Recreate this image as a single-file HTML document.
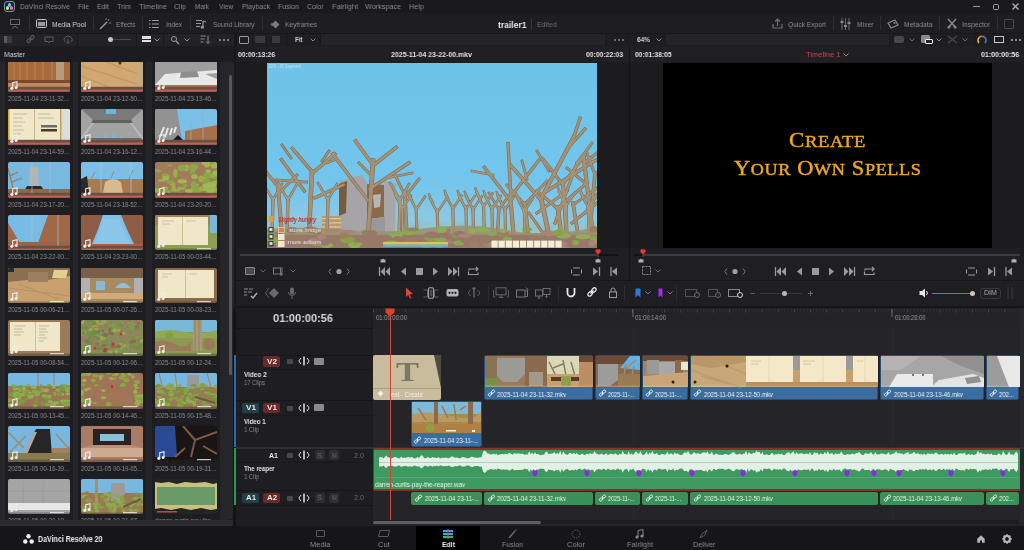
<!DOCTYPE html>
<html><head><meta charset="utf-8"><style>
html,body{margin:0;padding:0;}
body{width:1024px;height:550px;overflow:hidden;background:#1d1d21;position:relative;font-family:'Liberation Sans', sans-serif;}
div{position:absolute;box-sizing:border-box;}
.t{white-space:pre;will-change:transform;}
svg{position:absolute;overflow:visible;}
</style></head><body>
<div style="left:0px;top:0px;width:1024px;height:13px;background:#1a1a1d;"></div>
<div style="left:4px;top:1.2px;width:10.5px;height:10.5px;border-radius:3px;border:1.2px solid #8090a8;background:#1e2438"></div>
<div style="left:8px;top:3px;width:2.6px;height:3.6px;border-radius:50%;background:#5ad0f0"></div>
<div style="left:5.8px;top:6.2px;width:3px;height:3.6px;border-radius:50%;background:#c8f060"></div>
<div style="left:9.8px;top:6.2px;width:3px;height:3.6px;border-radius:50%;background:#f070a8"></div>
<div class="t" style="left:20px;top:2.50px;font-size:8px;line-height:8px;color:#8c8c90;font-weight:400;font-family:'Liberation Sans', sans-serif;transform:scaleX(0.8540);transform-origin:0 0;">DaVinci Resolve</div>
<div class="t" style="left:78px;top:2.50px;font-size:8px;line-height:8px;color:#8c8c90;font-weight:400;font-family:'Liberation Sans', sans-serif;transform:scaleX(0.8533);transform-origin:0 0;">File</div>
<div class="t" style="left:97px;top:2.50px;font-size:8px;line-height:8px;color:#8c8c90;font-weight:400;font-family:'Liberation Sans', sans-serif;transform:scaleX(0.8698);transform-origin:0 0;">Edit</div>
<div class="t" style="left:117px;top:2.50px;font-size:8px;line-height:8px;color:#8c8c90;font-weight:400;font-family:'Liberation Sans', sans-serif;transform:scaleX(0.8915);transform-origin:0 0;">Trim</div>
<div class="t" style="left:139px;top:2.50px;font-size:8px;line-height:8px;color:#8c8c90;font-weight:400;font-family:'Liberation Sans', sans-serif;transform:scaleX(0.9353);transform-origin:0 0;">Timeline</div>
<div class="t" style="left:174px;top:2.50px;font-size:8px;line-height:8px;color:#8c8c90;font-weight:400;font-family:'Liberation Sans', sans-serif;transform:scaleX(0.8707);transform-origin:0 0;">Clip</div>
<div class="t" style="left:195px;top:2.50px;font-size:8px;line-height:8px;color:#8c8c90;font-weight:400;font-family:'Liberation Sans', sans-serif;transform:scaleX(0.7873);transform-origin:0 0;">Mark</div>
<div class="t" style="left:219px;top:2.50px;font-size:8px;line-height:8px;color:#8c8c90;font-weight:400;font-family:'Liberation Sans', sans-serif;transform:scaleX(0.8138);transform-origin:0 0;">View</div>
<div class="t" style="left:242px;top:2.50px;font-size:8px;line-height:8px;color:#8c8c90;font-weight:400;font-family:'Liberation Sans', sans-serif;transform:scaleX(0.8624);transform-origin:0 0;">Playback</div>
<div class="t" style="left:278px;top:2.50px;font-size:8px;line-height:8px;color:#8c8c90;font-weight:400;font-family:'Liberation Sans', sans-serif;transform:scaleX(0.8744);transform-origin:0 0;">Fusion</div>
<div class="t" style="left:307px;top:2.50px;font-size:8px;line-height:8px;color:#8c8c90;font-weight:400;font-family:'Liberation Sans', sans-serif;transform:scaleX(0.8627);transform-origin:0 0;">Color</div>
<div class="t" style="left:332px;top:2.50px;font-size:8px;line-height:8px;color:#8c8c90;font-weight:400;font-family:'Liberation Sans', sans-serif;transform:scaleX(0.9138);transform-origin:0 0;">Fairlight</div>
<div class="t" style="left:365px;top:2.50px;font-size:8px;line-height:8px;color:#8c8c90;font-weight:400;font-family:'Liberation Sans', sans-serif;transform:scaleX(0.9028);transform-origin:0 0;">Workspace</div>
<div class="t" style="left:409px;top:2.50px;font-size:8px;line-height:8px;color:#8c8c90;font-weight:400;font-family:'Liberation Sans', sans-serif;transform:scaleX(0.9117);transform-origin:0 0;">Help</div>
<div style="left:973px;top:6px;width:7px;height:1px;background:#9a9a9e;"></div>
<div style="left:993px;top:3.5px;width:6px;height:6px;border:1.3px solid #a8a8ac;border-radius:1.5px"></div>
<svg style="left:1012px;top:3px" width="7" height="7"><path d="M0.5 0.5L6.5 6.5M6.5 0.5L0.5 6.5" stroke="#b0b0b4" stroke-width="1.3"/></svg>
<div style="left:0px;top:13px;width:1024px;height:20px;background:#1e1e21;"></div>
<div style="left:10px;top:19px;width:10px;height:6px;border:1px solid #6a6a6e"></div>
<svg style="left:11px;top:25px" width="8" height="4"><path d="M1 3.5L4 1L7 3.5" stroke="#6a6a6e" fill="none" stroke-width="1"/></svg>
<div style="left:29px;top:16px;width:1px;height:14px;background:#2e2e32;"></div>
<div style="left:92.5px;top:16px;width:1px;height:14px;background:#2e2e32;"></div>
<div style="left:142px;top:16px;width:1px;height:14px;background:#2e2e32;"></div>
<div style="left:190px;top:16px;width:1px;height:14px;background:#2e2e32;"></div>
<div style="left:261.5px;top:16px;width:1px;height:14px;background:#2e2e32;"></div>
<div style="left:833px;top:16px;width:1px;height:14px;background:#2e2e32;"></div>
<div style="left:880px;top:16px;width:1px;height:14px;background:#2e2e32;"></div>
<div style="left:939px;top:16px;width:1px;height:14px;background:#2e2e32;"></div>
<div style="left:997px;top:16px;width:1px;height:14px;background:#2e2e32;"></div>
<div style="left:36px;top:19px;width:11px;height:9px;border:1.3px solid #c0c0c4;border-radius:1.5px;background:#2a2a2e"></div>
<div style="left:38px;top:21.5px;width:7px;height:4px;background:#9a9aa0"></div>
<div class="t" style="left:52px;top:20.50px;font-size:8px;line-height:8px;color:#d4d4d8;font-weight:400;font-family:'Liberation Sans', sans-serif;transform:scaleX(0.8493);transform-origin:0 0;">Media Pool</div>
<svg style="left:99px;top:18px" width="12" height="12"><path d="M1 11L8 4" stroke="#9a9a9e" stroke-width="1.5"/><circle cx="9.5" cy="2" r="0.8" fill="#9a9a9e"/><circle cx="11" cy="5" r="0.8" fill="#9a9a9e"/><circle cx="7" cy="1" r="0.7" fill="#9a9a9e"/></svg>
<div class="t" style="left:115.5px;top:20.50px;font-size:8px;line-height:8px;color:#8c8c90;font-weight:400;font-family:'Liberation Sans', sans-serif;transform:scaleX(0.8021);transform-origin:0 0;">Effects</div>
<svg style="left:149px;top:19px" width="10" height="10"><path d="M0 1.5h1.5M3 1.5h7M0 5h1.5M3 5h7M0 8.5h1.5M3 8.5h7" stroke="#9a9a9e" stroke-width="1.2"/></svg>
<div class="t" style="left:166px;top:20.50px;font-size:8px;line-height:8px;color:#8c8c90;font-weight:400;font-family:'Liberation Sans', sans-serif;transform:scaleX(0.8172);transform-origin:0 0;">Index</div>
<svg style="left:196px;top:19px" width="10" height="10"><path d="M0 1.5h6M0 4.5h5M0 7.5h4" stroke="#9a9a9e" stroke-width="1.1"/><path d="M7 2v6" stroke="#9a9a9e" stroke-width="1.2"/><circle cx="6.3" cy="8.2" r="1.5" fill="#9a9a9e"/><path d="M7 2l3 1" stroke="#9a9a9e" stroke-width="1.2"/></svg>
<div class="t" style="left:212.5px;top:20.50px;font-size:8px;line-height:8px;color:#8c8c90;font-weight:400;font-family:'Liberation Sans', sans-serif;transform:scaleX(0.8331);transform-origin:0 0;">Sound Library</div>
<svg style="left:268px;top:20px" width="13" height="9"><path d="M2 4.5L4 2.5L6 4.5L4 6.5Z" fill="#5a5a5e"/><path d="M7.5 0.5L11.5 4.5L7.5 8.5L3.5 4.5Z" fill="#7a7a7e"/></svg>
<div class="t" style="left:285px;top:20.50px;font-size:8px;line-height:8px;color:#8c8c90;font-weight:400;font-family:'Liberation Sans', sans-serif;transform:scaleX(0.8369);transform-origin:0 0;">Keyframes</div>
<div class="t" style="left:497.5px;top:20.50px;font-size:9px;line-height:9px;color:#e8e8ec;font-weight:700;font-family:'Liberation Sans', sans-serif;transform:scaleX(0.9490);transform-origin:0 0;">trailer1</div>
<div style="left:531px;top:19px;width:1px;height:11px;background:#3a3a3e;"></div>
<div class="t" style="left:537px;top:21.00px;font-size:8px;line-height:8px;color:#6e6e72;font-weight:400;font-family:'Liberation Sans', sans-serif;transform:scaleX(0.8815);transform-origin:0 0;">Edited</div>
<svg style="left:772px;top:18px" width="11" height="11"><path d="M1 6v4h9V6" stroke="#6e6e72" fill="none" stroke-width="1.2"/><path d="M5.5 8V1M3 3.5L5.5 1L8 3.5" stroke="#6e6e72" fill="none" stroke-width="1.2"/></svg>
<div class="t" style="left:788px;top:20.50px;font-size:8px;line-height:8px;color:#8c8c90;font-weight:400;font-family:'Liberation Sans', sans-serif;transform:scaleX(0.8298);transform-origin:0 0;">Quick Export</div>
<svg style="left:840px;top:18px" width="11" height="12"><path d="M2 0v12M5.5 0v12M9 0v12" stroke="#76767a" stroke-width="0.9"/><rect x="0.5" y="3" width="3" height="2" fill="#8a8a8e"/><rect x="4" y="7" width="3" height="2" fill="#8a8a8e"/><rect x="7.5" y="4" width="3" height="2" fill="#8a8a8e"/></svg>
<div class="t" style="left:856.5px;top:20.50px;font-size:8px;line-height:8px;color:#8c8c90;font-weight:400;font-family:'Liberation Sans', sans-serif;transform:scaleX(0.8435);transform-origin:0 0;">Mixer</div>
<svg style="left:887px;top:19px" width="12" height="10"><path d="M1 4L8 1L11 6L4 9Z" stroke="#8a8a8e" fill="none" stroke-width="1.2"/><circle cx="7.5" cy="4" r="1" fill="#8a8a8e"/></svg>
<div class="t" style="left:903.5px;top:20.50px;font-size:8px;line-height:8px;color:#8c8c90;font-weight:400;font-family:'Liberation Sans', sans-serif;transform:scaleX(0.8543);transform-origin:0 0;">Metadata</div>
<svg style="left:947px;top:18px" width="10" height="11"><path d="M1 1L9 10M9 1L1 10" stroke="#8a8a8e" stroke-width="1.4"/><circle cx="2" cy="9" r="1.5" fill="#8a8a8e"/><circle cx="8" cy="9" r="1.5" fill="#8a8a8e"/></svg>
<div class="t" style="left:962px;top:20.50px;font-size:8px;line-height:8px;color:#8c8c90;font-weight:400;font-family:'Liberation Sans', sans-serif;transform:scaleX(0.8509);transform-origin:0 0;">Inspector</div>
<div style="left:1004px;top:19px;width:10px;height:10px;border:1px solid #4a4a4e;border-radius:1px"></div>
<div style="left:0px;top:33px;width:1024px;height:13px;background:#1e1e21;"></div>
<div style="left:0px;top:33px;width:234px;height:13px;background:#232327;"></div>
<div style="left:321px;top:34px;width:284px;height:11px;background:#252529;"></div>
<div style="left:666px;top:34px;width:223px;height:11px;background:#252529;"></div>
<div style="left:0px;top:33px;width:1024px;height:1px;background:#17171a;"></div>
<div style="left:0px;top:45.5px;width:1024px;height:1px;background:#19191c;"></div>
<div style="left:25px;top:33px;width:1px;height:13px;background:#1a1a1d;"></div>
<div style="left:51px;top:33px;width:1px;height:13px;background:#1a1a1d;"></div>
<div style="left:77px;top:33px;width:1px;height:13px;background:#1a1a1d;"></div>
<div style="left:136px;top:33px;width:1px;height:13px;background:#1a1a1d;"></div>
<div style="left:163px;top:33px;width:1px;height:13px;background:#1a1a1d;"></div>
<div style="left:234px;top:33px;width:1px;height:13px;background:#1a1a1d;"></div>
<div style="left:4px;top:36px;width:8px;height:7px;background:#3a3a3e;"></div>
<div style="left:4px;top:36px;width:3px;height:7px;background:#5a5a5e;"></div>
<svg style="left:26px;top:35px" width="9" height="9"><path d="M3.5 5.5L5.5 3.5" stroke="#5e5e62" stroke-width="1"/><rect x="0.8" y="4.3" width="4" height="3" rx="1.5" transform="rotate(-45 2.8 5.8)" stroke="#5e5e62" fill="none"/><rect x="4.2" y="1" width="4" height="3" rx="1.5" transform="rotate(-45 6.2 2.5)" stroke="#5e5e62" fill="none"/></svg>
<svg style="left:44px;top:35.5px" width="10" height="8"><path d="M1 1h8v4.5H6L5 7L4 5.5H1Z" stroke="#5e5e62" fill="none"/></svg>
<svg style="left:62.5px;top:35px" width="10" height="9"><path d="M2.5 6.5A2.2 2.2 0 0 1 2.8 2.3A3 3 0 0 1 8 3A1.8 1.8 0 0 1 8 6.5" stroke="#5e5e62" fill="none"/><path d="M5 4v4.5M3.5 7L5 8.5L6.5 7" stroke="#5e5e62" fill="none"/></svg>
<div style="left:112px;top:39px;width:19px;height:1.2px;background:#4a4a4e;"></div>
<div style="left:107.5px;top:36.5px;width:5.5px;height:5.5px;border-radius:50%;background:#c4c4c8"></div>
<div style="left:142.0px;top:36.3px;width:2.6px;height:2.6px;background:#e0e0e4;"></div>
<div style="left:142.0px;top:39.5px;width:2.6px;height:2.6px;background:#e0e0e4;"></div>
<div style="left:145.2px;top:36.3px;width:2.6px;height:2.6px;background:#e0e0e4;"></div>
<div style="left:145.2px;top:39.5px;width:2.6px;height:2.6px;background:#e0e0e4;"></div>
<div style="left:148.4px;top:36.3px;width:2.6px;height:2.6px;background:#e0e0e4;"></div>
<div style="left:148.4px;top:39.5px;width:2.6px;height:2.6px;background:#e0e0e4;"></div>
<svg style="left:154px;top:38px" width="6" height="4"><path d="M0.5 0.5L3 3L5.5 0.5" stroke="#8a8a8e" fill="none"/></svg>
<div style="left:171px;top:36px;width:6px;height:6px;border:1.2px solid #9a9a9e;border-radius:50%"></div>
<svg style="left:176px;top:41px" width="4" height="4"><path d="M0 0L3 3" stroke="#9a9a9e" stroke-width="1.3"/></svg>
<svg style="left:184px;top:38px" width="6" height="4"><path d="M0.5 0.5L3 3L5.5 0.5" stroke="#8a8a8e" fill="none"/></svg>
<svg style="left:200px;top:35px" width="10" height="9"><path d="M0.5 1h5M0.5 4h4M0.5 7h3M8 0.5v8M6 6.5L8 8.5L10 6.5" stroke="#8a8a8e" fill="none" stroke-width="1"/></svg>
<div style="left:219px;top:38.5px;width:2px;height:2px;border-radius:50%;background:#9a9a9e"></div>
<div style="left:223px;top:38.5px;width:2px;height:2px;border-radius:50%;background:#9a9a9e"></div>
<div style="left:227px;top:38.5px;width:2px;height:2px;border-radius:50%;background:#9a9a9e"></div>
<div style="left:234px;top:33px;width:3px;height:13px;background:#18181b;"></div>
<div style="left:239px;top:35.5px;width:10px;height:8px;border:1.2px solid #9a9a9e;border-radius:1px"></div>
<div style="left:255px;top:36px;width:10px;height:7px;background:#3a3a3e;"></div>
<div style="left:272px;top:36px;width:8px;height:7px;background:#3a3a3e;"></div>
<div style="left:287px;top:33px;width:1px;height:13px;background:#1a1a1d;"></div>
<div style="left:320px;top:33px;width:1px;height:13px;background:#1a1a1d;"></div>
<div style="left:605px;top:33px;width:1px;height:13px;background:#1a1a1d;"></div>
<div style="left:627px;top:33px;width:1px;height:13px;background:#1a1a1d;"></div>
<div style="left:665px;top:33px;width:1px;height:13px;background:#1a1a1d;"></div>
<div style="left:889px;top:33px;width:1px;height:13px;background:#1a1a1d;"></div>
<div style="left:975px;top:33px;width:1px;height:13px;background:#1a1a1d;"></div>
<div style="left:990px;top:33px;width:1px;height:13px;background:#1a1a1d;"></div>
<div style="left:1006px;top:33px;width:1px;height:13px;background:#1a1a1d;"></div>
<div class="t" style="left:295px;top:36.00px;font-size:7px;line-height:7px;color:#d0d0d4;font-weight:700;font-family:'Liberation Sans', sans-serif;transform:scaleX(0.8759);transform-origin:0 0;">Fit</div>
<svg style="left:310px;top:38px" width="6" height="4"><path d="M0.5 0.5L3 3L5.5 0.5" stroke="#8a8a8e" fill="none"/></svg>
<div style="left:614px;top:38.5px;width:2px;height:2px;border-radius:50%;background:#8a8a8e"></div>
<div style="left:618px;top:38.5px;width:2px;height:2px;border-radius:50%;background:#8a8a8e"></div>
<div style="left:622px;top:38.5px;width:2px;height:2px;border-radius:50%;background:#8a8a8e"></div>
<div class="t" style="left:637px;top:36.00px;font-size:7px;line-height:7px;color:#d0d0d4;font-weight:700;font-family:'Liberation Sans', sans-serif;transform:scaleX(0.9275);transform-origin:0 0;">64%</div>
<svg style="left:656px;top:38px" width="6" height="4"><path d="M0.5 0.5L3 3L5.5 0.5" stroke="#8a8a8e" fill="none"/></svg>
<div style="left:894px;top:36px;width:10px;height:7px;border-radius:2px;background:#48484c"></div>
<svg style="left:909px;top:38px" width="6" height="4"><path d="M0.5 0.5L3 3L5.5 0.5" stroke="#6a6a6e" fill="none"/></svg>
<div style="left:921px;top:35px;width:9px;height:8px;background:#8a8a8e;border-radius:1.5px"></div>
<div style="left:924.5px;top:39px;width:8px;height:5px;border:1.2px solid #f0f0f0;background:#232327;border-radius:1px"></div>
<svg style="left:936px;top:38px" width="6" height="4"><path d="M0.5 0.5L3 3L5.5 0.5" stroke="#8a8a8e" fill="none"/></svg>
<svg style="left:947px;top:35px" width="11" height="9"><path d="M1 1L10 8M10 1L1 8" stroke="#4a4a4e" stroke-width="1.5"/></svg>
<svg style="left:962px;top:38px" width="6" height="4"><path d="M0.5 0.5L3 3L5.5 0.5" stroke="#6a6a6e" fill="none"/></svg>
<svg style="left:977px;top:35px" width="10" height="10"><path d="M2 8A4 4 0 1 1 8 8" stroke="url(#rg)" fill="none" stroke-width="1.6"/><defs><linearGradient id="rg"><stop offset="0" stop-color="#e0d040"/><stop offset="0.5" stop-color="#e04080"/><stop offset="1" stop-color="#4080e0"/></linearGradient></defs></svg>
<div style="left:994px;top:36px;width:10px;height:7px;border:1.2px solid #c8c8cc"></div>
<div style="left:1011px;top:38.5px;width:2px;height:2px;border-radius:50%;background:#b0b0b4"></div>
<div style="left:1015px;top:38.5px;width:2px;height:2px;border-radius:50%;background:#b0b0b4"></div>
<div style="left:1019px;top:38.5px;width:2px;height:2px;border-radius:50%;background:#b0b0b4"></div>
<div style="left:0px;top:46px;width:234px;height:16px;background:#1c1c20;"></div>
<div class="t" style="left:4px;top:50.75px;font-size:7.5px;line-height:7.5px;color:#d8d8dc;font-weight:400;font-family:'Liberation Sans', sans-serif;transform:scaleX(0.9162);transform-origin:0 0;">Master</div>
<div style="left:0px;top:62px;width:228px;height:458px;background:#26262a;"></div>
<div style="left:5px;top:62px;width:67.5px;height:458px;background:#1e1e22;"></div>
<div style="left:78px;top:62px;width:67.5px;height:458px;background:#1e1e22;"></div>
<div style="left:152px;top:62px;width:67.5px;height:458px;background:#1e1e22;"></div>
<div style="left:225.5px;top:62px;width:8.3px;height:457px;background:#27272b;border-radius:3px"></div>
<div style="left:228.8px;top:75px;width:3.5px;height:300px;background:#555a62;border-radius:2px"></div>
<div style="left:233.8px;top:46px;width:2.2px;height:480px;background:#18181a;"></div>
<svg style="left:8px;top:56.4px;border-radius:2px;overflow:hidden" width="62" height="35.5" viewBox="0 0 62 35.5" preserveAspectRatio="none"><rect width="62" height="36" fill="#a86c3c"/><rect width="30" height="6" fill="#8a9ca4"/><rect x="30" width="32" height="4" fill="#b09070"/><path d="M6 4v24M12 6v22M19 3v25M27 5v23M35 4v24M44 6v22" stroke="#b47c4c" stroke-width="1.5"/><rect x="48" y="0" width="8" height="31" fill="#b89a7a"/><rect y="24" width="62" height="3" fill="#7a4a30"/><rect y="27" width="62" height="4" fill="#c08a5a"/><rect y="30.8" width="62" height="6" fill="#6a5040"/><rect x="0" y="33.6" width="62" height="2" fill="#c0605a"/></svg>
<svg style="left:10px;top:80.9px" width="8" height="9"><path d="M2.7 7.3V1.6L7 0.7V6.3" stroke="#ececec" fill="none" stroke-width="1.1"/><circle cx="1.8" cy="7.3" r="1.6" fill="#ececec"/><circle cx="6.1" cy="6.4" r="1.5" fill="#ececec"/></svg>
<div class="t" style="left:8px;top:94.90px;font-size:7px;line-height:7px;color:#8e8e92;font-weight:400;font-family:'Liberation Sans', sans-serif;transform:scaleX(0.8643);transform-origin:0 0;">2025-11-04 23-11-32...</div>
<svg style="left:81px;top:56.4px;border-radius:2px;overflow:hidden" width="62" height="35.5" viewBox="0 0 62 35.5" preserveAspectRatio="none"><rect width="62" height="36" fill="#d2a872"/><path d="M0 0h62v8L40 0Z" fill="#c49a68"/><path d="M0 10L62 30M0 20L40 36M10 0L62 20" stroke="#c49866" stroke-width="1.5"/><circle cx="39" cy="7" r="1.5" fill="#4a2a1a"/><rect x="56" y="0" width="6" height="31" fill="#c8aa80"/><rect y="30.8" width="62" height="6" fill="#6a5040"/><rect x="0" y="33.6" width="62" height="2" fill="#c0605a"/></svg>
<svg style="left:83px;top:80.9px" width="8" height="9"><path d="M2.7 7.3V1.6L7 0.7V6.3" stroke="#ececec" fill="none" stroke-width="1.1"/><circle cx="1.8" cy="7.3" r="1.6" fill="#ececec"/><circle cx="6.1" cy="6.4" r="1.5" fill="#ececec"/></svg>
<div class="t" style="left:81px;top:94.90px;font-size:7px;line-height:7px;color:#8e8e92;font-weight:400;font-family:'Liberation Sans', sans-serif;transform:scaleX(0.8580);transform-origin:0 0;">2025-11-04 23-12-50...</div>
<svg style="left:155px;top:56.4px;border-radius:2px;overflow:hidden" width="62" height="35.5" viewBox="0 0 62 35.5" preserveAspectRatio="none"><rect width="62" height="36" fill="#9e9e9e"/><path d="M0 29L10 18L62 14V31H0Z" fill="#e8e8e8"/><path d="M26 16L42 15L44 21L25 22Z" fill="#8e8e8e"/><path d="M50 18L62 17V23Z" fill="#a0a0a0"/><rect y="29" width="62" height="2.5" fill="#c06858"/><rect y="30.8" width="62" height="6" fill="#6a5040"/><rect x="0" y="33.6" width="62" height="2" fill="#c0605a"/></svg>
<svg style="left:157px;top:80.9px" width="8" height="9"><path d="M2.7 7.3V1.6L7 0.7V6.3" stroke="#ececec" fill="none" stroke-width="1.1"/><circle cx="1.8" cy="7.3" r="1.6" fill="#ececec"/><circle cx="6.1" cy="6.4" r="1.5" fill="#ececec"/></svg>
<div class="t" style="left:155px;top:94.90px;font-size:7px;line-height:7px;color:#8e8e92;font-weight:400;font-family:'Liberation Sans', sans-serif;transform:scaleX(0.8580);transform-origin:0 0;">2025-11-04 23-13-46...</div>
<svg style="left:8px;top:109.2px;border-radius:2px;overflow:hidden" width="62" height="35.5" viewBox="0 0 62 35.5" preserveAspectRatio="none"><rect width="62" height="36" fill="#f0e6c8"/><rect width="1.6" height="36" fill="#d8a840"/><rect x="26" width="1" height="31" fill="#c8b890"/><rect x="54" width="8" height="31" fill="#dcdcd8"/><rect x="52" width="1.5" height="31" fill="#c0a060"/><rect x="33" y="16" width="16" height="2.5" fill="#6a6a6a"/><rect x="33" y="20" width="16" height="2.5" fill="#4a3a2a"/><path d="M5 5h14M5 9h10M5 13h12M5 17h9M5 21h11M5 25h8M30 5h12M30 9h16" stroke="#b8b0a0" stroke-width="0.8"/><rect y="30.8" width="62" height="6" fill="#6a5040"/><rect x="0" y="33.6" width="62" height="2" fill="#c0605a"/></svg>
<svg style="left:10px;top:133.7px" width="8" height="9"><path d="M2.7 7.3V1.6L7 0.7V6.3" stroke="#ececec" fill="none" stroke-width="1.1"/><circle cx="1.8" cy="7.3" r="1.6" fill="#ececec"/><circle cx="6.1" cy="6.4" r="1.5" fill="#ececec"/></svg>
<div class="t" style="left:8px;top:147.70px;font-size:7px;line-height:7px;color:#8e8e92;font-weight:400;font-family:'Liberation Sans', sans-serif;transform:scaleX(0.8580);transform-origin:0 0;">2025-11-04 23-14-59...</div>
<svg style="left:81px;top:109.2px;border-radius:2px;overflow:hidden" width="62" height="35.5" viewBox="0 0 62 35.5" preserveAspectRatio="none"><rect width="62" height="36" fill="#a2a2a2"/><path d="M0 0H62L50 11H12Z" fill="#7a7a7a"/><rect x="25" y="0" width="10" height="5" fill="#64b8e6"/><path d="M12 11H50L52 14H10Z" fill="#606060"/><path d="M16 30Q17 20 18 30M23 30Q24.5 18 26 30M31 30Q32.5 18 34 30M39 30Q40 20 41 30" fill="#64c0f0"/><rect y="29" width="62" height="3" fill="#6a6a6a"/><path d="M12 14L0 30M50 14L62 30" stroke="#bababa" stroke-width="2"/><rect y="30.8" width="62" height="6" fill="#6a5040"/><rect x="0" y="33.6" width="62" height="2" fill="#c0605a"/></svg>
<svg style="left:83px;top:133.7px" width="8" height="9"><path d="M2.7 7.3V1.6L7 0.7V6.3" stroke="#ececec" fill="none" stroke-width="1.1"/><circle cx="1.8" cy="7.3" r="1.6" fill="#ececec"/><circle cx="6.1" cy="6.4" r="1.5" fill="#ececec"/></svg>
<div class="t" style="left:81px;top:147.70px;font-size:7px;line-height:7px;color:#8e8e92;font-weight:400;font-family:'Liberation Sans', sans-serif;transform:scaleX(0.8580);transform-origin:0 0;">2025-11-04 23-16-12...</div>
<svg style="left:155px;top:109.2px;border-radius:2px;overflow:hidden" width="62" height="35.5" viewBox="0 0 62 35.5" preserveAspectRatio="none"><rect width="62" height="36" fill="#7ac0e8"/><path d="M0 0H22L27 31H0Z" fill="#929292"/><path d="M30 22L62 16V31H30Z" fill="#a87048"/><path d="M36 14v17M48 0v31" stroke="#90b0c0" stroke-width="0.8"/><path d="M5 28L9 18M10 28L13 19M15 26L17 19M19 24L21 18" stroke="#e8e8e8" stroke-width="2"/><path d="M18 31L23 26L28 31Z" fill="#1a1a1a"/><rect y="30.8" width="62" height="6" fill="#6a5040"/><rect x="0" y="33.6" width="62" height="2" fill="#c0605a"/></svg>
<svg style="left:157px;top:133.7px" width="8" height="9"><path d="M2.7 7.3V1.6L7 0.7V6.3" stroke="#ececec" fill="none" stroke-width="1.1"/><circle cx="1.8" cy="7.3" r="1.6" fill="#ececec"/><circle cx="6.1" cy="6.4" r="1.5" fill="#ececec"/></svg>
<div class="t" style="left:155px;top:147.70px;font-size:7px;line-height:7px;color:#8e8e92;font-weight:400;font-family:'Liberation Sans', sans-serif;transform:scaleX(0.8580);transform-origin:0 0;">2025-11-04 23-16-44...</div>
<svg style="left:8px;top:162.0px;border-radius:2px;overflow:hidden" width="62" height="35.5" viewBox="0 0 62 35.5" preserveAspectRatio="none"><rect width="62" height="36" fill="#7ab8e0"/><path d="M0 6L6 30M2 14L10 10M4 20L14 16" stroke="#9a7a58" stroke-width="1.3"/><path d="M22 5h8l1 20h-10Z" fill="#b4b4b4"/><path d="M19 24h14l5 7H15Z" fill="#2a2a2a"/><rect y="27" width="62" height="4" fill="#8a6a4a"/><path d="M20 28h6" stroke="#c83030" stroke-width="1"/><path d="M24 0v31M42 0v31" stroke="#a0c0d0" stroke-width="0.7"/><rect y="30.8" width="62" height="6" fill="#6a5040"/><rect x="0" y="33.6" width="62" height="2" fill="#c0605a"/></svg>
<svg style="left:10px;top:186.5px" width="8" height="9"><path d="M2.7 7.3V1.6L7 0.7V6.3" stroke="#ececec" fill="none" stroke-width="1.1"/><circle cx="1.8" cy="7.3" r="1.6" fill="#ececec"/><circle cx="6.1" cy="6.4" r="1.5" fill="#ececec"/></svg>
<div class="t" style="left:8px;top:200.50px;font-size:7px;line-height:7px;color:#8e8e92;font-weight:400;font-family:'Liberation Sans', sans-serif;transform:scaleX(0.8580);transform-origin:0 0;">2025-11-04 23-17-20...</div>
<svg style="left:81px;top:162.0px;border-radius:2px;overflow:hidden" width="62" height="35.5" viewBox="0 0 62 35.5" preserveAspectRatio="none"><rect width="62" height="36" fill="#7cbee6"/><path d="M0 17h62v14H0Z" fill="#a87a50"/><path d="M0 17L6 14L8 31H0Z" fill="#2a2a2a"/><path d="M24 20Q32 14 40 20L42 31H22Z" fill="#d8ba90"/><path d="M10 17L14 10M48 17L52 8M30 16L33 9" stroke="#9a8a70" stroke-width="1"/><path d="M20 0v31M50 0v31" stroke="#a0c8e0" stroke-width="0.7"/><rect y="30.8" width="62" height="6" fill="#6a5040"/><rect x="0" y="33.6" width="62" height="2" fill="#c0605a"/></svg>
<svg style="left:83px;top:186.5px" width="8" height="9"><path d="M2.7 7.3V1.6L7 0.7V6.3" stroke="#ececec" fill="none" stroke-width="1.1"/><circle cx="1.8" cy="7.3" r="1.6" fill="#ececec"/><circle cx="6.1" cy="6.4" r="1.5" fill="#ececec"/></svg>
<div class="t" style="left:81px;top:200.50px;font-size:7px;line-height:7px;color:#8e8e92;font-weight:400;font-family:'Liberation Sans', sans-serif;transform:scaleX(0.8580);transform-origin:0 0;">2025-11-04 23-18-52...</div>
<svg style="left:155px;top:162.0px;border-radius:2px;overflow:hidden" width="62" height="35.5" viewBox="0 0 62 35.5" preserveAspectRatio="none"><rect width="62" height="36" fill="#a27a5c"/><ellipse cx="14.6" cy="3.4" rx="2.5" ry="1.3" fill="#8aa848"/><ellipse cx="48.3" cy="27.3" rx="4.8" ry="1.3" fill="#a0b850"/><ellipse cx="50.0" cy="26.4" rx="2.9" ry="2.5" fill="#a0b850"/><ellipse cx="59.6" cy="28.0" rx="4.5" ry="1.9" fill="#8aa848"/><ellipse cx="31.4" cy="5.9" rx="2.3" ry="3.1" fill="#a0b850"/><ellipse cx="52.1" cy="0.2" rx="4.1" ry="1.8" fill="#a0b850"/><ellipse cx="12.1" cy="14.0" rx="3.4" ry="1.7" fill="#8aa848"/><ellipse cx="50.4" cy="1.4" rx="3.9" ry="1.8" fill="#a0b850"/><ellipse cx="40.2" cy="23.1" rx="4.0" ry="1.3" fill="#98b048"/><ellipse cx="39.4" cy="14.6" rx="3.3" ry="2.4" fill="#a0b850"/><ellipse cx="34.6" cy="29.8" rx="2.2" ry="1.7" fill="#a0b850"/><ellipse cx="38.2" cy="7.8" rx="2.5" ry="2.1" fill="#98b048"/><ellipse cx="17.7" cy="22.3" rx="3.0" ry="1.8" fill="#98b048"/><ellipse cx="38.5" cy="27.0" rx="2.6" ry="2.1" fill="#98b048"/><ellipse cx="15.5" cy="19.8" rx="3.7" ry="1.9" fill="#8aa848"/><ellipse cx="10.5" cy="25.9" rx="2.9" ry="1.4" fill="#98b048"/><ellipse cx="26.3" cy="6.9" rx="2.2" ry="1.5" fill="#a0b850"/><ellipse cx="60.2" cy="20.0" rx="3.7" ry="1.8" fill="#98b048"/><ellipse cx="25.4" cy="32.6" rx="2.7" ry="2.0" fill="#98b048"/><ellipse cx="26.5" cy="7.1" rx="2.1" ry="1.7" fill="#a0b850"/><ellipse cx="35.1" cy="32.7" rx="4.7" ry="2.5" fill="#a0b850"/><ellipse cx="46.2" cy="16.3" rx="2.6" ry="2.9" fill="#98b048"/><ellipse cx="39.8" cy="26.9" rx="4.0" ry="2.6" fill="#8aa848"/><ellipse cx="53.2" cy="9.2" rx="2.6" ry="2.0" fill="#a0b850"/><ellipse cx="0.8" cy="28.9" rx="4.4" ry="2.8" fill="#98b048"/><ellipse cx="34.1" cy="29.0" rx="4.0" ry="1.9" fill="#a0b850"/><ellipse cx="48.0" cy="15.6" rx="2.1" ry="1.3" fill="#a0b850"/><ellipse cx="7.0" cy="18.5" rx="4.3" ry="1.3" fill="#98b048"/><ellipse cx="47.6" cy="17.3" rx="4.5" ry="2.9" fill="#98b048"/><ellipse cx="59.5" cy="15.0" rx="4.9" ry="2.0" fill="#8aa848"/><ellipse cx="53.0" cy="13.2" rx="4.7" ry="2.8" fill="#8aa848"/><ellipse cx="26.2" cy="26.3" rx="4.6" ry="1.6" fill="#98b048"/><ellipse cx="20.2" cy="28.4" rx="4.9" ry="1.2" fill="#98b048"/><ellipse cx="30.2" cy="23.6" rx="2.2" ry="1.7" fill="#8aa848"/><ellipse cx="38.9" cy="22.3" rx="2.9" ry="3.0" fill="#8aa848"/><ellipse cx="61.1" cy="11.2" rx="3.8" ry="2.6" fill="#a0b850"/><ellipse cx="11.0" cy="29.8" rx="3.7" ry="1.9" fill="#a0b850"/><ellipse cx="54.8" cy="2.5" rx="4.7" ry="1.9" fill="#8aa848"/><ellipse cx="20.3" cy="9.9" rx="2.1" ry="3.1" fill="#98b048"/><ellipse cx="60.0" cy="3.9" rx="4.0" ry="2.7" fill="#a0b850"/><ellipse cx="42.6" cy="29.1" rx="3.5" ry="1.6" fill="#8aa848"/><ellipse cx="61.8" cy="29.7" rx="3.2" ry="2.8" fill="#8aa848"/><ellipse cx="27.2" cy="19.4" rx="4.7" ry="2.1" fill="#a0b850"/><ellipse cx="38.6" cy="5.1" rx="4.9" ry="3.2" fill="#8aa848"/><ellipse cx="37.4" cy="10.3" rx="2.8" ry="1.6" fill="#8aa848"/><ellipse cx="55.3" cy="25.7" rx="2.7" ry="1.8" fill="#98b048"/><ellipse cx="33.9" cy="31.7" rx="3.6" ry="1.5" fill="#98b048"/><ellipse cx="12.7" cy="31.3" rx="2.8" ry="3.0" fill="#a0b850"/><ellipse cx="54.5" cy="23.7" rx="4.1" ry="2.6" fill="#a0b850"/><ellipse cx="9.7" cy="13.6" rx="2.9" ry="2.2" fill="#8aa848"/><ellipse cx="10.4" cy="28.9" rx="3.2" ry="2.6" fill="#8aa848"/><ellipse cx="20.4" cy="12.8" rx="2.1" ry="3.0" fill="#98b048"/><ellipse cx="18.8" cy="26.1" rx="2.3" ry="2.4" fill="#98b048"/><ellipse cx="51.7" cy="19.4" rx="3.9" ry="3.0" fill="#8aa848"/><ellipse cx="57.7" cy="27.5" rx="4.2" ry="2.8" fill="#98b048"/><ellipse cx="55.4" cy="29.1" rx="4.1" ry="2.4" fill="#a0b850"/><ellipse cx="51.3" cy="23.5" rx="4.0" ry="1.9" fill="#a0b850"/><ellipse cx="56.3" cy="23.0" rx="4.9" ry="2.9" fill="#a0b850"/><ellipse cx="52.0" cy="2.4" rx="2.8" ry="3.1" fill="#a0b850"/><ellipse cx="60.4" cy="0.3" rx="2.6" ry="1.7" fill="#a0b850"/><ellipse cx="46.4" cy="26.9" rx="3.2" ry="2.4" fill="#98b048"/><ellipse cx="10.7" cy="16.3" rx="3.5" ry="2.2" fill="#a0b850"/><ellipse cx="27.1" cy="5.8" rx="4.7" ry="3.1" fill="#8aa848"/><ellipse cx="57.5" cy="13.5" rx="2.6" ry="1.8" fill="#98b048"/><ellipse cx="1.9" cy="8.7" rx="4.7" ry="1.5" fill="#8aa848"/><ellipse cx="5.4" cy="32.5" rx="2.3" ry="1.6" fill="#8aa848"/><ellipse cx="41.5" cy="29.4" rx="2.3" ry="1.9" fill="#8aa848"/><ellipse cx="35.3" cy="6.7" rx="3.6" ry="1.4" fill="#8aa848"/><rect y="30.8" width="62" height="6" fill="#6a5040"/><rect x="0" y="33.6" width="62" height="2" fill="#c0605a"/></svg>
<svg style="left:157px;top:186.5px" width="8" height="9"><path d="M2.7 7.3V1.6L7 0.7V6.3" stroke="#ececec" fill="none" stroke-width="1.1"/><circle cx="1.8" cy="7.3" r="1.6" fill="#ececec"/><circle cx="6.1" cy="6.4" r="1.5" fill="#ececec"/></svg>
<div class="t" style="left:155px;top:200.50px;font-size:7px;line-height:7px;color:#8e8e92;font-weight:400;font-family:'Liberation Sans', sans-serif;transform:scaleX(0.8580);transform-origin:0 0;">2025-11-04 23-20-20...</div>
<svg style="left:8px;top:214.8px;border-radius:2px;overflow:hidden" width="62" height="35.5" viewBox="0 0 62 35.5" preserveAspectRatio="none"><rect width="62" height="36" fill="#78bce4"/><path d="M0 8L12 28H0Z" fill="#a06848"/><path d="M40 0H62V31H20L30 28Z" fill="#a06848"/><rect y="27" width="62" height="4" fill="#9a6448"/><path d="M24 0v27M50 0v31" stroke="#a0c0d0" stroke-width="0.7"/><rect y="30.8" width="62" height="6" fill="#6a5040"/><rect x="0" y="33.6" width="62" height="2" fill="#c0605a"/></svg>
<svg style="left:10px;top:239.3px" width="8" height="9"><path d="M2.7 7.3V1.6L7 0.7V6.3" stroke="#ececec" fill="none" stroke-width="1.1"/><circle cx="1.8" cy="7.3" r="1.6" fill="#ececec"/><circle cx="6.1" cy="6.4" r="1.5" fill="#ececec"/></svg>
<div class="t" style="left:8px;top:253.30px;font-size:7px;line-height:7px;color:#8e8e92;font-weight:400;font-family:'Liberation Sans', sans-serif;transform:scaleX(0.8580);transform-origin:0 0;">2025-11-04 23-22-00...</div>
<svg style="left:81px;top:214.8px;border-radius:2px;overflow:hidden" width="62" height="35.5" viewBox="0 0 62 35.5" preserveAspectRatio="none"><rect width="62" height="36" fill="#8e5c44"/><path d="M22 0H40Q48 20 54 31H10Q16 18 22 0Z" fill="#80c0e8"/><path d="M22 0H40Q48 20 54 31H10Q16 18 22 0Z" fill="#a0d0f0" opacity="0.4" transform="translate(4 4) scale(0.85)"/><rect y="29" width="62" height="2" fill="#b85a4a"/><rect y="30.8" width="62" height="6" fill="#6a5040"/><rect x="0" y="33.6" width="62" height="2" fill="#c0605a"/></svg>
<svg style="left:83px;top:239.3px" width="8" height="9"><path d="M2.7 7.3V1.6L7 0.7V6.3" stroke="#ececec" fill="none" stroke-width="1.1"/><circle cx="1.8" cy="7.3" r="1.6" fill="#ececec"/><circle cx="6.1" cy="6.4" r="1.5" fill="#ececec"/></svg>
<div class="t" style="left:81px;top:253.30px;font-size:7px;line-height:7px;color:#8e8e92;font-weight:400;font-family:'Liberation Sans', sans-serif;transform:scaleX(0.8580);transform-origin:0 0;">2025-11-04 23-23-00...</div>
<svg style="left:155px;top:214.8px;border-radius:2px;overflow:hidden" width="62" height="35.5" viewBox="0 0 62 35.5" preserveAspectRatio="none"><rect width="62" height="36" fill="#8aa050"/><rect width="62" height="10" fill="#a08060"/><rect x="3" y="2" width="50" height="28" fill="#f0e6c8"/><rect x="27" y="2" width="0.8" height="28" fill="#c8b890"/><rect x="55" y="0" width="7" height="18" fill="#7ab8d8"/><path d="M7 6h12M7 9h8M31 6h10" stroke="#b8b0a0" stroke-width="0.7"/><rect y="33.5" width="62" height="3" fill="#2a2a2a" opacity="0.35"/><rect x="42" y="33" width="14" height="1.2" fill="#f0f0f0" opacity="0.8"/></svg>
<svg style="left:157px;top:239.3px" width="8" height="9"><path d="M2.7 7.3V1.6L7 0.7V6.3" stroke="#ececec" fill="none" stroke-width="1.1"/><circle cx="1.8" cy="7.3" r="1.6" fill="#ececec"/><circle cx="6.1" cy="6.4" r="1.5" fill="#ececec"/></svg>
<div class="t" style="left:155px;top:253.30px;font-size:7px;line-height:7px;color:#8e8e92;font-weight:400;font-family:'Liberation Sans', sans-serif;transform:scaleX(0.8580);transform-origin:0 0;">2025-11-05 00-03-44...</div>
<svg style="left:8px;top:267.6px;border-radius:2px;overflow:hidden" width="62" height="35.5" viewBox="0 0 62 35.5" preserveAspectRatio="none"><rect width="62" height="36" fill="#c8a070"/><path d="M0 0H62V8L40 12H20L0 14Z" fill="#8a7050"/><path d="M20 4H40V14H20Z" fill="#9a8060"/><path d="M46 2H60L58 10H44Z" fill="#e0d090"/><path d="M0 20L62 28M10 16L50 31" stroke="#b89060" stroke-width="1"/><rect x="0" y="0" width="6" height="4" fill="#2a2a2a"/><rect y="33.5" width="62" height="3" fill="#2a2a2a" opacity="0.35"/><rect x="42" y="33" width="14" height="1.2" fill="#f0f0f0" opacity="0.8"/></svg>
<svg style="left:10px;top:292.1px" width="8" height="9"><path d="M2.7 7.3V1.6L7 0.7V6.3" stroke="#ececec" fill="none" stroke-width="1.1"/><circle cx="1.8" cy="7.3" r="1.6" fill="#ececec"/><circle cx="6.1" cy="6.4" r="1.5" fill="#ececec"/></svg>
<div class="t" style="left:8px;top:306.10px;font-size:7px;line-height:7px;color:#8e8e92;font-weight:400;font-family:'Liberation Sans', sans-serif;transform:scaleX(0.8580);transform-origin:0 0;">2025-11-05 00-06-21...</div>
<svg style="left:81px;top:267.6px;border-radius:2px;overflow:hidden" width="62" height="35.5" viewBox="0 0 62 35.5" preserveAspectRatio="none"><rect width="62" height="36" fill="#a88a60"/><rect width="62" height="10" fill="#7a6048"/><rect x="0" y="10" width="9" height="15" fill="#b0b0b0"/><rect x="53" y="10" width="9" height="15" fill="#b0b0b0"/><rect x="15" y="13" width="9" height="9" fill="#8ab8d0"/><path d="M34 20Q42 10 50 20Z" fill="#90c0d8"/><rect y="25" width="62" height="6" fill="#d0aa78"/><rect y="33.5" width="62" height="3" fill="#2a2a2a" opacity="0.35"/><rect x="42" y="33" width="14" height="1.2" fill="#f0f0f0" opacity="0.8"/></svg>
<svg style="left:83px;top:292.1px" width="8" height="9"><path d="M2.7 7.3V1.6L7 0.7V6.3" stroke="#ececec" fill="none" stroke-width="1.1"/><circle cx="1.8" cy="7.3" r="1.6" fill="#ececec"/><circle cx="6.1" cy="6.4" r="1.5" fill="#ececec"/></svg>
<div class="t" style="left:81px;top:306.10px;font-size:7px;line-height:7px;color:#8e8e92;font-weight:400;font-family:'Liberation Sans', sans-serif;transform:scaleX(0.8580);transform-origin:0 0;">2025-11-05 00-07-26...</div>
<svg style="left:155px;top:267.6px;border-radius:2px;overflow:hidden" width="62" height="35.5" viewBox="0 0 62 35.5" preserveAspectRatio="none"><rect width="62" height="36" fill="#8a6a48"/><rect x="3" y="2" width="56" height="28" fill="#f0e6c8"/><rect x="30" y="2" width="0.8" height="28" fill="#c8b890"/><path d="M7 6h10M7 9h6M34 6h8" stroke="#b8b0a0" stroke-width="0.7"/><rect y="33.5" width="62" height="3" fill="#2a2a2a" opacity="0.35"/><rect x="42" y="33" width="14" height="1.2" fill="#f0f0f0" opacity="0.8"/></svg>
<svg style="left:157px;top:292.1px" width="8" height="9"><path d="M2.7 7.3V1.6L7 0.7V6.3" stroke="#ececec" fill="none" stroke-width="1.1"/><circle cx="1.8" cy="7.3" r="1.6" fill="#ececec"/><circle cx="6.1" cy="6.4" r="1.5" fill="#ececec"/></svg>
<div class="t" style="left:155px;top:306.10px;font-size:7px;line-height:7px;color:#8e8e92;font-weight:400;font-family:'Liberation Sans', sans-serif;transform:scaleX(0.8580);transform-origin:0 0;">2025-11-05 00-08-23...</div>
<svg style="left:8px;top:320.4px;border-radius:2px;overflow:hidden" width="62" height="35.5" viewBox="0 0 62 35.5" preserveAspectRatio="none"><rect width="62" height="36" fill="#9a7a58"/><rect x="2" y="2" width="50" height="29" fill="#f0e6c8"/><rect x="27" y="2" width="0.8" height="29" fill="#c8b890"/><path d="M6 6h12M6 9h8M6 12h10M6 15h7M31 6h10M31 9h7M31 12h9M31 15h6M31 18h8M31 21h5" stroke="#b0a890" stroke-width="0.7"/><rect y="33.5" width="62" height="3" fill="#2a2a2a" opacity="0.35"/><rect x="42" y="33" width="14" height="1.2" fill="#f0f0f0" opacity="0.8"/></svg>
<svg style="left:10px;top:344.9px" width="8" height="9"><path d="M2.7 7.3V1.6L7 0.7V6.3" stroke="#ececec" fill="none" stroke-width="1.1"/><circle cx="1.8" cy="7.3" r="1.6" fill="#ececec"/><circle cx="6.1" cy="6.4" r="1.5" fill="#ececec"/></svg>
<div class="t" style="left:8px;top:358.90px;font-size:7px;line-height:7px;color:#8e8e92;font-weight:400;font-family:'Liberation Sans', sans-serif;transform:scaleX(0.8580);transform-origin:0 0;">2025-11-05 00-08-54...</div>
<svg style="left:81px;top:320.4px;border-radius:2px;overflow:hidden" width="62" height="35.5" viewBox="0 0 62 35.5" preserveAspectRatio="none"><rect width="62" height="36" fill="#8a8a58"/><ellipse cx="32.4" cy="26.6" rx="3.4" ry="1.3" fill="#8a6a5a"/><ellipse cx="41.0" cy="3.6" rx="1.6" ry="1.5" fill="#98a850"/><ellipse cx="15.6" cy="16.6" rx="2.1" ry="2.0" fill="#98a850"/><ellipse cx="8.5" cy="18.2" rx="1.8" ry="1.9" fill="#6a9040"/><ellipse cx="9.4" cy="23.3" rx="2.6" ry="2.1" fill="#6a9040"/><ellipse cx="20.5" cy="4.1" rx="2.9" ry="1.1" fill="#98a850"/><ellipse cx="5.1" cy="31.0" rx="2.4" ry="2.2" fill="#6a9040"/><ellipse cx="42.3" cy="13.5" rx="2.5" ry="1.4" fill="#98a850"/><ellipse cx="23.1" cy="1.7" rx="3.0" ry="1.4" fill="#98a850"/><ellipse cx="23.2" cy="25.6" rx="3.2" ry="1.3" fill="#8a6a5a"/><ellipse cx="13.3" cy="8.2" rx="3.4" ry="1.1" fill="#7aa048"/><ellipse cx="48.8" cy="6.4" rx="2.7" ry="1.7" fill="#8a6a5a"/><ellipse cx="55.9" cy="8.3" rx="2.1" ry="1.4" fill="#6a9040"/><ellipse cx="20.6" cy="30.0" rx="2.7" ry="1.3" fill="#7aa048"/><ellipse cx="3.1" cy="32.7" rx="1.5" ry="1.9" fill="#98a850"/><ellipse cx="39.3" cy="24.1" rx="2.1" ry="1.1" fill="#98a850"/><ellipse cx="1.3" cy="18.6" rx="2.9" ry="1.5" fill="#8a6a5a"/><ellipse cx="50.6" cy="6.0" rx="3.5" ry="2.2" fill="#7aa048"/><ellipse cx="56.3" cy="1.7" rx="3.4" ry="1.4" fill="#a07868"/><ellipse cx="50.3" cy="1.6" rx="3.4" ry="1.1" fill="#a07868"/><ellipse cx="52.0" cy="21.7" rx="2.3" ry="1.1" fill="#7aa048"/><ellipse cx="33.7" cy="32.3" rx="1.9" ry="2.1" fill="#8a6a5a"/><ellipse cx="10.1" cy="9.7" rx="2.9" ry="1.6" fill="#98a850"/><ellipse cx="51.1" cy="7.3" rx="2.3" ry="1.8" fill="#7aa048"/><ellipse cx="60.0" cy="24.8" rx="2.0" ry="1.4" fill="#6a9040"/><ellipse cx="60.1" cy="19.7" rx="3.4" ry="1.7" fill="#8a6a5a"/><ellipse cx="26.2" cy="29.5" rx="2.2" ry="1.7" fill="#8a6a5a"/><ellipse cx="14.3" cy="10.3" rx="1.8" ry="2.2" fill="#6a9040"/><ellipse cx="18.8" cy="11.7" rx="2.7" ry="1.6" fill="#8a6a5a"/><ellipse cx="0.7" cy="31.1" rx="3.3" ry="1.7" fill="#6a9040"/><ellipse cx="27.9" cy="14.7" rx="2.5" ry="1.6" fill="#98a850"/><ellipse cx="28.1" cy="9.7" rx="1.9" ry="1.0" fill="#98a850"/><ellipse cx="20.9" cy="10.8" rx="1.6" ry="1.1" fill="#7aa048"/><ellipse cx="1.7" cy="15.6" rx="3.3" ry="1.7" fill="#7aa048"/><ellipse cx="48.2" cy="27.1" rx="3.5" ry="1.5" fill="#6a9040"/><ellipse cx="53.8" cy="1.0" rx="2.3" ry="1.1" fill="#7aa048"/><ellipse cx="45.8" cy="2.0" rx="3.4" ry="1.3" fill="#a07868"/><ellipse cx="21.5" cy="17.9" rx="3.1" ry="2.2" fill="#98a850"/><ellipse cx="56.6" cy="17.3" rx="3.5" ry="1.1" fill="#7aa048"/><ellipse cx="38.8" cy="28.5" rx="2.2" ry="1.1" fill="#6a9040"/><ellipse cx="33.4" cy="8.0" rx="2.5" ry="1.3" fill="#7aa048"/><ellipse cx="15.8" cy="2.4" rx="2.3" ry="1.8" fill="#98a850"/><ellipse cx="22.7" cy="7.0" rx="3.5" ry="1.9" fill="#6a9040"/><ellipse cx="48.6" cy="2.7" rx="2.4" ry="2.1" fill="#8a6a5a"/><ellipse cx="37.5" cy="29.7" rx="2.8" ry="1.2" fill="#8a6a5a"/><ellipse cx="33.2" cy="10.5" rx="3.1" ry="2.1" fill="#98a850"/><ellipse cx="4.1" cy="7.8" rx="3.3" ry="1.2" fill="#6a9040"/><ellipse cx="26.5" cy="10.6" rx="3.0" ry="1.9" fill="#6a9040"/><ellipse cx="17.9" cy="8.0" rx="2.0" ry="1.2" fill="#7aa048"/><ellipse cx="39.4" cy="11.1" rx="1.7" ry="1.1" fill="#8a6a5a"/><ellipse cx="23.4" cy="5.6" rx="3.4" ry="1.1" fill="#a07868"/><ellipse cx="56.2" cy="15.3" rx="1.8" ry="1.2" fill="#a07868"/><ellipse cx="19.1" cy="28.5" rx="3.3" ry="1.6" fill="#6a9040"/><ellipse cx="27.0" cy="31.3" rx="3.0" ry="2.2" fill="#a07868"/><ellipse cx="14.7" cy="7.0" rx="3.2" ry="2.0" fill="#98a850"/><ellipse cx="23.3" cy="31.2" rx="2.1" ry="2.2" fill="#6a9040"/><ellipse cx="54.6" cy="0.4" rx="3.2" ry="1.7" fill="#a07868"/><ellipse cx="41.8" cy="16.2" rx="2.3" ry="1.3" fill="#a07868"/><ellipse cx="27.9" cy="25.5" rx="1.8" ry="1.5" fill="#6a9040"/><ellipse cx="12.9" cy="12.0" rx="3.3" ry="2.1" fill="#6a9040"/><ellipse cx="47.4" cy="27.8" rx="1.6" ry="1.8" fill="#a07868"/><ellipse cx="44.7" cy="25.8" rx="3.4" ry="1.6" fill="#98a850"/><ellipse cx="50.5" cy="2.9" rx="2.0" ry="1.5" fill="#98a850"/><ellipse cx="14.1" cy="13.3" rx="2.5" ry="2.0" fill="#6a9040"/><ellipse cx="20.3" cy="12.7" rx="1.9" ry="1.2" fill="#7aa048"/><ellipse cx="29.3" cy="13.4" rx="3.5" ry="1.6" fill="#6a9040"/><ellipse cx="30.8" cy="8.7" rx="1.8" ry="1.2" fill="#6a9040"/><ellipse cx="2.2" cy="4.1" rx="2.4" ry="1.1" fill="#a07868"/><ellipse cx="52.6" cy="21.3" rx="2.6" ry="1.8" fill="#8a6a5a"/><ellipse cx="16.3" cy="18.6" rx="3.1" ry="1.0" fill="#8a6a5a"/><ellipse cx="17.7" cy="20.2" rx="1.6" ry="1.1" fill="#a07868"/><ellipse cx="38.2" cy="29.7" rx="3.4" ry="1.9" fill="#7aa048"/><ellipse cx="2.7" cy="12.3" rx="2.4" ry="2.0" fill="#98a850"/><ellipse cx="22.7" cy="7.3" rx="2.7" ry="2.0" fill="#a07868"/><ellipse cx="32.2" cy="4.9" rx="2.3" ry="1.7" fill="#7aa048"/><ellipse cx="2.5" cy="12.9" rx="1.7" ry="1.9" fill="#6a9040"/><ellipse cx="40.3" cy="18.1" rx="2.4" ry="1.8" fill="#a07868"/><ellipse cx="1.1" cy="19.6" rx="3.0" ry="1.2" fill="#6a9040"/><ellipse cx="19.2" cy="21.3" rx="2.1" ry="1.4" fill="#7aa048"/><ellipse cx="27.1" cy="12.7" rx="2.8" ry="1.1" fill="#a07868"/><ellipse cx="33.3" cy="10.7" rx="2.4" ry="1.9" fill="#98a850"/><ellipse cx="5.8" cy="21.3" rx="2.1" ry="2.1" fill="#8a6a5a"/><ellipse cx="51.5" cy="5.1" rx="3.4" ry="1.8" fill="#7aa048"/><ellipse cx="52.9" cy="27.8" rx="3.4" ry="1.8" fill="#a07868"/><ellipse cx="46.4" cy="26.2" rx="1.7" ry="1.9" fill="#7aa048"/><ellipse cx="30.3" cy="13.5" rx="3.1" ry="1.8" fill="#8a6a5a"/><ellipse cx="14.8" cy="16.6" rx="2.3" ry="1.2" fill="#6a9040"/><ellipse cx="53.7" cy="27.4" rx="2.8" ry="1.6" fill="#6a9040"/><ellipse cx="38.5" cy="27.5" rx="3.0" ry="1.6" fill="#98a850"/><ellipse cx="27.0" cy="26.8" rx="2.7" ry="1.2" fill="#7aa048"/><ellipse cx="15.5" cy="8.6" rx="3.3" ry="2.0" fill="#a07868"/><ellipse cx="51.4" cy="12.7" rx="1.6" ry="1.7" fill="#7aa048"/><ellipse cx="1.5" cy="17.9" rx="3.0" ry="1.8" fill="#a07868"/><ellipse cx="50.3" cy="22.0" rx="1.8" ry="1.9" fill="#8a6a5a"/><ellipse cx="37.7" cy="10.5" rx="2.0" ry="1.3" fill="#98a850"/><ellipse cx="57.2" cy="3.7" rx="1.5" ry="1.2" fill="#8a6a5a"/><ellipse cx="9.5" cy="14.7" rx="2.7" ry="2.1" fill="#6a9040"/><ellipse cx="23.7" cy="21.7" rx="2.3" ry="1.3" fill="#6a9040"/><ellipse cx="8.7" cy="0.6" rx="3.4" ry="1.6" fill="#6a9040"/><ellipse cx="29.5" cy="31.7" rx="2.9" ry="1.3" fill="#98a850"/><ellipse cx="29.1" cy="5.7" rx="2.0" ry="1.3" fill="#7aa048"/><ellipse cx="16.1" cy="23.9" rx="2.0" ry="1.5" fill="#8a6a5a"/><ellipse cx="24.2" cy="15.0" rx="3.3" ry="1.9" fill="#8a6a5a"/><ellipse cx="13.2" cy="3.4" rx="2.2" ry="1.9" fill="#6a9040"/><ellipse cx="22.0" cy="10.8" rx="1.9" ry="1.2" fill="#8a6a5a"/><ellipse cx="60.7" cy="20.4" rx="2.5" ry="2.0" fill="#98a850"/><ellipse cx="25.5" cy="11.1" rx="2.6" ry="1.7" fill="#7aa048"/><ellipse cx="1.6" cy="2.1" rx="1.8" ry="1.9" fill="#98a850"/><ellipse cx="40.5" cy="5.1" rx="2.1" ry="2.0" fill="#6a9040"/><ellipse cx="56.7" cy="28.3" rx="3.4" ry="1.4" fill="#6a9040"/><ellipse cx="34.9" cy="31.7" rx="2.1" ry="1.9" fill="#98a850"/><ellipse cx="13.4" cy="18.7" rx="2.4" ry="2.1" fill="#a07868"/><ellipse cx="28.8" cy="10.2" rx="1.6" ry="1.9" fill="#8a6a5a"/><ellipse cx="46.4" cy="4.4" rx="3.4" ry="1.0" fill="#a07868"/><ellipse cx="48.7" cy="2.8" rx="2.7" ry="1.6" fill="#7aa048"/><ellipse cx="50.3" cy="12.2" rx="2.5" ry="1.7" fill="#a07868"/><ellipse cx="57.5" cy="26.9" rx="3.2" ry="1.6" fill="#6a9040"/><ellipse cx="37.7" cy="26.5" rx="2.3" ry="1.9" fill="#8a6a5a"/><ellipse cx="56.0" cy="6.4" rx="2.5" ry="1.1" fill="#8a6a5a"/><ellipse cx="15.4" cy="9.0" rx="2.1" ry="1.2" fill="#98a850"/><circle cx="24" cy="30" r="2" fill="#c83040"/><circle cx="32" cy="24" r="1.8" fill="#c83040"/><circle cx="40" cy="14" r="1.5" fill="#c83040"/><circle cx="14" cy="28" r="1.5" fill="#c83040"/><rect y="33.5" width="62" height="3" fill="#2a2a2a" opacity="0.35"/><rect x="42" y="33" width="14" height="1.2" fill="#f0f0f0" opacity="0.8"/></svg>
<svg style="left:83px;top:344.9px" width="8" height="9"><path d="M2.7 7.3V1.6L7 0.7V6.3" stroke="#ececec" fill="none" stroke-width="1.1"/><circle cx="1.8" cy="7.3" r="1.6" fill="#ececec"/><circle cx="6.1" cy="6.4" r="1.5" fill="#ececec"/></svg>
<div class="t" style="left:81px;top:358.90px;font-size:7px;line-height:7px;color:#8e8e92;font-weight:400;font-family:'Liberation Sans', sans-serif;transform:scaleX(0.8580);transform-origin:0 0;">2025-11-05 00-12-06...</div>
<svg style="left:155px;top:320.4px;border-radius:2px;overflow:hidden" width="62" height="35.5" viewBox="0 0 62 35.5" preserveAspectRatio="none"><rect width="62" height="36" fill="#8a9a50"/><rect width="62" height="12" fill="#7ab8d8"/><path d="M0 12Q15 8 30 12T62 10V18H0Z" fill="#90a858"/><rect x="38" y="0" width="9" height="31" fill="#a89878"/><path d="M40 0v31M44 0v31" stroke="#8a7a60" stroke-width="0.8"/><path d="M0 22Q10 18 20 24T36 22V31H0Z" fill="#9a7a58"/><circle cx="54" cy="24" r="6" fill="#9a7a58"/><circle cx="14" cy="16" r="4" fill="#80a048"/><rect y="33.5" width="62" height="3" fill="#2a2a2a" opacity="0.35"/><rect x="42" y="33" width="14" height="1.2" fill="#f0f0f0" opacity="0.8"/></svg>
<svg style="left:157px;top:344.9px" width="8" height="9"><path d="M2.7 7.3V1.6L7 0.7V6.3" stroke="#ececec" fill="none" stroke-width="1.1"/><circle cx="1.8" cy="7.3" r="1.6" fill="#ececec"/><circle cx="6.1" cy="6.4" r="1.5" fill="#ececec"/></svg>
<div class="t" style="left:155px;top:358.90px;font-size:7px;line-height:7px;color:#8e8e92;font-weight:400;font-family:'Liberation Sans', sans-serif;transform:scaleX(0.8580);transform-origin:0 0;">2025-11-05 00-12-24...</div>
<svg style="left:8px;top:373.2px;border-radius:2px;overflow:hidden" width="62" height="35.5" viewBox="0 0 62 35.5" preserveAspectRatio="none"><rect width="62" height="36" fill="#9a7454"/><rect width="62" height="13" fill="#78b8e0"/><ellipse cx="42.0" cy="28.5" rx="2.5" ry="1.6" fill="#90b050"/><ellipse cx="21.5" cy="23.1" rx="2.7" ry="1.7" fill="#88a848"/><ellipse cx="16.1" cy="18.9" rx="2.0" ry="1.1" fill="#90b050"/><ellipse cx="55.6" cy="12.5" rx="2.7" ry="2.1" fill="#88a848"/><ellipse cx="7.1" cy="21.6" rx="3.2" ry="1.1" fill="#88a848"/><ellipse cx="25.7" cy="14.1" rx="3.0" ry="1.9" fill="#90b050"/><ellipse cx="27.3" cy="32.8" rx="2.6" ry="1.6" fill="#88a848"/><ellipse cx="49.1" cy="32.0" rx="2.0" ry="1.7" fill="#7a9a40"/><ellipse cx="6.7" cy="16.4" rx="1.9" ry="1.2" fill="#90b050"/><ellipse cx="6.5" cy="26.8" rx="1.5" ry="1.5" fill="#90b050"/><ellipse cx="36.8" cy="22.9" rx="3.1" ry="1.6" fill="#90b050"/><ellipse cx="55.6" cy="30.2" rx="3.3" ry="1.3" fill="#88a848"/><ellipse cx="28.9" cy="21.5" rx="2.9" ry="1.8" fill="#88a848"/><ellipse cx="29.5" cy="21.4" rx="2.1" ry="1.2" fill="#90b050"/><ellipse cx="18.7" cy="26.2" rx="1.6" ry="1.3" fill="#7a9a40"/><ellipse cx="59.8" cy="20.8" rx="2.4" ry="1.6" fill="#90b050"/><ellipse cx="40.7" cy="12.3" rx="2.4" ry="1.3" fill="#88a848"/><ellipse cx="7.8" cy="21.0" rx="3.3" ry="2.0" fill="#88a848"/><ellipse cx="38.5" cy="30.5" rx="2.9" ry="1.1" fill="#7a9a40"/><ellipse cx="58.7" cy="15.2" rx="3.3" ry="1.7" fill="#90b050"/><ellipse cx="58.9" cy="31.5" rx="2.6" ry="1.7" fill="#90b050"/><ellipse cx="13.1" cy="22.7" rx="1.6" ry="1.9" fill="#7a9a40"/><ellipse cx="53.0" cy="13.3" rx="2.1" ry="1.6" fill="#7a9a40"/><ellipse cx="8.4" cy="18.8" rx="2.5" ry="1.3" fill="#7a9a40"/><ellipse cx="45.0" cy="32.1" rx="2.8" ry="1.8" fill="#90b050"/><ellipse cx="40.1" cy="24.0" rx="3.2" ry="2.1" fill="#88a848"/><ellipse cx="9.6" cy="21.6" rx="3.4" ry="1.6" fill="#88a848"/><ellipse cx="16.2" cy="21.8" rx="2.3" ry="1.4" fill="#90b050"/><ellipse cx="11.6" cy="30.1" rx="2.2" ry="1.9" fill="#7a9a40"/><ellipse cx="41.4" cy="23.1" rx="2.3" ry="1.0" fill="#90b050"/><ellipse cx="5.8" cy="21.2" rx="2.4" ry="1.9" fill="#88a848"/><ellipse cx="18.3" cy="17.8" rx="3.5" ry="1.5" fill="#88a848"/><ellipse cx="10.3" cy="25.9" rx="2.6" ry="1.9" fill="#7a9a40"/><ellipse cx="5.6" cy="12.8" rx="2.4" ry="1.9" fill="#88a848"/><ellipse cx="38.0" cy="17.2" rx="3.0" ry="2.0" fill="#90b050"/><ellipse cx="11.9" cy="17.2" rx="1.7" ry="2.0" fill="#88a848"/><ellipse cx="4.5" cy="21.4" rx="2.6" ry="1.7" fill="#90b050"/><ellipse cx="45.8" cy="14.2" rx="2.0" ry="1.2" fill="#90b050"/><ellipse cx="57.4" cy="16.6" rx="2.4" ry="1.4" fill="#7a9a40"/><ellipse cx="52.7" cy="21.2" rx="3.4" ry="1.7" fill="#90b050"/><ellipse cx="7.8" cy="22.9" rx="2.5" ry="2.1" fill="#90b050"/><ellipse cx="3.1" cy="20.9" rx="2.7" ry="1.8" fill="#7a9a40"/><ellipse cx="15.1" cy="28.5" rx="2.3" ry="1.2" fill="#7a9a40"/><ellipse cx="14.3" cy="21.6" rx="2.9" ry="1.6" fill="#90b050"/><ellipse cx="46.9" cy="21.2" rx="1.6" ry="1.8" fill="#88a848"/><ellipse cx="45.8" cy="29.7" rx="3.4" ry="1.3" fill="#90b050"/><ellipse cx="10.2" cy="22.9" rx="2.0" ry="1.6" fill="#88a848"/><ellipse cx="8.7" cy="15.6" rx="3.1" ry="1.3" fill="#90b050"/><ellipse cx="57.8" cy="32.7" rx="2.0" ry="1.2" fill="#88a848"/><ellipse cx="33.8" cy="18.4" rx="1.7" ry="1.1" fill="#88a848"/><ellipse cx="33.1" cy="13.3" rx="1.6" ry="2.0" fill="#7a9a40"/><ellipse cx="30.5" cy="19.8" rx="2.2" ry="2.1" fill="#88a848"/><ellipse cx="59.9" cy="13.2" rx="2.2" ry="1.2" fill="#7a9a40"/><ellipse cx="20.8" cy="19.4" rx="2.9" ry="1.6" fill="#7a9a40"/><ellipse cx="61.0" cy="28.5" rx="1.9" ry="1.7" fill="#90b050"/><ellipse cx="46.8" cy="20.1" rx="1.5" ry="1.6" fill="#88a848"/><ellipse cx="1.6" cy="27.1" rx="2.5" ry="1.8" fill="#88a848"/><ellipse cx="11.5" cy="25.3" rx="1.8" ry="1.6" fill="#88a848"/><ellipse cx="15.6" cy="15.4" rx="2.5" ry="2.1" fill="#90b050"/><ellipse cx="12.8" cy="13.5" rx="2.7" ry="1.5" fill="#7a9a40"/><ellipse cx="11.7" cy="23.0" rx="2.8" ry="1.7" fill="#88a848"/><ellipse cx="56.3" cy="29.4" rx="1.6" ry="1.3" fill="#90b050"/><ellipse cx="52.2" cy="20.9" rx="1.9" ry="2.2" fill="#7a9a40"/><ellipse cx="4.1" cy="25.2" rx="2.5" ry="1.0" fill="#7a9a40"/><ellipse cx="38.4" cy="26.2" rx="2.7" ry="1.6" fill="#7a9a40"/><ellipse cx="34.9" cy="31.0" rx="2.4" ry="2.0" fill="#7a9a40"/><ellipse cx="19.6" cy="22.1" rx="3.2" ry="1.7" fill="#7a9a40"/><ellipse cx="57.7" cy="15.1" rx="2.9" ry="1.5" fill="#88a848"/><ellipse cx="14.7" cy="28.4" rx="3.0" ry="2.0" fill="#7a9a40"/><ellipse cx="9.1" cy="20.3" rx="2.8" ry="1.6" fill="#90b050"/><ellipse cx="2.6" cy="32.5" rx="3.2" ry="2.1" fill="#90b050"/><ellipse cx="9.9" cy="22.2" rx="2.4" ry="2.1" fill="#88a848"/><ellipse cx="49.4" cy="29.5" rx="2.1" ry="1.6" fill="#90b050"/><ellipse cx="60.8" cy="31.5" rx="3.4" ry="1.8" fill="#88a848"/><ellipse cx="34.2" cy="16.2" rx="1.8" ry="1.2" fill="#88a848"/><ellipse cx="41.5" cy="12.7" rx="2.1" ry="1.1" fill="#7a9a40"/><ellipse cx="45.0" cy="31.8" rx="2.8" ry="1.6" fill="#90b050"/><ellipse cx="28.1" cy="28.5" rx="1.6" ry="1.9" fill="#7a9a40"/><ellipse cx="21.9" cy="19.6" rx="1.9" ry="1.2" fill="#90b050"/><ellipse cx="59.4" cy="17.7" rx="2.3" ry="1.4" fill="#90b050"/><ellipse cx="21.9" cy="24.2" rx="1.6" ry="1.6" fill="#90b050"/><ellipse cx="39.4" cy="31.7" rx="2.8" ry="1.5" fill="#88a848"/><ellipse cx="20.0" cy="12.7" rx="1.8" ry="1.7" fill="#88a848"/><ellipse cx="22.7" cy="23.5" rx="3.1" ry="2.1" fill="#90b050"/><ellipse cx="58.9" cy="29.3" rx="3.4" ry="1.2" fill="#7a9a40"/><ellipse cx="50.1" cy="17.1" rx="2.5" ry="1.8" fill="#88a848"/><ellipse cx="58.6" cy="27.7" rx="2.4" ry="1.3" fill="#90b050"/><ellipse cx="54.9" cy="27.9" rx="3.0" ry="1.4" fill="#90b050"/><ellipse cx="26.9" cy="18.7" rx="3.2" ry="2.2" fill="#88a848"/><ellipse cx="54.8" cy="15.7" rx="2.6" ry="2.2" fill="#7a9a40"/><path d="M30 0v14M46 0v12" stroke="#9a8a70" stroke-width="1.2"/><rect y="33.5" width="62" height="3" fill="#2a2a2a" opacity="0.35"/><rect x="42" y="33" width="14" height="1.2" fill="#f0f0f0" opacity="0.8"/></svg>
<svg style="left:10px;top:397.7px" width="8" height="9"><path d="M2.7 7.3V1.6L7 0.7V6.3" stroke="#ececec" fill="none" stroke-width="1.1"/><circle cx="1.8" cy="7.3" r="1.6" fill="#ececec"/><circle cx="6.1" cy="6.4" r="1.5" fill="#ececec"/></svg>
<div class="t" style="left:8px;top:411.70px;font-size:7px;line-height:7px;color:#8e8e92;font-weight:400;font-family:'Liberation Sans', sans-serif;transform:scaleX(0.8580);transform-origin:0 0;">2025-11-05 00-13-45...</div>
<svg style="left:81px;top:373.2px;border-radius:2px;overflow:hidden" width="62" height="35.5" viewBox="0 0 62 35.5" preserveAspectRatio="none"><rect width="62" height="36" fill="#a07456"/><ellipse cx="56.1" cy="22.6" rx="3.3" ry="1.3" fill="#88a848"/><ellipse cx="54.1" cy="18.9" rx="2.3" ry="2.2" fill="#88a848"/><ellipse cx="7.8" cy="15.7" rx="2.3" ry="1.2" fill="#98b050"/><ellipse cx="20.4" cy="3.1" rx="3.2" ry="1.5" fill="#88a848"/><ellipse cx="35.5" cy="1.2" rx="1.9" ry="1.8" fill="#98b050"/><ellipse cx="56.2" cy="8.8" rx="3.2" ry="1.7" fill="#88a848"/><ellipse cx="0.8" cy="21.3" rx="1.8" ry="1.8" fill="#98b050"/><ellipse cx="56.2" cy="30.4" rx="3.2" ry="1.2" fill="#98b050"/><ellipse cx="57.6" cy="28.5" rx="3.5" ry="1.7" fill="#98b050"/><ellipse cx="13.9" cy="29.9" rx="1.9" ry="1.2" fill="#88a848"/><ellipse cx="52.0" cy="3.8" rx="1.5" ry="1.8" fill="#98b050"/><ellipse cx="0.8" cy="18.9" rx="2.2" ry="1.8" fill="#98b050"/><ellipse cx="57.4" cy="24.6" rx="3.3" ry="2.0" fill="#98b050"/><ellipse cx="12.2" cy="7.5" rx="2.6" ry="2.1" fill="#88a848"/><ellipse cx="27.8" cy="0.1" rx="2.8" ry="1.5" fill="#88a848"/><ellipse cx="56.3" cy="9.8" rx="2.1" ry="1.8" fill="#88a848"/><ellipse cx="0.3" cy="2.0" rx="3.0" ry="1.3" fill="#98b050"/><ellipse cx="50.2" cy="2.2" rx="3.4" ry="1.0" fill="#88a848"/><ellipse cx="44.3" cy="5.9" rx="3.2" ry="1.1" fill="#88a848"/><ellipse cx="42.7" cy="2.6" rx="3.1" ry="1.5" fill="#88a848"/><ellipse cx="54.6" cy="12.4" rx="2.3" ry="1.3" fill="#98b050"/><ellipse cx="5.7" cy="28.8" rx="3.0" ry="1.4" fill="#98b050"/><ellipse cx="60.6" cy="24.7" rx="3.0" ry="1.6" fill="#88a848"/><ellipse cx="22.5" cy="17.5" rx="2.4" ry="1.5" fill="#98b050"/><ellipse cx="60.7" cy="22.8" rx="3.3" ry="1.6" fill="#98b050"/><ellipse cx="45.6" cy="7.8" rx="3.2" ry="1.4" fill="#88a848"/><ellipse cx="8.0" cy="29.0" rx="3.3" ry="2.1" fill="#88a848"/><ellipse cx="19.7" cy="4.8" rx="1.8" ry="2.2" fill="#98b050"/><ellipse cx="2.4" cy="1.5" rx="2.9" ry="1.6" fill="#88a848"/><ellipse cx="40.5" cy="4.4" rx="2.5" ry="1.5" fill="#88a848"/><ellipse cx="30.0" cy="5.1" rx="2.1" ry="1.2" fill="#98b050"/><ellipse cx="61.6" cy="28.2" rx="2.5" ry="1.9" fill="#88a848"/><ellipse cx="0.7" cy="26.5" rx="2.5" ry="2.0" fill="#88a848"/><ellipse cx="31.6" cy="5.9" rx="2.5" ry="1.1" fill="#98b050"/><ellipse cx="54.3" cy="18.6" rx="1.9" ry="2.0" fill="#98b050"/><ellipse cx="27.6" cy="30.9" rx="2.9" ry="2.0" fill="#88a848"/><ellipse cx="14.4" cy="3.1" rx="2.7" ry="1.5" fill="#88a848"/><ellipse cx="33.6" cy="5.5" rx="1.7" ry="1.0" fill="#88a848"/><ellipse cx="55.7" cy="25.3" rx="2.1" ry="1.6" fill="#88a848"/><ellipse cx="41.9" cy="12.0" rx="3.0" ry="2.0" fill="#88a848"/><ellipse cx="14.2" cy="2.4" rx="3.2" ry="1.0" fill="#88a848"/><ellipse cx="2.1" cy="11.6" rx="1.9" ry="1.4" fill="#88a848"/><ellipse cx="3.2" cy="7.4" rx="2.5" ry="1.7" fill="#98b050"/><ellipse cx="3.3" cy="28.2" rx="2.6" ry="1.2" fill="#88a848"/><ellipse cx="7.4" cy="0.9" rx="2.5" ry="2.1" fill="#98b050"/><ellipse cx="22.6" cy="24.7" rx="2.9" ry="1.5" fill="#98b050"/><ellipse cx="5.2" cy="16.8" rx="2.1" ry="1.7" fill="#98b050"/><ellipse cx="5.3" cy="27.0" rx="2.4" ry="1.8" fill="#88a848"/><ellipse cx="55.0" cy="25.1" rx="1.5" ry="1.9" fill="#88a848"/><ellipse cx="41.9" cy="0.2" rx="1.7" ry="1.5" fill="#98b050"/><ellipse cx="56.5" cy="32.8" rx="1.6" ry="1.7" fill="#98b050"/><ellipse cx="15.4" cy="12.3" rx="2.5" ry="1.1" fill="#88a848"/><ellipse cx="55.6" cy="15.1" rx="2.4" ry="1.0" fill="#98b050"/><ellipse cx="32.9" cy="1.9" rx="2.0" ry="1.2" fill="#88a848"/><ellipse cx="48.1" cy="0.4" rx="1.9" ry="1.6" fill="#98b050"/><rect x="30" y="12" width="2" height="3" fill="#c83030"/><rect y="33.5" width="62" height="3" fill="#2a2a2a" opacity="0.35"/><rect x="42" y="33" width="14" height="1.2" fill="#f0f0f0" opacity="0.8"/></svg>
<svg style="left:83px;top:397.7px" width="8" height="9"><path d="M2.7 7.3V1.6L7 0.7V6.3" stroke="#ececec" fill="none" stroke-width="1.1"/><circle cx="1.8" cy="7.3" r="1.6" fill="#ececec"/><circle cx="6.1" cy="6.4" r="1.5" fill="#ececec"/></svg>
<div class="t" style="left:81px;top:411.70px;font-size:7px;line-height:7px;color:#8e8e92;font-weight:400;font-family:'Liberation Sans', sans-serif;transform:scaleX(0.8580);transform-origin:0 0;">2025-11-05 00-14-46...</div>
<svg style="left:155px;top:373.2px;border-radius:2px;overflow:hidden" width="62" height="35.5" viewBox="0 0 62 35.5" preserveAspectRatio="none"><rect width="62" height="36" fill="#9a7a54"/><rect width="62" height="14" fill="#78b8e0"/><path d="M32 2h12v14H32Z" fill="#9a9a9a"/><ellipse cx="10.2" cy="26.5" rx="2.8" ry="1.6" fill="#88a048"/><ellipse cx="61.4" cy="22.0" rx="3.4" ry="1.2" fill="#7a9040"/><ellipse cx="14.6" cy="12.1" rx="2.2" ry="1.7" fill="#88a048"/><ellipse cx="9.0" cy="27.8" rx="3.3" ry="1.8" fill="#90a850"/><ellipse cx="61.8" cy="27.5" rx="3.3" ry="1.7" fill="#88a048"/><ellipse cx="59.3" cy="23.3" rx="2.9" ry="1.8" fill="#90a850"/><ellipse cx="1.4" cy="27.6" rx="1.7" ry="2.0" fill="#88a048"/><ellipse cx="28.1" cy="23.6" rx="2.2" ry="1.6" fill="#88a048"/><ellipse cx="41.2" cy="21.9" rx="3.1" ry="1.1" fill="#88a048"/><ellipse cx="12.9" cy="32.3" rx="3.3" ry="1.9" fill="#7a9040"/><ellipse cx="61.3" cy="13.5" rx="2.6" ry="1.7" fill="#90a850"/><ellipse cx="12.5" cy="31.4" rx="3.3" ry="1.5" fill="#90a850"/><ellipse cx="59.2" cy="22.5" rx="2.1" ry="1.6" fill="#90a850"/><ellipse cx="1.7" cy="14.0" rx="2.9" ry="2.2" fill="#90a850"/><ellipse cx="0.2" cy="13.5" rx="2.7" ry="1.6" fill="#7a9040"/><ellipse cx="37.8" cy="23.7" rx="2.7" ry="1.2" fill="#88a048"/><ellipse cx="38.8" cy="29.5" rx="2.2" ry="1.9" fill="#90a850"/><ellipse cx="15.2" cy="15.5" rx="3.3" ry="1.2" fill="#90a850"/><ellipse cx="23.2" cy="26.4" rx="2.9" ry="2.1" fill="#88a048"/><ellipse cx="25.2" cy="32.8" rx="3.4" ry="1.7" fill="#90a850"/><ellipse cx="30.4" cy="19.9" rx="2.0" ry="2.1" fill="#88a048"/><ellipse cx="34.8" cy="21.2" rx="2.3" ry="1.9" fill="#88a048"/><ellipse cx="51.9" cy="13.1" rx="2.0" ry="1.3" fill="#90a850"/><ellipse cx="15.4" cy="20.3" rx="3.2" ry="1.8" fill="#88a048"/><ellipse cx="61.0" cy="27.7" rx="2.5" ry="1.3" fill="#7a9040"/><ellipse cx="32.6" cy="27.3" rx="1.6" ry="1.3" fill="#90a850"/><ellipse cx="49.3" cy="30.5" rx="2.7" ry="1.5" fill="#7a9040"/><ellipse cx="56.0" cy="22.0" rx="1.8" ry="1.7" fill="#88a048"/><ellipse cx="47.6" cy="12.2" rx="2.9" ry="2.1" fill="#88a048"/><ellipse cx="16.4" cy="18.8" rx="2.0" ry="2.1" fill="#90a850"/><ellipse cx="15.9" cy="20.5" rx="3.4" ry="2.1" fill="#88a048"/><ellipse cx="8.8" cy="20.3" rx="1.9" ry="1.8" fill="#88a048"/><ellipse cx="4.5" cy="14.5" rx="2.1" ry="1.4" fill="#90a850"/><ellipse cx="24.6" cy="30.6" rx="2.7" ry="1.2" fill="#90a850"/><ellipse cx="12.5" cy="27.6" rx="3.0" ry="1.7" fill="#7a9040"/><ellipse cx="54.2" cy="28.3" rx="3.1" ry="1.0" fill="#90a850"/><ellipse cx="53.6" cy="20.4" rx="2.6" ry="2.0" fill="#88a048"/><ellipse cx="15.7" cy="26.6" rx="2.1" ry="1.1" fill="#90a850"/><ellipse cx="9.7" cy="27.2" rx="3.5" ry="2.0" fill="#7a9040"/><ellipse cx="30.4" cy="24.0" rx="2.6" ry="1.1" fill="#7a9040"/><ellipse cx="45.5" cy="32.3" rx="2.1" ry="1.8" fill="#7a9040"/><ellipse cx="47.0" cy="16.0" rx="2.7" ry="1.4" fill="#88a048"/><ellipse cx="22.0" cy="18.7" rx="3.5" ry="1.1" fill="#88a048"/><ellipse cx="40.4" cy="25.2" rx="3.1" ry="2.2" fill="#7a9040"/><ellipse cx="38.5" cy="12.4" rx="2.8" ry="1.5" fill="#7a9040"/><ellipse cx="31.8" cy="30.4" rx="1.6" ry="1.0" fill="#7a9040"/><ellipse cx="26.9" cy="17.2" rx="2.9" ry="2.0" fill="#7a9040"/><ellipse cx="26.5" cy="28.7" rx="2.3" ry="1.4" fill="#88a048"/><ellipse cx="39.2" cy="32.2" rx="1.7" ry="1.6" fill="#90a850"/><ellipse cx="23.1" cy="24.7" rx="1.9" ry="1.5" fill="#7a9040"/><ellipse cx="47.0" cy="26.0" rx="3.2" ry="1.8" fill="#7a9040"/><ellipse cx="16.3" cy="22.1" rx="2.5" ry="1.4" fill="#90a850"/><ellipse cx="51.1" cy="32.2" rx="3.5" ry="1.0" fill="#90a850"/><ellipse cx="12.5" cy="30.4" rx="2.9" ry="1.1" fill="#88a048"/><ellipse cx="4.9" cy="18.4" rx="3.4" ry="1.9" fill="#90a850"/><ellipse cx="60.9" cy="32.8" rx="1.8" ry="1.5" fill="#7a9040"/><ellipse cx="20.8" cy="25.5" rx="2.9" ry="1.3" fill="#88a048"/><ellipse cx="20.0" cy="17.3" rx="3.2" ry="1.2" fill="#7a9040"/><ellipse cx="31.4" cy="17.0" rx="2.9" ry="1.9" fill="#88a048"/><ellipse cx="58.3" cy="21.8" rx="2.4" ry="1.7" fill="#90a850"/><ellipse cx="41.5" cy="26.0" rx="2.7" ry="1.1" fill="#88a048"/><ellipse cx="2.1" cy="29.0" rx="3.4" ry="1.8" fill="#88a048"/><ellipse cx="4.6" cy="24.2" rx="2.3" ry="1.5" fill="#90a850"/><ellipse cx="14.9" cy="12.2" rx="2.6" ry="1.1" fill="#90a850"/><ellipse cx="11.8" cy="19.8" rx="1.5" ry="1.2" fill="#7a9040"/><ellipse cx="49.1" cy="29.3" rx="2.6" ry="1.1" fill="#88a048"/><ellipse cx="25.9" cy="30.5" rx="2.0" ry="1.7" fill="#7a9040"/><ellipse cx="57.4" cy="30.6" rx="1.5" ry="1.7" fill="#88a048"/><ellipse cx="27.0" cy="29.5" rx="3.5" ry="1.8" fill="#88a048"/><ellipse cx="3.7" cy="29.1" rx="2.7" ry="1.7" fill="#90a850"/><ellipse cx="42.1" cy="26.2" rx="1.8" ry="1.2" fill="#90a850"/><ellipse cx="18.5" cy="25.2" rx="3.3" ry="1.1" fill="#88a048"/><ellipse cx="11.6" cy="14.1" rx="3.2" ry="1.4" fill="#90a850"/><ellipse cx="3.6" cy="12.8" rx="2.5" ry="1.8" fill="#7a9040"/><ellipse cx="24.8" cy="12.7" rx="2.0" ry="1.4" fill="#90a850"/><ellipse cx="25.3" cy="26.5" rx="3.0" ry="1.6" fill="#88a048"/><ellipse cx="20.1" cy="16.6" rx="2.5" ry="1.9" fill="#7a9040"/><ellipse cx="33.0" cy="25.2" rx="1.8" ry="1.9" fill="#90a850"/><ellipse cx="29.7" cy="30.1" rx="2.4" ry="1.0" fill="#90a850"/><ellipse cx="42.1" cy="16.6" rx="3.1" ry="2.1" fill="#7a9040"/><ellipse cx="37.4" cy="14.3" rx="2.1" ry="1.3" fill="#90a850"/><ellipse cx="58.1" cy="28.7" rx="1.5" ry="1.4" fill="#7a9040"/><ellipse cx="16.4" cy="12.5" rx="2.3" ry="1.9" fill="#88a048"/><ellipse cx="57.7" cy="23.3" rx="3.3" ry="1.2" fill="#7a9040"/><ellipse cx="34.4" cy="28.3" rx="3.0" ry="2.1" fill="#90a850"/><ellipse cx="56.4" cy="17.0" rx="2.7" ry="1.4" fill="#7a9040"/><ellipse cx="50.5" cy="19.6" rx="1.8" ry="1.0" fill="#90a850"/><ellipse cx="59.2" cy="27.9" rx="3.5" ry="1.9" fill="#7a9040"/><ellipse cx="6.6" cy="31.5" rx="2.5" ry="2.1" fill="#7a9040"/><ellipse cx="18.4" cy="15.4" rx="2.8" ry="1.7" fill="#90a850"/><path d="M4 0L8 16M52 0L56 14M20 0L22 14" stroke="#a08a68" stroke-width="1.2"/><path d="M40 24L60 30" stroke="#6a5a40" stroke-width="2"/><rect y="33.5" width="62" height="3" fill="#2a2a2a" opacity="0.35"/><rect x="42" y="33" width="14" height="1.2" fill="#f0f0f0" opacity="0.8"/></svg>
<svg style="left:157px;top:397.7px" width="8" height="9"><path d="M2.7 7.3V1.6L7 0.7V6.3" stroke="#ececec" fill="none" stroke-width="1.1"/><circle cx="1.8" cy="7.3" r="1.6" fill="#ececec"/><circle cx="6.1" cy="6.4" r="1.5" fill="#ececec"/></svg>
<div class="t" style="left:155px;top:411.70px;font-size:7px;line-height:7px;color:#8e8e92;font-weight:400;font-family:'Liberation Sans', sans-serif;transform:scaleX(0.8580);transform-origin:0 0;">2025-11-05 00-15-48...</div>
<svg style="left:8px;top:426.0px;border-radius:2px;overflow:hidden" width="62" height="35.5" viewBox="0 0 62 35.5" preserveAspectRatio="none"><rect width="62" height="36" fill="#78b8e0"/><path d="M0 6L16 22M2 26L18 10M48 8L62 24M54 30L62 20" stroke="#a08a68" stroke-width="1.6"/><path d="M14 31L28 3H42L44 31Z" fill="#262626"/><path d="M12 31L26 6L29 6L18 31Z" fill="#a8a8a8"/><rect x="44" y="22" width="18" height="9" fill="#a08060"/><rect x="0" y="27" width="62" height="10" fill="#8a7a50"/><rect y="33.5" width="62" height="3" fill="#2a2a2a" opacity="0.35"/><rect x="42" y="33" width="14" height="1.2" fill="#f0f0f0" opacity="0.8"/></svg>
<svg style="left:10px;top:450.5px" width="8" height="9"><path d="M2.7 7.3V1.6L7 0.7V6.3" stroke="#ececec" fill="none" stroke-width="1.1"/><circle cx="1.8" cy="7.3" r="1.6" fill="#ececec"/><circle cx="6.1" cy="6.4" r="1.5" fill="#ececec"/></svg>
<div class="t" style="left:8px;top:464.50px;font-size:7px;line-height:7px;color:#8e8e92;font-weight:400;font-family:'Liberation Sans', sans-serif;transform:scaleX(0.8580);transform-origin:0 0;">2025-11-05 00-16-39...</div>
<svg style="left:81px;top:426.0px;border-radius:2px;overflow:hidden" width="62" height="35.5" viewBox="0 0 62 35.5" preserveAspectRatio="none"><rect width="62" height="36" fill="#a87c64"/><path d="M12 3H50V19H12Z" fill="#2a2222"/><path d="M19 8H43V15H19Z" fill="#8ac0d8"/><path d="M0 22H62V31H0Z" fill="#d0aa90"/><path d="M0 22L12 19H50L62 22Z" fill="#b89078"/><rect y="33.5" width="62" height="3" fill="#2a2a2a" opacity="0.35"/><rect x="42" y="33" width="14" height="1.2" fill="#f0f0f0" opacity="0.8"/></svg>
<svg style="left:83px;top:450.5px" width="8" height="9"><path d="M2.7 7.3V1.6L7 0.7V6.3" stroke="#ececec" fill="none" stroke-width="1.1"/><circle cx="1.8" cy="7.3" r="1.6" fill="#ececec"/><circle cx="6.1" cy="6.4" r="1.5" fill="#ececec"/></svg>
<div class="t" style="left:81px;top:464.50px;font-size:7px;line-height:7px;color:#8e8e92;font-weight:400;font-family:'Liberation Sans', sans-serif;transform:scaleX(0.8580);transform-origin:0 0;">2025-11-05 00-19-05...</div>
<svg style="left:155px;top:426.0px;border-radius:2px;overflow:hidden" width="62" height="35.5" viewBox="0 0 62 35.5" preserveAspectRatio="none"><rect width="62" height="36" fill="#1a1414"/><path d="M0 0H20L22 31H0Z" fill="#2a4a96"/><path d="M28 0L40 14M40 14L62 6M40 14L36 31M48 20L62 28M30 22L20 31" stroke="#7a5a48" stroke-width="2"/><rect y="33.5" width="62" height="3" fill="#2a2a2a" opacity="0.35"/><rect x="42" y="33" width="14" height="1.2" fill="#f0f0f0" opacity="0.8"/></svg>
<svg style="left:157px;top:450.5px" width="8" height="9"><path d="M2.7 7.3V1.6L7 0.7V6.3" stroke="#ececec" fill="none" stroke-width="1.1"/><circle cx="1.8" cy="7.3" r="1.6" fill="#ececec"/><circle cx="6.1" cy="6.4" r="1.5" fill="#ececec"/></svg>
<div class="t" style="left:155px;top:464.50px;font-size:7px;line-height:7px;color:#8e8e92;font-weight:400;font-family:'Liberation Sans', sans-serif;transform:scaleX(0.8580);transform-origin:0 0;">2025-11-05 00-19-31...</div>
<svg style="left:8px;top:478.8px;border-radius:2px;overflow:hidden" width="62" height="35.5" viewBox="0 0 62 35.5" preserveAspectRatio="none"><rect width="62" height="36" fill="#a4a4a4"/><rect x="0" y="24" width="62" height="7" fill="#e6e6e6"/><path d="M15 0v24M35 0v24M0 12h62" stroke="#9a9a9a" stroke-width="0.8"/><rect y="33.5" width="62" height="3" fill="#2a2a2a" opacity="0.35"/><rect x="42" y="33" width="14" height="1.2" fill="#f0f0f0" opacity="0.8"/></svg>
<svg style="left:10px;top:503.3px" width="8" height="9"><path d="M2.7 7.3V1.6L7 0.7V6.3" stroke="#ececec" fill="none" stroke-width="1.1"/><circle cx="1.8" cy="7.3" r="1.6" fill="#ececec"/><circle cx="6.1" cy="6.4" r="1.5" fill="#ececec"/></svg>
<div class="t" style="left:8px;top:517.30px;font-size:7px;line-height:7px;color:#8e8e92;font-weight:400;font-family:'Liberation Sans', sans-serif;transform:scaleX(0.8580);transform-origin:0 0;">2025-11-05 00-20-18...</div>
<svg style="left:81px;top:478.8px;border-radius:2px;overflow:hidden" width="62" height="35.5" viewBox="0 0 62 35.5" preserveAspectRatio="none"><rect width="62" height="36" fill="#9a7a50"/><rect width="62" height="14" fill="#78b8e0"/><path d="M30 4h14v18H30Z" fill="#a09a94"/><rect x="14" y="0" width="3" height="31" fill="#a8906a"/><ellipse cx="46.3" cy="17.9" rx="1.9" ry="1.7" fill="#88a048"/><ellipse cx="7.9" cy="32.1" rx="2.5" ry="1.9" fill="#9a7a50"/><ellipse cx="31.2" cy="26.1" rx="3.4" ry="2.2" fill="#90a850"/><ellipse cx="44.5" cy="17.8" rx="2.9" ry="2.0" fill="#9a7a50"/><ellipse cx="58.1" cy="18.2" rx="1.8" ry="1.7" fill="#90a850"/><ellipse cx="22.6" cy="29.7" rx="1.6" ry="2.2" fill="#90a850"/><ellipse cx="52.4" cy="24.2" rx="2.5" ry="1.8" fill="#90a850"/><ellipse cx="37.2" cy="24.7" rx="3.1" ry="2.0" fill="#90a850"/><ellipse cx="26.8" cy="27.2" rx="1.6" ry="2.1" fill="#88a048"/><ellipse cx="58.3" cy="21.3" rx="2.4" ry="1.6" fill="#88a048"/><ellipse cx="6.2" cy="16.4" rx="2.6" ry="1.9" fill="#88a048"/><ellipse cx="25.2" cy="21.0" rx="3.1" ry="2.2" fill="#88a048"/><ellipse cx="53.0" cy="20.2" rx="2.3" ry="1.1" fill="#90a850"/><ellipse cx="43.8" cy="25.0" rx="1.6" ry="1.1" fill="#88a048"/><ellipse cx="49.2" cy="32.3" rx="2.9" ry="1.3" fill="#9a7a50"/><ellipse cx="48.1" cy="31.3" rx="2.9" ry="1.4" fill="#90a850"/><ellipse cx="37.4" cy="27.5" rx="3.4" ry="1.2" fill="#88a048"/><ellipse cx="32.4" cy="32.5" rx="2.7" ry="2.0" fill="#90a850"/><ellipse cx="2.1" cy="17.5" rx="2.7" ry="1.8" fill="#90a850"/><ellipse cx="3.0" cy="32.5" rx="1.8" ry="1.4" fill="#88a048"/><ellipse cx="4.1" cy="30.5" rx="3.3" ry="2.0" fill="#90a850"/><ellipse cx="33.8" cy="29.3" rx="2.1" ry="2.0" fill="#90a850"/><ellipse cx="40.2" cy="24.4" rx="2.3" ry="1.1" fill="#88a048"/><ellipse cx="27.3" cy="19.8" rx="1.8" ry="1.7" fill="#90a850"/><ellipse cx="24.9" cy="29.3" rx="2.9" ry="1.6" fill="#9a7a50"/><ellipse cx="4.1" cy="16.9" rx="2.9" ry="1.0" fill="#90a850"/><ellipse cx="15.0" cy="15.3" rx="2.1" ry="1.5" fill="#88a048"/><ellipse cx="40.7" cy="18.6" rx="2.5" ry="2.2" fill="#88a048"/><ellipse cx="6.4" cy="18.0" rx="3.0" ry="1.2" fill="#9a7a50"/><ellipse cx="8.3" cy="32.3" rx="3.4" ry="1.9" fill="#88a048"/><ellipse cx="49.3" cy="31.9" rx="3.5" ry="1.1" fill="#90a850"/><ellipse cx="33.3" cy="21.9" rx="3.0" ry="1.4" fill="#88a048"/><ellipse cx="3.7" cy="14.3" rx="2.0" ry="1.2" fill="#9a7a50"/><ellipse cx="27.1" cy="25.1" rx="2.5" ry="2.2" fill="#90a850"/><ellipse cx="56.0" cy="19.5" rx="3.1" ry="2.0" fill="#88a048"/><ellipse cx="51.7" cy="21.7" rx="3.3" ry="1.9" fill="#9a7a50"/><ellipse cx="49.5" cy="17.5" rx="2.1" ry="2.2" fill="#9a7a50"/><ellipse cx="15.6" cy="27.6" rx="2.9" ry="1.0" fill="#9a7a50"/><ellipse cx="19.9" cy="18.0" rx="2.1" ry="2.0" fill="#9a7a50"/><ellipse cx="6.2" cy="14.0" rx="1.6" ry="2.1" fill="#9a7a50"/><ellipse cx="47.2" cy="31.8" rx="3.1" ry="1.1" fill="#90a850"/><ellipse cx="42.3" cy="32.1" rx="1.7" ry="1.8" fill="#90a850"/><ellipse cx="7.3" cy="21.5" rx="3.4" ry="1.8" fill="#88a048"/><ellipse cx="48.0" cy="18.8" rx="2.7" ry="1.9" fill="#9a7a50"/><ellipse cx="50.3" cy="26.4" rx="2.2" ry="1.6" fill="#90a850"/><ellipse cx="8.8" cy="16.1" rx="3.0" ry="1.3" fill="#9a7a50"/><ellipse cx="40.8" cy="20.7" rx="1.8" ry="1.6" fill="#88a048"/><ellipse cx="36.5" cy="25.8" rx="1.7" ry="1.6" fill="#88a048"/><ellipse cx="43.5" cy="22.5" rx="2.4" ry="1.2" fill="#88a048"/><ellipse cx="17.1" cy="25.4" rx="2.6" ry="2.0" fill="#88a048"/><ellipse cx="47.8" cy="16.0" rx="3.1" ry="1.8" fill="#9a7a50"/><ellipse cx="28.5" cy="16.3" rx="3.1" ry="1.7" fill="#90a850"/><ellipse cx="55.1" cy="22.0" rx="1.9" ry="1.3" fill="#88a048"/><ellipse cx="59.0" cy="25.9" rx="3.3" ry="1.7" fill="#90a850"/><ellipse cx="30.3" cy="32.1" rx="2.4" ry="1.6" fill="#88a048"/><ellipse cx="58.7" cy="16.8" rx="2.8" ry="2.1" fill="#9a7a50"/><ellipse cx="22.6" cy="31.0" rx="2.5" ry="1.7" fill="#9a7a50"/><ellipse cx="44.4" cy="24.7" rx="1.5" ry="1.4" fill="#9a7a50"/><ellipse cx="47.2" cy="27.5" rx="3.0" ry="1.0" fill="#88a048"/><ellipse cx="45.8" cy="20.6" rx="2.2" ry="1.7" fill="#9a7a50"/><ellipse cx="3.7" cy="28.1" rx="2.5" ry="1.5" fill="#88a048"/><ellipse cx="46.7" cy="28.0" rx="1.5" ry="1.6" fill="#9a7a50"/><ellipse cx="29.2" cy="17.0" rx="1.8" ry="1.6" fill="#90a850"/><ellipse cx="24.4" cy="15.0" rx="2.1" ry="1.7" fill="#90a850"/><ellipse cx="36.0" cy="25.2" rx="1.6" ry="1.3" fill="#9a7a50"/><ellipse cx="15.2" cy="28.9" rx="2.2" ry="1.7" fill="#90a850"/><ellipse cx="33.3" cy="25.8" rx="1.8" ry="1.4" fill="#90a850"/><ellipse cx="39.9" cy="23.2" rx="2.1" ry="1.5" fill="#90a850"/><ellipse cx="46.9" cy="32.3" rx="2.1" ry="1.8" fill="#9a7a50"/><ellipse cx="33.3" cy="31.6" rx="2.1" ry="1.6" fill="#90a850"/><ellipse cx="42.8" cy="26.8" rx="2.7" ry="2.1" fill="#90a850"/><ellipse cx="61.0" cy="19.0" rx="2.8" ry="2.0" fill="#88a048"/><ellipse cx="36.9" cy="23.1" rx="1.9" ry="1.1" fill="#90a850"/><ellipse cx="55.1" cy="31.2" rx="3.3" ry="1.6" fill="#88a048"/><ellipse cx="59.6" cy="27.3" rx="2.0" ry="1.9" fill="#9a7a50"/><ellipse cx="18.9" cy="28.1" rx="3.5" ry="1.7" fill="#88a048"/><ellipse cx="23.6" cy="32.2" rx="3.1" ry="1.1" fill="#9a7a50"/><ellipse cx="21.2" cy="17.6" rx="2.3" ry="1.7" fill="#88a048"/><ellipse cx="61.0" cy="15.5" rx="2.2" ry="1.4" fill="#88a048"/><ellipse cx="28.8" cy="14.1" rx="1.6" ry="1.8" fill="#88a048"/><ellipse cx="15.9" cy="32.3" rx="2.2" ry="1.5" fill="#90a850"/><ellipse cx="54.9" cy="19.7" rx="2.8" ry="1.4" fill="#90a850"/><ellipse cx="58.4" cy="25.3" rx="2.7" ry="1.1" fill="#88a048"/><ellipse cx="49.7" cy="30.7" rx="1.7" ry="1.1" fill="#90a850"/><ellipse cx="14.6" cy="27.5" rx="2.6" ry="1.1" fill="#90a850"/><ellipse cx="13.7" cy="25.1" rx="2.6" ry="1.3" fill="#90a850"/><ellipse cx="29.3" cy="29.0" rx="2.1" ry="1.7" fill="#88a048"/><ellipse cx="55.8" cy="14.4" rx="1.7" ry="1.4" fill="#88a048"/><ellipse cx="36.2" cy="16.9" rx="2.8" ry="1.9" fill="#90a850"/><ellipse cx="1.0" cy="18.0" rx="1.9" ry="1.1" fill="#90a850"/><path d="M42 28L60 20" stroke="#6a5a40" stroke-width="2"/><rect y="33.5" width="62" height="3" fill="#2a2a2a" opacity="0.35"/><rect x="42" y="33" width="14" height="1.2" fill="#f0f0f0" opacity="0.8"/></svg>
<svg style="left:83px;top:503.3px" width="8" height="9"><path d="M2.7 7.3V1.6L7 0.7V6.3" stroke="#ececec" fill="none" stroke-width="1.1"/><circle cx="1.8" cy="7.3" r="1.6" fill="#ececec"/><circle cx="6.1" cy="6.4" r="1.5" fill="#ececec"/></svg>
<div class="t" style="left:81px;top:517.30px;font-size:7px;line-height:7px;color:#8e8e92;font-weight:400;font-family:'Liberation Sans', sans-serif;transform:scaleX(0.8580);transform-origin:0 0;">2025-11-05 00-21-07...</div>
<svg style="left:155px;top:478.8px;border-radius:2px;overflow:hidden" width="62" height="35.5" viewBox="0 0 62 35.5" preserveAspectRatio="none"><rect width="62" height="36" fill="#242426"/><path d="M0 3L6 4L14 3L22 5L30 3L40 4L50 3L58 5L62 4V30L56 31L46 29L36 31L26 29L16 31L6 29L0 30Z" fill="#c8c080"/><path d="M2 8H60V26H2Z" fill="#6a9a68"/><rect x="2" y="32" width="20" height="1.5" fill="#c04a3a"/></svg>
<div class="t" style="left:155px;top:517.30px;font-size:7px;line-height:7px;color:#8e8e92;font-weight:400;font-family:'Liberation Sans', sans-serif;transform:scaleX(0.8614);transform-origin:0 0;">darren-curtis-pay-the...</div>
<div style="left:0px;top:519.5px;width:234px;height:6px;background:#2a2a2f;"></div>
<div style="left:0px;top:46px;width:234px;height:16px;background:#1c1c20;"></div>
<div class="t" style="left:4px;top:50.75px;font-size:7.5px;line-height:7.5px;color:#d8d8dc;font-weight:400;font-family:'Liberation Sans', sans-serif;transform:scaleX(0.9162);transform-origin:0 0;">Master</div>
<div style="left:236px;top:46px;width:788px;height:16px;background:#202024;"></div>
<div style="left:628.5px;top:46px;width:1.5px;height:234px;background:#161618;"></div>
<div class="t" style="left:238px;top:50.50px;font-size:7.6px;line-height:7.6px;color:#e0e0e4;font-weight:700;font-family:'Liberation Sans', sans-serif;transform:scaleX(0.8943);transform-origin:0 0;">00:00:13:26</div>
<div class="t" style="left:391px;top:50.50px;font-size:7.6px;line-height:7.6px;color:#e0e0e4;font-weight:700;font-family:'Liberation Sans', sans-serif;transform:scaleX(0.9178);transform-origin:0 0;">2025-11-04 23-22-00.mkv</div>
<div class="t" style="left:586px;top:50.50px;font-size:7.6px;line-height:7.6px;color:#e0e0e4;font-weight:700;font-family:'Liberation Sans', sans-serif;transform:scaleX(0.8943);transform-origin:0 0;">00:00:22:03</div>
<div class="t" style="left:634.5px;top:50.50px;font-size:7.6px;line-height:7.6px;color:#e0e0e4;font-weight:700;font-family:'Liberation Sans', sans-serif;transform:scaleX(0.8822);transform-origin:0 0;">00:01:38:05</div>
<div class="t" style="left:805.6px;top:50.80px;font-size:8px;line-height:8px;color:#d8404a;font-weight:400;font-family:'Liberation Sans', sans-serif;transform:scaleX(0.9424);transform-origin:0 0;">Timeline 1</div>
<svg style="left:843px;top:53px" width="6" height="4"><path d="M0.5 0.5L3 3L5.5 0.5" stroke="#8a8a8e" fill="none"/></svg>
<div class="t" style="left:981px;top:50.50px;font-size:7.6px;line-height:7.6px;color:#e8e8ec;font-weight:700;font-family:'Liberation Sans', sans-serif;transform:scaleX(0.9184);transform-origin:0 0;">01:00:00:56</div>
<div style="left:236px;top:62px;width:392.5px;height:186px;background:#1c1c1e;"></div>
<div style="left:630px;top:62px;width:394px;height:186px;background:#1c1c1e;"></div>
<div style="left:267px;top:63px;width:330px;height:185px;background:linear-gradient(180deg,#6ec3e8 0%,#72c5ec 60%,#80c8ea 85%,#8aa070 92%,#8a7a58 100%);overflow:hidden"></div>
<div style="left:663px;top:63px;width:329px;height:185px;background:#000000;"></div>
<div class="t" style="left:789px;top:130.00px;font-size:21px;line-height:21px;color:#f0a820;font-weight:400;font-family:'Liberation Serif', serif;transform:scaleX(1.0922);transform-origin:0 0;-webkit-text-stroke:0.45px #f0a820;letter-spacing:0.6px;">C<span style="font-size:17px">REATE</span></div>
<div class="t" style="left:734px;top:158.00px;font-size:21px;line-height:21px;color:#f0a820;font-weight:400;font-family:'Liberation Serif', serif;transform:scaleX(1.0664);transform-origin:0 0;-webkit-text-stroke:0.45px #f0a820;letter-spacing:0.6px;">Y<span style="font-size:17px">OUR</span> O<span style="font-size:17px">WN</span> S<span style="font-size:17px">PELLS</span></div>
<div style="left:236px;top:248px;width:392.5px;height:32px;background:#1f1f23;"></div>
<div style="left:630px;top:248px;width:394px;height:32px;background:#1f1f23;"></div>
<div style="left:240px;top:254.2px;width:357px;height:1.6px;background:#3c3c42;"></div>
<div style="left:597px;top:253.8px;width:22px;height:2.4px;border-radius:1px;background:#121214"></div>
<div style="left:634px;top:253.8px;width:9px;height:2.4px;border-radius:1px;background:#121214"></div>
<div style="left:643px;top:254.2px;width:377px;height:1.6px;background:#3c3c42;"></div>
<svg style="left:380px;top:258px" width="6" height="5"><path d="M0.5 1.5h1.5L3 0.5L4 1.5h1.5V4.5h-5Z" fill="#b0b0b4"/></svg>
<svg style="left:594.5px;top:258px" width="6" height="5"><path d="M0.5 1.5h1.5L3 0.5L4 1.5h1.5V4.5h-5Z" fill="#b0b0b4"/></svg>
<svg style="left:638px;top:258px" width="6" height="5"><path d="M0.5 1.5h1.5L3 0.5L4 1.5h1.5V4.5h-5Z" fill="#b0b0b4"/></svg>
<svg style="left:1011px;top:258px" width="6" height="5"><path d="M0.5 1.5h1.5L3 0.5L4 1.5h1.5V4.5h-5Z" fill="#b0b0b4"/></svg>
<svg style="left:594.5px;top:249px" width="6" height="9"><path d="M3 5.5L0.5 3V1L1.5 0.3h1L3 1L3.5 0.3h1L5.5 1V3Z" fill="#e83a30"/><path d="M3 5v3" stroke="#c03028" stroke-width="0.9"/></svg>
<svg style="left:640px;top:249px" width="6" height="9"><path d="M3 5.5L0.5 3V1L1.5 0.3h1L3 1L3.5 0.3h1L5.5 1V3Z" fill="#e83a30"/><path d="M3 5v3" stroke="#c03028" stroke-width="0.9"/></svg>
<svg style="left:379px;top:266px" width="102" height="11"><path d="M0.5 1v9" stroke="#9a9aa0" stroke-width="1.3"/><path d="M6 1L1.5 5.5L6 10ZM11 1L6.5 5.5L11 10Z" fill="#9a9aa0"/><path d="M27 1.5L22 5.5L27 9.5Z" fill="#9a9aa0"/><rect x="37" y="2" width="7" height="7" fill="#9a9aa0"/><path d="M54 1.5L59 5.5L54 9.5Z" fill="#9a9aa0"/><path d="M69 1L73.5 5.5L69 10ZM74 1L78.5 5.5L74 10Z" fill="#9a9aa0"/><path d="M79.5 1v9" stroke="#9a9aa0" stroke-width="1.3"/><path d="M90 4.5v-1.5h9M97 1l2 2l-2 2M99 6.5v2h-9.5v-3" stroke="#9a9aa0" fill="none" stroke-width="1.2"/></svg>
<svg style="left:774.5px;top:266px" width="102" height="11"><path d="M0.5 1v9" stroke="#9a9aa0" stroke-width="1.3"/><path d="M6 1L1.5 5.5L6 10ZM11 1L6.5 5.5L11 10Z" fill="#9a9aa0"/><path d="M27 1.5L22 5.5L27 9.5Z" fill="#9a9aa0"/><rect x="37" y="2" width="7" height="7" fill="#9a9aa0"/><path d="M54 1.5L59 5.5L54 9.5Z" fill="#9a9aa0"/><path d="M69 1L73.5 5.5L69 10ZM74 1L78.5 5.5L74 10Z" fill="#9a9aa0"/><path d="M79.5 1v9" stroke="#9a9aa0" stroke-width="1.3"/><path d="M90 4.5v-1.5h9M97 1l2 2l-2 2M99 6.5v2h-9.5v-3" stroke="#9a9aa0" fill="none" stroke-width="1.2"/></svg>
<svg style="left:328px;top:267px" width="22" height="9"><path d="M3 1.5L0.8 4.5L3 7.5M19 1.5L21.2 4.5L19 7.5" stroke="#7a7a7e" fill="none" stroke-width="1"/><circle cx="11" cy="4.5" r="2.6" fill="#a0a0a4"/></svg>
<svg style="left:723.5px;top:267px" width="22" height="9"><path d="M3 1.5L0.8 4.5L3 7.5M19 1.5L21.2 4.5L19 7.5" stroke="#7a7a7e" fill="none" stroke-width="1"/><circle cx="11" cy="4.5" r="2.6" fill="#a0a0a4"/></svg>
<div style="left:245px;top:267px;width:10px;height:8px;border:1.2px solid #8a8a8e;background:#4a4a4e;border-radius:1px"></div>
<svg style="left:260px;top:269px" width="6" height="4"><path d="M0.5 0.5L3 3L5.5 0.5" stroke="#6a6a6e" fill="none"/></svg>
<svg style="left:273px;top:265px" width="12" height="12"><rect x="0.5" y="3" width="7" height="6" stroke="#7a7a7e" fill="none"/><path d="M9 2v7" stroke="#7a7a7e"/><circle cx="8.3" cy="9.5" r="1.3" fill="#7a7a7e"/></svg>
<svg style="left:290px;top:269px" width="6" height="4"><path d="M0.5 0.5L3 3L5.5 0.5" stroke="#6a6a6e" fill="none"/></svg>
<svg style="left:642px;top:266px" width="9" height="9"><rect x="0.5" y="0.5" width="8" height="8" stroke="#8a8a8e" fill="none" stroke-dasharray="2 1"/></svg>
<svg style="left:655px;top:269px" width="6" height="4"><path d="M0.5 0.5L3 3L5.5 0.5" stroke="#6a6a6e" fill="none"/></svg>
<svg style="left:570.5px;top:266px" width="48" height="11"><path d="M2 2h7M2 9h7M0.5 3.5v4M10.5 3.5v4" stroke="#9a9aa0" fill="none" stroke-width="1.1"/><path d="M22 1.5L27 5.5L22 9.5Z" fill="#9a9aa0"/><path d="M28.5 1v9" stroke="#9a9aa0" stroke-width="1.3"/><path d="M40 1v9" stroke="#9a9aa0" stroke-width="1.3"/><path d="M46 1.5L41 5.5L46 9.5Z" fill="#9a9aa0"/></svg>
<svg style="left:966px;top:266px" width="48" height="11"><path d="M2 2h7M2 9h7M0.5 3.5v4M10.5 3.5v4" stroke="#9a9aa0" fill="none" stroke-width="1.1"/><path d="M22 1.5L27 5.5L22 9.5Z" fill="#9a9aa0"/><path d="M28.5 1v9" stroke="#9a9aa0" stroke-width="1.3"/><path d="M40 1v9" stroke="#9a9aa0" stroke-width="1.3"/><path d="M46 1.5L41 5.5L46 9.5Z" fill="#9a9aa0"/></svg>
<div style="left:236px;top:280px;width:788px;height:1px;background:#161618;"></div>
<div style="left:236px;top:281px;width:788px;height:26px;background:#1f1f23;"></div>
<div style="left:236px;top:306px;width:788px;height:2px;background:#161618;"></div>
<svg style="left:244px;top:288px" width="14" height="11"><path d="M0 1h4M5 1h4M0 4h3M4 4h4M0 7h3" stroke="#6a6a6e" stroke-width="1.4"/><path d="M7 8L9 10L13 5" stroke="#b0b0b4" fill="none" stroke-width="1.4"/></svg>
<svg style="left:265px;top:287px" width="15" height="12"><path d="M4 1L0.5 6L4 11" stroke="#5a5a5e" fill="none"/><path d="M9 1L14 6L9 11L4 6Z" fill="#6a6a6e"/></svg>
<svg style="left:288px;top:287px" width="10" height="12"><rect x="2" y="0.5" width="4" height="7" rx="2" fill="#6a6a6e"/><path d="M0.5 5a3.5 3.5 0 0 0 7 0M4 9v3" stroke="#6a6a6e" fill="none"/></svg>
<svg style="left:405px;top:287px" width="9" height="12"><path d="M1 0.5L8 7L4.5 7.2L6.5 11L5 11.5L3.2 7.8L1 10Z" fill="#e0483a"/></svg>
<svg style="left:423px;top:287px" width="16" height="12"><path d="M0.5 3h4v7h-4M15.5 3h-4v7h4" stroke="#5e5e62" fill="none"/><rect x="5.5" y="0.8" width="5" height="10.5" rx="1" stroke="#a0a0a4" fill="#2a2a2e" stroke-width="1.1"/><path d="M8 3v6" stroke="#6a6a6e"/></svg>
<svg style="left:446px;top:288px" width="13" height="10"><rect x="0.5" y="1" width="12" height="7.5" rx="2" fill="#b4b4b8"/><circle cx="3.5" cy="4.8" r="1.1" fill="#1f1f23"/><circle cx="6.5" cy="4.8" r="1.1" fill="#1f1f23"/><circle cx="9.5" cy="4.8" r="1.1" fill="#1f1f23"/></svg>
<svg style="left:467px;top:287px" width="14" height="12"><path d="M3.5 3L1 6L3.5 9M10.5 3L13 6L10.5 9" stroke="#5e5e62" fill="none"/><path d="M7 1.5v9" stroke="#6a6a6e" stroke-width="1.3"/><rect x="5.5" y="0.5" width="3" height="2" fill="#6a6a6e"/></svg>
<div style="left:488px;top:286px;width:1px;height:15px;background:#2e2e32;"></div>
<svg style="left:493px;top:287px" width="16" height="12"><rect x="3" y="0.8" width="10" height="7" stroke="#6a6a6e" fill="none"/><path d="M0.5 3v7h2M15.5 3v7h-2M6 10.5h4L8 8.5Z" stroke="#5a5a5e" fill="none"/></svg>
<svg style="left:516px;top:287px" width="13" height="12"><rect x="0.5" y="3" width="8.5" height="7" stroke="#7a7a7e" fill="none"/><path d="M10 0.5l2 2l-2 2M11.5 2.5v7h-2" stroke="#7a7a7e" fill="none"/></svg>
<svg style="left:535px;top:287px" width="16" height="12"><rect x="0.5" y="3" width="7" height="6" stroke="#6e6e72" fill="none"/><rect x="8" y="1.5" width="7" height="6" stroke="#6e6e72" fill="none"/><path d="M4 9v2.5M2.8 10.5L4 11.7L5.2 10.5M11.5 7.5v3M10.3 9.5l1.2 1.2l1.2-1.2" stroke="#6e6e72" fill="none"/></svg>
<div style="left:558px;top:286px;width:1px;height:15px;background:#2e2e32;"></div>
<svg style="left:566px;top:287px" width="10" height="11"><path d="M1.5 1v5a3.5 3.5 0 0 0 7 0V1" stroke="#e8e8ec" fill="none" stroke-width="1.8"/></svg>
<svg style="left:587px;top:287px" width="10" height="11"><path d="M3.5 6.5L6.5 3.5" stroke="#e8e8ec" stroke-width="1.4"/><rect x="0.6" y="5.2" width="5" height="3.4" rx="1.7" transform="rotate(-45 3.1 6.9)" stroke="#e8e8ec" fill="none" stroke-width="1.3"/><rect x="4.4" y="1.4" width="5" height="3.4" rx="1.7" transform="rotate(-45 6.9 3.1)" stroke="#e8e8ec" fill="none" stroke-width="1.3"/></svg>
<svg style="left:609px;top:287px" width="8" height="11"><rect x="0.5" y="5" width="7" height="5.5" fill="none" stroke="#9a9a9e"/><path d="M2 5V3a2 2 0 0 1 4 0v2" stroke="#9a9a9e" fill="none"/></svg>
<div style="left:624px;top:286px;width:1px;height:15px;background:#2e2e32;"></div>
<svg style="left:635px;top:288px" width="6" height="10"><path d="M0.5 0.5h5v9L3 7L0.5 9.5Z" fill="#2a7ae0"/></svg>
<svg style="left:645px;top:291px" width="6" height="4"><path d="M0.5 0.5L3 3L5.5 0.5" stroke="#7a7a7e" fill="none"/></svg>
<svg style="left:658px;top:288px" width="5" height="10"><path d="M0.5 0.5h4v9L2.5 7.5L0.5 9.5Z" fill="#9a30e0"/></svg>
<svg style="left:667px;top:291px" width="6" height="4"><path d="M0.5 0.5L3 3L5.5 0.5" stroke="#7a7a7e" fill="none"/></svg>
<div style="left:676px;top:286px;width:1px;height:15px;background:#2e2e32;"></div>
<div style="left:684.5px;top:288.5px;width:12px;height:8px;border:1px solid #545458"></div>
<div style="left:693.5px;top:292px;width:6px;height:6px;border:1.3px solid #6a6a6e;border-radius:50%;background:#1f1f23"></div>
<div style="left:708px;top:288.5px;width:10px;height:8px;border:1px solid #545458"></div>
<div style="left:715px;top:292px;width:6px;height:6px;border:1.3px solid #6a6a6e;border-radius:50%;background:#1f1f23"></div>
<div style="left:727.5px;top:288.5px;width:12px;height:8px;border:1px solid #8a8a8e"></div>
<div style="left:736.5px;top:292px;width:6px;height:6px;border:1.3px solid #d8d8dc;border-radius:50%;background:#1f1f23"></div>
<div style="left:750px;top:293px;width:5px;height:1px;background:#5a5a5e;"></div>
<div style="left:760px;top:293px;width:42px;height:1px;background:#38383c;"></div>
<div style="left:782px;top:290.5px;width:5px;height:5px;border-radius:50%;background:#b8b8bc"></div>
<div style="left:808px;top:293px;width:5px;height:1px;background:#6a6a6e;"></div>
<div style="left:810px;top:291px;width:1px;height:5px;background:#6a6a6e;"></div>
<svg style="left:919px;top:288px" width="10" height="10"><path d="M0.5 3h2.5L6 0.5v9L3 7H0.5Z" fill="#e8e8ec"/><path d="M7.5 3a3 3 0 0 1 0 4" stroke="#e8e8ec" fill="none"/></svg>
<div style="left:931.5px;top:292.5px;width:41px;height:1.6px;background:#3aa040;"></div>
<div style="left:969.5px;top:290.5px;width:5.5px;height:5.5px;border-radius:50%;background:#c8c8cc"></div>
<div style="left:979.5px;top:287.5px;width:21px;height:11px;border:1px solid #3a3a3e;border-radius:3px"></div>
<div class="t" style="left:983.5px;top:289.75px;font-size:6.5px;line-height:6.5px;color:#a8a8ac;font-weight:400;font-family:'Liberation Sans', sans-serif;transform:scaleX(1.0904);transform-origin:0 0;">DIM</div>
<div style="left:1007px;top:287px;width:2px;height:12px;background:#2e2e32;"></div>
<div style="left:1011px;top:287px;width:2px;height:12px;background:#2e2e32;"></div>
<div style="left:236px;top:308px;width:788px;height:218px;background:#252529;"></div>
<div style="left:236px;top:308px;width:137px;height:218px;background:#1e1e22;"></div>
<div style="left:233px;top:308px;width:3px;height:218px;background:#141416;"></div>
<div class="t" style="left:273px;top:312.75px;font-size:11.5px;line-height:11.5px;color:#d8d8dc;font-weight:700;font-family:'Liberation Sans', sans-serif;transform:scaleX(0.9576);transform-origin:0 0;">01:00:00:56</div>
<div style="left:236px;top:328px;width:137px;height:1px;background:#161618;"></div>
<div style="left:373px;top:308px;width:646px;height:20px;background:#242428;"></div>
<svg style="left:373px;top:308px" width="646" height="20"><path d="M0.50 1.5v3" stroke="#505054" stroke-width="0.8"/><path d="M3.74 1.5v1.8" stroke="#3a3a3e" stroke-width="0.8"/><path d="M6.97 1.5v1.8" stroke="#3a3a3e" stroke-width="0.8"/><path d="M10.21 1.5v1.8" stroke="#3a3a3e" stroke-width="0.8"/><path d="M13.45 1.5v1.8" stroke="#3a3a3e" stroke-width="0.8"/><path d="M16.69 1.5v3" stroke="#505054" stroke-width="0.8"/><path d="M19.92 1.5v1.8" stroke="#3a3a3e" stroke-width="0.8"/><path d="M23.16 1.5v1.8" stroke="#3a3a3e" stroke-width="0.8"/><path d="M26.40 1.5v1.8" stroke="#3a3a3e" stroke-width="0.8"/><path d="M29.63 1.5v1.8" stroke="#3a3a3e" stroke-width="0.8"/><path d="M32.87 1.5v3" stroke="#505054" stroke-width="0.8"/><path d="M36.11 1.5v1.8" stroke="#3a3a3e" stroke-width="0.8"/><path d="M39.34 1.5v1.8" stroke="#3a3a3e" stroke-width="0.8"/><path d="M42.58 1.5v1.8" stroke="#3a3a3e" stroke-width="0.8"/><path d="M45.82 1.5v1.8" stroke="#3a3a3e" stroke-width="0.8"/><path d="M49.05 1.5v3" stroke="#505054" stroke-width="0.8"/><path d="M52.29 1.5v1.8" stroke="#3a3a3e" stroke-width="0.8"/><path d="M55.53 1.5v1.8" stroke="#3a3a3e" stroke-width="0.8"/><path d="M58.77 1.5v1.8" stroke="#3a3a3e" stroke-width="0.8"/><path d="M62.00 1.5v1.8" stroke="#3a3a3e" stroke-width="0.8"/><path d="M65.24 1.5v3" stroke="#505054" stroke-width="0.8"/><path d="M68.48 1.5v1.8" stroke="#3a3a3e" stroke-width="0.8"/><path d="M71.71 1.5v1.8" stroke="#3a3a3e" stroke-width="0.8"/><path d="M74.95 1.5v1.8" stroke="#3a3a3e" stroke-width="0.8"/><path d="M78.19 1.5v1.8" stroke="#3a3a3e" stroke-width="0.8"/><path d="M81.42 1.5v3" stroke="#505054" stroke-width="0.8"/><path d="M84.66 1.5v1.8" stroke="#3a3a3e" stroke-width="0.8"/><path d="M87.90 1.5v1.8" stroke="#3a3a3e" stroke-width="0.8"/><path d="M91.14 1.5v1.8" stroke="#3a3a3e" stroke-width="0.8"/><path d="M94.37 1.5v1.8" stroke="#3a3a3e" stroke-width="0.8"/><path d="M97.61 1.5v3" stroke="#505054" stroke-width="0.8"/><path d="M100.85 1.5v1.8" stroke="#3a3a3e" stroke-width="0.8"/><path d="M104.08 1.5v1.8" stroke="#3a3a3e" stroke-width="0.8"/><path d="M107.32 1.5v1.8" stroke="#3a3a3e" stroke-width="0.8"/><path d="M110.56 1.5v1.8" stroke="#3a3a3e" stroke-width="0.8"/><path d="M113.80 1.5v3" stroke="#505054" stroke-width="0.8"/><path d="M117.03 1.5v1.8" stroke="#3a3a3e" stroke-width="0.8"/><path d="M120.27 1.5v1.8" stroke="#3a3a3e" stroke-width="0.8"/><path d="M123.51 1.5v1.8" stroke="#3a3a3e" stroke-width="0.8"/><path d="M126.74 1.5v1.8" stroke="#3a3a3e" stroke-width="0.8"/><path d="M129.98 1.5v3" stroke="#505054" stroke-width="0.8"/><path d="M133.22 1.5v1.8" stroke="#3a3a3e" stroke-width="0.8"/><path d="M136.45 1.5v1.8" stroke="#3a3a3e" stroke-width="0.8"/><path d="M139.69 1.5v1.8" stroke="#3a3a3e" stroke-width="0.8"/><path d="M142.93 1.5v1.8" stroke="#3a3a3e" stroke-width="0.8"/><path d="M146.16 1.5v3" stroke="#505054" stroke-width="0.8"/><path d="M149.40 1.5v1.8" stroke="#3a3a3e" stroke-width="0.8"/><path d="M152.64 1.5v1.8" stroke="#3a3a3e" stroke-width="0.8"/><path d="M155.88 1.5v1.8" stroke="#3a3a3e" stroke-width="0.8"/><path d="M159.11 1.5v1.8" stroke="#3a3a3e" stroke-width="0.8"/><path d="M162.35 1.5v3" stroke="#505054" stroke-width="0.8"/><path d="M165.59 1.5v1.8" stroke="#3a3a3e" stroke-width="0.8"/><path d="M168.82 1.5v1.8" stroke="#3a3a3e" stroke-width="0.8"/><path d="M172.06 1.5v1.8" stroke="#3a3a3e" stroke-width="0.8"/><path d="M175.30 1.5v1.8" stroke="#3a3a3e" stroke-width="0.8"/><path d="M178.53 1.5v3" stroke="#505054" stroke-width="0.8"/><path d="M181.77 1.5v1.8" stroke="#3a3a3e" stroke-width="0.8"/><path d="M185.01 1.5v1.8" stroke="#3a3a3e" stroke-width="0.8"/><path d="M188.25 1.5v1.8" stroke="#3a3a3e" stroke-width="0.8"/><path d="M191.48 1.5v1.8" stroke="#3a3a3e" stroke-width="0.8"/><path d="M194.72 1.5v3" stroke="#505054" stroke-width="0.8"/><path d="M197.96 1.5v1.8" stroke="#3a3a3e" stroke-width="0.8"/><path d="M201.19 1.5v1.8" stroke="#3a3a3e" stroke-width="0.8"/><path d="M204.43 1.5v1.8" stroke="#3a3a3e" stroke-width="0.8"/><path d="M207.67 1.5v1.8" stroke="#3a3a3e" stroke-width="0.8"/><path d="M210.91 1.5v3" stroke="#505054" stroke-width="0.8"/><path d="M214.14 1.5v1.8" stroke="#3a3a3e" stroke-width="0.8"/><path d="M217.38 1.5v1.8" stroke="#3a3a3e" stroke-width="0.8"/><path d="M220.62 1.5v1.8" stroke="#3a3a3e" stroke-width="0.8"/><path d="M223.85 1.5v1.8" stroke="#3a3a3e" stroke-width="0.8"/><path d="M227.09 1.5v3" stroke="#505054" stroke-width="0.8"/><path d="M230.33 1.5v1.8" stroke="#3a3a3e" stroke-width="0.8"/><path d="M233.56 1.5v1.8" stroke="#3a3a3e" stroke-width="0.8"/><path d="M236.80 1.5v1.8" stroke="#3a3a3e" stroke-width="0.8"/><path d="M240.04 1.5v1.8" stroke="#3a3a3e" stroke-width="0.8"/><path d="M243.28 1.5v3" stroke="#505054" stroke-width="0.8"/><path d="M246.51 1.5v1.8" stroke="#3a3a3e" stroke-width="0.8"/><path d="M249.75 1.5v1.8" stroke="#3a3a3e" stroke-width="0.8"/><path d="M252.99 1.5v1.8" stroke="#3a3a3e" stroke-width="0.8"/><path d="M256.22 1.5v1.8" stroke="#3a3a3e" stroke-width="0.8"/><path d="M259.46 1.5v3" stroke="#505054" stroke-width="0.8"/><path d="M262.70 1.5v1.8" stroke="#3a3a3e" stroke-width="0.8"/><path d="M265.93 1.5v1.8" stroke="#3a3a3e" stroke-width="0.8"/><path d="M269.17 1.5v1.8" stroke="#3a3a3e" stroke-width="0.8"/><path d="M272.41 1.5v1.8" stroke="#3a3a3e" stroke-width="0.8"/><path d="M275.64 1.5v3" stroke="#505054" stroke-width="0.8"/><path d="M278.88 1.5v1.8" stroke="#3a3a3e" stroke-width="0.8"/><path d="M282.12 1.5v1.8" stroke="#3a3a3e" stroke-width="0.8"/><path d="M285.36 1.5v1.8" stroke="#3a3a3e" stroke-width="0.8"/><path d="M288.59 1.5v1.8" stroke="#3a3a3e" stroke-width="0.8"/><path d="M291.83 1.5v3" stroke="#505054" stroke-width="0.8"/><path d="M295.07 1.5v1.8" stroke="#3a3a3e" stroke-width="0.8"/><path d="M298.30 1.5v1.8" stroke="#3a3a3e" stroke-width="0.8"/><path d="M301.54 1.5v1.8" stroke="#3a3a3e" stroke-width="0.8"/><path d="M304.78 1.5v1.8" stroke="#3a3a3e" stroke-width="0.8"/><path d="M308.01 1.5v3" stroke="#505054" stroke-width="0.8"/><path d="M311.25 1.5v1.8" stroke="#3a3a3e" stroke-width="0.8"/><path d="M314.49 1.5v1.8" stroke="#3a3a3e" stroke-width="0.8"/><path d="M317.73 1.5v1.8" stroke="#3a3a3e" stroke-width="0.8"/><path d="M320.96 1.5v1.8" stroke="#3a3a3e" stroke-width="0.8"/><path d="M324.20 1.5v3" stroke="#505054" stroke-width="0.8"/><path d="M327.44 1.5v1.8" stroke="#3a3a3e" stroke-width="0.8"/><path d="M330.67 1.5v1.8" stroke="#3a3a3e" stroke-width="0.8"/><path d="M333.91 1.5v1.8" stroke="#3a3a3e" stroke-width="0.8"/><path d="M337.15 1.5v1.8" stroke="#3a3a3e" stroke-width="0.8"/><path d="M340.38 1.5v3" stroke="#505054" stroke-width="0.8"/><path d="M343.62 1.5v1.8" stroke="#3a3a3e" stroke-width="0.8"/><path d="M346.86 1.5v1.8" stroke="#3a3a3e" stroke-width="0.8"/><path d="M350.10 1.5v1.8" stroke="#3a3a3e" stroke-width="0.8"/><path d="M353.33 1.5v1.8" stroke="#3a3a3e" stroke-width="0.8"/><path d="M356.57 1.5v3" stroke="#505054" stroke-width="0.8"/><path d="M359.81 1.5v1.8" stroke="#3a3a3e" stroke-width="0.8"/><path d="M363.04 1.5v1.8" stroke="#3a3a3e" stroke-width="0.8"/><path d="M366.28 1.5v1.8" stroke="#3a3a3e" stroke-width="0.8"/><path d="M369.52 1.5v1.8" stroke="#3a3a3e" stroke-width="0.8"/><path d="M372.75 1.5v3" stroke="#505054" stroke-width="0.8"/><path d="M375.99 1.5v1.8" stroke="#3a3a3e" stroke-width="0.8"/><path d="M379.23 1.5v1.8" stroke="#3a3a3e" stroke-width="0.8"/><path d="M382.47 1.5v1.8" stroke="#3a3a3e" stroke-width="0.8"/><path d="M385.70 1.5v1.8" stroke="#3a3a3e" stroke-width="0.8"/><path d="M388.94 1.5v3" stroke="#505054" stroke-width="0.8"/><path d="M392.18 1.5v1.8" stroke="#3a3a3e" stroke-width="0.8"/><path d="M395.41 1.5v1.8" stroke="#3a3a3e" stroke-width="0.8"/><path d="M398.65 1.5v1.8" stroke="#3a3a3e" stroke-width="0.8"/><path d="M401.89 1.5v1.8" stroke="#3a3a3e" stroke-width="0.8"/><path d="M405.12 1.5v3" stroke="#505054" stroke-width="0.8"/><path d="M408.36 1.5v1.8" stroke="#3a3a3e" stroke-width="0.8"/><path d="M411.60 1.5v1.8" stroke="#3a3a3e" stroke-width="0.8"/><path d="M414.84 1.5v1.8" stroke="#3a3a3e" stroke-width="0.8"/><path d="M418.07 1.5v1.8" stroke="#3a3a3e" stroke-width="0.8"/><path d="M421.31 1.5v3" stroke="#505054" stroke-width="0.8"/><path d="M424.55 1.5v1.8" stroke="#3a3a3e" stroke-width="0.8"/><path d="M427.78 1.5v1.8" stroke="#3a3a3e" stroke-width="0.8"/><path d="M431.02 1.5v1.8" stroke="#3a3a3e" stroke-width="0.8"/><path d="M434.26 1.5v1.8" stroke="#3a3a3e" stroke-width="0.8"/><path d="M437.50 1.5v3" stroke="#505054" stroke-width="0.8"/><path d="M440.73 1.5v1.8" stroke="#3a3a3e" stroke-width="0.8"/><path d="M443.97 1.5v1.8" stroke="#3a3a3e" stroke-width="0.8"/><path d="M447.21 1.5v1.8" stroke="#3a3a3e" stroke-width="0.8"/><path d="M450.44 1.5v1.8" stroke="#3a3a3e" stroke-width="0.8"/><path d="M453.68 1.5v3" stroke="#505054" stroke-width="0.8"/><path d="M456.92 1.5v1.8" stroke="#3a3a3e" stroke-width="0.8"/><path d="M460.15 1.5v1.8" stroke="#3a3a3e" stroke-width="0.8"/><path d="M463.39 1.5v1.8" stroke="#3a3a3e" stroke-width="0.8"/><path d="M466.63 1.5v1.8" stroke="#3a3a3e" stroke-width="0.8"/><path d="M469.87 1.5v3" stroke="#505054" stroke-width="0.8"/><path d="M473.10 1.5v1.8" stroke="#3a3a3e" stroke-width="0.8"/><path d="M476.34 1.5v1.8" stroke="#3a3a3e" stroke-width="0.8"/><path d="M479.58 1.5v1.8" stroke="#3a3a3e" stroke-width="0.8"/><path d="M482.81 1.5v1.8" stroke="#3a3a3e" stroke-width="0.8"/><path d="M486.05 1.5v3" stroke="#505054" stroke-width="0.8"/><path d="M489.29 1.5v1.8" stroke="#3a3a3e" stroke-width="0.8"/><path d="M492.52 1.5v1.8" stroke="#3a3a3e" stroke-width="0.8"/><path d="M495.76 1.5v1.8" stroke="#3a3a3e" stroke-width="0.8"/><path d="M499.00 1.5v1.8" stroke="#3a3a3e" stroke-width="0.8"/><path d="M502.24 1.5v3" stroke="#505054" stroke-width="0.8"/><path d="M505.47 1.5v1.8" stroke="#3a3a3e" stroke-width="0.8"/><path d="M508.71 1.5v1.8" stroke="#3a3a3e" stroke-width="0.8"/><path d="M511.95 1.5v1.8" stroke="#3a3a3e" stroke-width="0.8"/><path d="M515.18 1.5v1.8" stroke="#3a3a3e" stroke-width="0.8"/><path d="M518.42 1.5v3" stroke="#505054" stroke-width="0.8"/><path d="M521.66 1.5v1.8" stroke="#3a3a3e" stroke-width="0.8"/><path d="M524.89 1.5v1.8" stroke="#3a3a3e" stroke-width="0.8"/><path d="M528.13 1.5v1.8" stroke="#3a3a3e" stroke-width="0.8"/><path d="M531.37 1.5v1.8" stroke="#3a3a3e" stroke-width="0.8"/><path d="M534.61 1.5v3" stroke="#505054" stroke-width="0.8"/><path d="M537.84 1.5v1.8" stroke="#3a3a3e" stroke-width="0.8"/><path d="M541.08 1.5v1.8" stroke="#3a3a3e" stroke-width="0.8"/><path d="M544.32 1.5v1.8" stroke="#3a3a3e" stroke-width="0.8"/><path d="M547.55 1.5v1.8" stroke="#3a3a3e" stroke-width="0.8"/><path d="M550.79 1.5v3" stroke="#505054" stroke-width="0.8"/><path d="M554.03 1.5v1.8" stroke="#3a3a3e" stroke-width="0.8"/><path d="M557.26 1.5v1.8" stroke="#3a3a3e" stroke-width="0.8"/><path d="M560.50 1.5v1.8" stroke="#3a3a3e" stroke-width="0.8"/><path d="M563.74 1.5v1.8" stroke="#3a3a3e" stroke-width="0.8"/><path d="M566.98 1.5v3" stroke="#505054" stroke-width="0.8"/><path d="M570.21 1.5v1.8" stroke="#3a3a3e" stroke-width="0.8"/><path d="M573.45 1.5v1.8" stroke="#3a3a3e" stroke-width="0.8"/><path d="M576.69 1.5v1.8" stroke="#3a3a3e" stroke-width="0.8"/><path d="M579.92 1.5v1.8" stroke="#3a3a3e" stroke-width="0.8"/><path d="M583.16 1.5v3" stroke="#505054" stroke-width="0.8"/><path d="M586.40 1.5v1.8" stroke="#3a3a3e" stroke-width="0.8"/><path d="M589.63 1.5v1.8" stroke="#3a3a3e" stroke-width="0.8"/><path d="M592.87 1.5v1.8" stroke="#3a3a3e" stroke-width="0.8"/><path d="M596.11 1.5v1.8" stroke="#3a3a3e" stroke-width="0.8"/><path d="M599.35 1.5v3" stroke="#505054" stroke-width="0.8"/><path d="M602.58 1.5v1.8" stroke="#3a3a3e" stroke-width="0.8"/><path d="M605.82 1.5v1.8" stroke="#3a3a3e" stroke-width="0.8"/><path d="M609.06 1.5v1.8" stroke="#3a3a3e" stroke-width="0.8"/><path d="M612.29 1.5v1.8" stroke="#3a3a3e" stroke-width="0.8"/><path d="M615.53 1.5v3" stroke="#505054" stroke-width="0.8"/><path d="M618.77 1.5v1.8" stroke="#3a3a3e" stroke-width="0.8"/><path d="M622.00 1.5v1.8" stroke="#3a3a3e" stroke-width="0.8"/><path d="M625.24 1.5v1.8" stroke="#3a3a3e" stroke-width="0.8"/><path d="M628.48 1.5v1.8" stroke="#3a3a3e" stroke-width="0.8"/><path d="M631.72 1.5v3" stroke="#505054" stroke-width="0.8"/><path d="M634.95 1.5v1.8" stroke="#3a3a3e" stroke-width="0.8"/><path d="M638.19 1.5v1.8" stroke="#3a3a3e" stroke-width="0.8"/><path d="M641.43 1.5v1.8" stroke="#3a3a3e" stroke-width="0.8"/><path d="M644.66 1.5v1.8" stroke="#3a3a3e" stroke-width="0.8"/><path d="M260 1v8M519 1v8" stroke="#6a6a6e"/></svg>
<div class="t" style="left:376px;top:314.75px;font-size:6.5px;line-height:6.5px;color:#9a9a9e;font-weight:400;font-family:'Liberation Sans', sans-serif;transform:scaleX(0.9026);transform-origin:0 0;">01:00:00:00</div>
<div class="t" style="left:635px;top:314.75px;font-size:6.5px;line-height:6.5px;color:#9a9a9e;font-weight:400;font-family:'Liberation Sans', sans-serif;transform:scaleX(0.9026);transform-origin:0 0;">01:00:14:00</div>
<div class="t" style="left:895px;top:314.75px;font-size:6.5px;line-height:6.5px;color:#9a9a9e;font-weight:400;font-family:'Liberation Sans', sans-serif;transform:scaleX(0.8881);transform-origin:0 0;">01:00:28:00</div>
<div style="left:373px;top:328px;width:646px;height:27px;background:#252529;"></div>
<div style="left:633px;top:328px;width:1px;height:194px;background:#2a2a2e;"></div>
<div style="left:892px;top:328px;width:1px;height:194px;background:#2a2a2e;"></div>
<div style="left:1019.5px;top:308px;width:4.5px;height:214px;background:#29292d;"></div>
<div style="left:236px;top:354.5px;width:137px;height:1px;background:#161618;"></div>
<div style="left:236px;top:400px;width:137px;height:1px;background:#161618;"></div>
<div style="left:236px;top:447px;width:788px;height:1.5px;background:#303034;"></div>
<div style="left:236px;top:490px;width:137px;height:1px;background:#161618;"></div>
<div style="left:236px;top:505px;width:137px;height:1px;background:#161618;"></div>
<div style="left:236px;top:368.5px;width:137px;height:1px;background:#19191c;"></div>
<div style="left:236px;top:415px;width:137px;height:1px;background:#19191c;"></div>
<div style="left:236px;top:462px;width:137px;height:1px;background:#19191c;"></div>
<div style="left:234px;top:355px;width:2px;height:92px;background:#2a6aa8;"></div>
<div style="left:234px;top:448px;width:2px;height:57px;background:#2a9a50;"></div>
<div style="left:263px;top:356px;width:17px;height:10.5px;border-radius:2px;background:#6a2a2a"></div>
<div class="t" style="left:266.5px;top:357.80px;font-size:7px;line-height:7px;color:#e8e8ec;font-weight:700;font-family:'Liberation Sans', sans-serif;transform:scaleX(1.1679);transform-origin:0 0;">V2</div>
<div style="left:242px;top:402.5px;width:17px;height:10.5px;border-radius:2px;background:#234048"></div>
<div class="t" style="left:245.5px;top:404.30px;font-size:7px;line-height:7px;color:#e8e8ec;font-weight:700;font-family:'Liberation Sans', sans-serif;transform:scaleX(1.1679);transform-origin:0 0;">V1</div>
<div style="left:263px;top:402.5px;width:17px;height:10.5px;border-radius:2px;background:#6a2a2a"></div>
<div class="t" style="left:266.5px;top:404.30px;font-size:7px;line-height:7px;color:#e8e8ec;font-weight:700;font-family:'Liberation Sans', sans-serif;transform:scaleX(1.1679);transform-origin:0 0;">V1</div>
<div class="t" style="left:269px;top:451.50px;font-size:7px;line-height:7px;color:#e8e8ec;font-weight:700;font-family:'Liberation Sans', sans-serif;transform:scaleX(1.0052);transform-origin:0 0;">A1</div>
<div style="left:242px;top:492.5px;width:17px;height:10.5px;border-radius:2px;background:#234048"></div>
<div class="t" style="left:245.5px;top:494.30px;font-size:7px;line-height:7px;color:#e8e8ec;font-weight:700;font-family:'Liberation Sans', sans-serif;transform:scaleX(1.1169);transform-origin:0 0;">A1</div>
<div style="left:263px;top:492.5px;width:17px;height:10.5px;border-radius:2px;background:#6a2a2a"></div>
<div class="t" style="left:266.5px;top:494.30px;font-size:7px;line-height:7px;color:#e8e8ec;font-weight:700;font-family:'Liberation Sans', sans-serif;transform:scaleX(1.1169);transform-origin:0 0;">A2</div>
<div style="left:287px;top:359.3px;width:6px;height:5px;background:#4a4a4e;border-radius:1px"></div>
<svg style="left:298px;top:356.3px" width="12" height="10"><path d="M3 2L0.8 5L3 8M9 2L11.2 5L9 8" stroke="#d8d8dc" fill="none" stroke-width="1"/><path d="M6 0.5v9" stroke="#d8d8dc" stroke-width="1.6"/></svg>
<div style="left:314px;top:357.8px;width:10px;height:7px;background:#8a8a8e;border-radius:1px"></div>
<div style="left:287px;top:405.8px;width:6px;height:5px;background:#4a4a4e;border-radius:1px"></div>
<svg style="left:298px;top:402.8px" width="12" height="10"><path d="M3 2L0.8 5L3 8M9 2L11.2 5L9 8" stroke="#d8d8dc" fill="none" stroke-width="1"/><path d="M6 0.5v9" stroke="#d8d8dc" stroke-width="1.6"/></svg>
<div style="left:314px;top:404.3px;width:10px;height:7px;background:#8a8a8e;border-radius:1px"></div>
<div style="left:287px;top:453px;width:6px;height:5px;background:#4a4a4e;border-radius:1px"></div>
<svg style="left:298px;top:450px" width="12" height="10"><path d="M3 2L0.8 5L3 8M9 2L11.2 5L9 8" stroke="#d8d8dc" fill="none" stroke-width="1"/><path d="M6 0.5v9" stroke="#d8d8dc" stroke-width="1.6"/></svg>
<div style="left:314.5px;top:450px;width:10px;height:10px;background:#2e2e32;border-radius:2px"></div>
<div class="t" style="left:317.0px;top:451.50px;font-size:7px;line-height:7px;color:#6a6a6e;font-weight:400;font-family:'Liberation Sans', sans-serif;transform:scaleX(1.0702);transform-origin:0 0;">S</div>
<div style="left:329px;top:450px;width:10px;height:10px;background:#2e2e32;border-radius:2px"></div>
<div class="t" style="left:331.5px;top:451.50px;font-size:7px;line-height:7px;color:#6a6a6e;font-weight:400;font-family:'Liberation Sans', sans-serif;transform:scaleX(0.8556);transform-origin:0 0;">M</div>
<div class="t" style="left:354px;top:451.50px;font-size:7px;line-height:7px;color:#6a6a6e;font-weight:400;font-family:'Liberation Sans', sans-serif;transform:scaleX(1.0273);transform-origin:0 0;">2.0</div>
<div style="left:287px;top:495.8px;width:6px;height:5px;background:#4a4a4e;border-radius:1px"></div>
<svg style="left:298px;top:492.8px" width="12" height="10"><path d="M3 2L0.8 5L3 8M9 2L11.2 5L9 8" stroke="#d8d8dc" fill="none" stroke-width="1"/><path d="M6 0.5v9" stroke="#d8d8dc" stroke-width="1.6"/></svg>
<div style="left:314.5px;top:492.8px;width:10px;height:10px;background:#2e2e32;border-radius:2px"></div>
<div class="t" style="left:317.0px;top:494.30px;font-size:7px;line-height:7px;color:#6a6a6e;font-weight:400;font-family:'Liberation Sans', sans-serif;transform:scaleX(1.0702);transform-origin:0 0;">S</div>
<div style="left:329px;top:492.8px;width:10px;height:10px;background:#2e2e32;border-radius:2px"></div>
<div class="t" style="left:331.5px;top:494.30px;font-size:7px;line-height:7px;color:#6a6a6e;font-weight:400;font-family:'Liberation Sans', sans-serif;transform:scaleX(0.8556);transform-origin:0 0;">M</div>
<div class="t" style="left:354px;top:494.30px;font-size:7px;line-height:7px;color:#6a6a6e;font-weight:400;font-family:'Liberation Sans', sans-serif;transform:scaleX(1.0273);transform-origin:0 0;">2.0</div>
<div class="t" style="left:244px;top:370.50px;font-size:7px;line-height:7px;color:#e0e0e4;font-weight:700;font-family:'Liberation Sans', sans-serif;transform:scaleX(0.9079);transform-origin:0 0;">Video 2</div>
<div class="t" style="left:244px;top:378.50px;font-size:7px;line-height:7px;color:#8a8a8e;font-weight:400;font-family:'Liberation Sans', sans-serif;transform:scaleX(0.8301);transform-origin:0 0;">17 Clips</div>
<div class="t" style="left:244px;top:417.50px;font-size:7px;line-height:7px;color:#e0e0e4;font-weight:700;font-family:'Liberation Sans', sans-serif;transform:scaleX(0.8676);transform-origin:0 0;">Video 1</div>
<div class="t" style="left:244px;top:425.50px;font-size:7px;line-height:7px;color:#8a8a8e;font-weight:400;font-family:'Liberation Sans', sans-serif;transform:scaleX(0.8377);transform-origin:0 0;">1 Clip</div>
<div class="t" style="left:244px;top:464.50px;font-size:7px;line-height:7px;color:#e0e0e4;font-weight:700;font-family:'Liberation Sans', sans-serif;transform:scaleX(0.8520);transform-origin:0 0;">The reaper</div>
<div class="t" style="left:244px;top:472.50px;font-size:7px;line-height:7px;color:#8a8a8e;font-weight:400;font-family:'Liberation Sans', sans-serif;transform:scaleX(0.8377);transform-origin:0 0;">1 Clip</div>
<div style="left:373px;top:355px;width:68px;height:45px;background:#c8bc9c;border-radius:2px"></div>
<svg style="left:373px;top:355px" width="68" height="33"><path d="M61 0H68V33Z" fill="#4e4a44"/></svg>
<div style="left:373px;top:387.5px;width:68px;height:1px;background:#a8a080;"></div>
<div class="t" style="left:396px;top:357.50px;font-size:28px;line-height:28px;color:#7e7664;font-weight:700;font-family:'Liberation Serif', serif;transform:scaleX(1.2308);transform-origin:0 0;">T</div>
<svg style="left:377px;top:390px" width="7" height="7"><path d="M3.5 0.5L6.5 3.5L3.5 6.5L0.5 3.5Z" fill="#f0f0f0"/></svg>
<div class="t" style="left:391px;top:390.50px;font-size:7px;line-height:7px;color:#f0f0f0;font-weight:400;font-family:'Liberation Sans', sans-serif;transform:scaleX(0.8748);transform-origin:0 0;">ext - Create</div>
<div style="left:483.5px;top:355px;width:109.5px;height:45px;background:#3a6ea0;border-radius:2px;border:1px solid #24507a"></div>
<svg style="left:484.5px;top:356px" width="107.5" height="31" viewBox="0 0 107.5 31" preserveAspectRatio="none"><rect width="108" height="31" fill="#9a7a5a"/><rect x="0" y="0" width="12" height="31" fill="#8a7458"/><rect x="0" y="22" width="12" height="9" fill="#7a9048"/><path d="M12 2H40V18L32 26H18L12 20Z" fill="#9c9a96"/><rect x="40" y="0" width="22" height="31" fill="#8a6a4e"/><rect x="44" y="16" width="14" height="14" fill="#a4988a"/><rect x="62" y="0" width="32" height="31" fill="#d8d8b8"/><path d="M64 6L72 22M78 4L82 24M68 12L78 8M86 6L90 20" stroke="#8a7a60" stroke-width="1.5"/><rect x="62" y="18" width="32" height="13" fill="#c8a070"/><rect x="66" y="21" width="28" height="4" fill="#5a3a28"/><rect x="76" y="20" width="10" height="10" fill="#90a050"/><rect x="94" y="0" width="14" height="31" fill="#b88e62"/><rect x="94" y="0" width="14" height="6" fill="#6a4a38"/><rect x="0" y="29.5" width="107.5" height="1.5" fill="#e0e0e0" opacity="0.25"/></svg>
<svg style="left:487.5px;top:390px" width="7" height="7"><path d="M2.5 4.5L4.5 2.5" stroke="#f0f0f0"/><rect x="0.3" y="3.2" width="3.5" height="2.6" rx="1.3" transform="rotate(-45 2 4.5)" stroke="#f0f0f0" fill="none" stroke-width="0.9"/><rect x="3.2" y="0.3" width="3.5" height="2.6" rx="1.3" transform="rotate(-45 5 1.6)" stroke="#f0f0f0" fill="none" stroke-width="0.9"/></svg>
<div style="left:594.5px;top:355px;width:45.5px;height:45px;background:#3a6ea0;border-radius:2px;border:1px solid #24507a"></div>
<svg style="left:595.5px;top:356px" width="43.5" height="31" viewBox="0 0 43.5 31" preserveAspectRatio="none"><rect width="44" height="31" fill="#8a6a50"/><rect x="0" y="0" width="44" height="8" fill="#6a4a38"/><path d="M2 8H22V24L14 30H2Z" fill="#9c9c9c"/><path d="M24 12L34 0H44V14Z" fill="#6ab0e0"/><path d="M26 30L30 8M34 30L38 10M28 14L40 4" stroke="#a08a68" stroke-width="1.5"/><rect x="22" y="18" width="22" height="13" fill="#9a7a50"/><rect x="0" y="29.5" width="43.5" height="1.5" fill="#e0e0e0" opacity="0.25"/></svg>
<svg style="left:598.5px;top:390px" width="7" height="7"><path d="M2.5 4.5L4.5 2.5" stroke="#f0f0f0"/><rect x="0.3" y="3.2" width="3.5" height="2.6" rx="1.3" transform="rotate(-45 2 4.5)" stroke="#f0f0f0" fill="none" stroke-width="0.9"/><rect x="3.2" y="0.3" width="3.5" height="2.6" rx="1.3" transform="rotate(-45 5 1.6)" stroke="#f0f0f0" fill="none" stroke-width="0.9"/></svg>
<div style="left:641.5px;top:355px;width:46.5px;height:45px;background:#3a6ea0;border-radius:2px;border:1px solid #24507a"></div>
<svg style="left:642.5px;top:356px" width="44.5" height="31" viewBox="0 0 44.5 31" preserveAspectRatio="none"><rect width="45" height="31" fill="#a08468"/><rect width="45" height="5" fill="#6a4a38"/><path d="M4 4H16V18H4Z" fill="#9a9a9a"/><path d="M16 6H32V24H16Z" fill="#a8a8a8"/><rect x="32" y="4" width="8" height="27" fill="#8a6a4e"/><rect x="38" y="6" width="7" height="8" fill="#e8e8d0"/><path d="M0 20L45 16V31H0Z" fill="#c8a478"/><circle cx="30" cy="26" r="1.5" fill="#2a1a10"/><rect x="0" y="29.5" width="44.5" height="1.5" fill="#e0e0e0" opacity="0.25"/></svg>
<svg style="left:645.5px;top:390px" width="7" height="7"><path d="M2.5 4.5L4.5 2.5" stroke="#f0f0f0"/><rect x="0.3" y="3.2" width="3.5" height="2.6" rx="1.3" transform="rotate(-45 2 4.5)" stroke="#f0f0f0" fill="none" stroke-width="0.9"/><rect x="3.2" y="0.3" width="3.5" height="2.6" rx="1.3" transform="rotate(-45 5 1.6)" stroke="#f0f0f0" fill="none" stroke-width="0.9"/></svg>
<div style="left:690px;top:355px;width:188px;height:45px;background:#3a6ea0;border-radius:2px;border:1px solid #24507a"></div>
<svg style="left:691px;top:356px" width="186" height="31" viewBox="0 0 186 31" preserveAspectRatio="none"><rect width="187" height="31" fill="#c8a878"/><path d="M0 0H55V6L20 12L0 8Z" fill="#b89868"/><path d="M10 20L50 31M0 14L40 28M20 4L55 18" stroke="#bc9c6c" stroke-width="1.5"/><circle cx="36" cy="10" r="1.6" fill="#2a1a10"/><circle cx="4" cy="26" r="1.5" fill="#2a1a10"/><rect x="55" y="0" width="132" height="26" fill="#f4e8c8"/><rect x="55" y="26" width="132" height="5" fill="#b89060"/><rect x="102" y="0" width="7" height="26" fill="#9a9a9a"/><rect x="102" y="14" width="7" height="12" fill="#c8a070"/><rect x="155" y="0" width="7" height="26" fill="#9a9a9a"/><rect x="155" y="14" width="7" height="12" fill="#c8a070"/><path d="M78 0v26M132 0v26M174 0v26" stroke="#d8ccb0" stroke-width="0.6"/><path d="M60 5h10M60 8h8M112 5h12M112 8h8M166 5h6" stroke="#b8b0a0" stroke-width="0.6"/><rect x="0" y="29.5" width="186" height="1.5" fill="#e0e0e0" opacity="0.25"/></svg>
<svg style="left:694px;top:390px" width="7" height="7"><path d="M2.5 4.5L4.5 2.5" stroke="#f0f0f0"/><rect x="0.3" y="3.2" width="3.5" height="2.6" rx="1.3" transform="rotate(-45 2 4.5)" stroke="#f0f0f0" fill="none" stroke-width="0.9"/><rect x="3.2" y="0.3" width="3.5" height="2.6" rx="1.3" transform="rotate(-45 5 1.6)" stroke="#f0f0f0" fill="none" stroke-width="0.9"/></svg>
<div style="left:879.5px;top:355px;width:104.5px;height:45px;background:#3a6ea0;border-radius:2px;border:1px solid #24507a"></div>
<svg style="left:880.5px;top:356px" width="102.5" height="31" viewBox="0 0 102.5 31" preserveAspectRatio="none"><rect width="103" height="31" fill="#a6a6a6"/><path d="M60 0H103V18L80 10Z" fill="#909090"/><path d="M0 0H40L20 14H0Z" fill="#b4b4b4"/><path d="M8 31L16 18H52V31Z" fill="#eaeaea"/><path d="M50 31L58 24L92 18L103 22V31Z" fill="#e4e4e4"/><path d="M84 22L98 20L100 26L86 28Z" fill="#909090"/><circle cx="32" cy="19" r="0.9" fill="#3a3a3a"/><circle cx="42" cy="19" r="0.9" fill="#3a3a3a"/><rect x="0" y="29.5" width="102.5" height="1.5" fill="#e0e0e0" opacity="0.25"/></svg>
<svg style="left:883.5px;top:390px" width="7" height="7"><path d="M2.5 4.5L4.5 2.5" stroke="#f0f0f0"/><rect x="0.3" y="3.2" width="3.5" height="2.6" rx="1.3" transform="rotate(-45 2 4.5)" stroke="#f0f0f0" fill="none" stroke-width="0.9"/><rect x="3.2" y="0.3" width="3.5" height="2.6" rx="1.3" transform="rotate(-45 5 1.6)" stroke="#f0f0f0" fill="none" stroke-width="0.9"/></svg>
<div style="left:985.5px;top:355px;width:33.5px;height:45px;background:#3a6ea0;border-radius:2px;border:1px solid #24507a"></div>
<svg style="left:986.5px;top:356px" width="31.5" height="31" viewBox="0 0 31.5 31" preserveAspectRatio="none"><rect width="33" height="31" fill="#9c9c9c"/><path d="M10 0H33V31H22Z" fill="#e8e8e8"/><rect x="0" y="29.5" width="31.5" height="1.5" fill="#e0e0e0" opacity="0.25"/></svg>
<svg style="left:989.5px;top:390px" width="7" height="7"><path d="M2.5 4.5L4.5 2.5" stroke="#f0f0f0"/><rect x="0.3" y="3.2" width="3.5" height="2.6" rx="1.3" transform="rotate(-45 2 4.5)" stroke="#f0f0f0" fill="none" stroke-width="0.9"/><rect x="3.2" y="0.3" width="3.5" height="2.6" rx="1.3" transform="rotate(-45 5 1.6)" stroke="#f0f0f0" fill="none" stroke-width="0.9"/></svg>
<div class="t" style="left:608px;top:390.50px;font-size:7px;line-height:7px;color:#f0f0f0;font-weight:400;font-family:'Liberation Sans', sans-serif;transform:scaleX(0.7798);transform-origin:0 0;">2025-11-...</div>
<div class="t" style="left:655px;top:390.50px;font-size:7px;line-height:7px;color:#f0f0f0;font-weight:400;font-family:'Liberation Sans', sans-serif;transform:scaleX(0.7798);transform-origin:0 0;">2025-11-...</div>
<div class="t" style="left:703.5px;top:390.50px;font-size:7px;line-height:7px;color:#f0f0f0;font-weight:400;font-family:'Liberation Sans', sans-serif;transform:scaleX(0.8622);transform-origin:0 0;">2025-11-04 23-12-50.mkv</div>
<div class="t" style="left:893.5px;top:390.50px;font-size:7px;line-height:7px;color:#f0f0f0;font-weight:400;font-family:'Liberation Sans', sans-serif;transform:scaleX(0.8622);transform-origin:0 0;">2025-11-04 23-13-46.mkv</div>
<div class="t" style="left:999px;top:390.50px;font-size:7px;line-height:7px;color:#f0f0f0;font-weight:400;font-family:'Liberation Sans', sans-serif;transform:scaleX(0.8564);transform-origin:0 0;">202...</div>
<div class="t" style="left:497px;top:390.50px;font-size:7px;line-height:7px;color:#f0f0f0;font-weight:400;font-family:'Liberation Sans', sans-serif;transform:scaleX(0.8678);transform-origin:0 0;">2025-11-04 23-11-32.mkv</div>
<div style="left:411px;top:401px;width:71px;height:46px;background:#3a6ea0;border-radius:2px;border:1px solid #24507a"></div>
<svg style="left:412px;top:402px" width="69" height="31"><rect width="69" height="31" fill="#a88850"/><rect width="69" height="12" fill="#80b8d8"/><path d="M0 12Q20 8 40 14T69 10V20H0Z" fill="#b89a60"/><rect x="22" y="0" width="4" height="24" fill="#8a6a48"/><rect x="56" y="0" width="5" height="26" fill="#8a6a48"/><path d="M30 4L36 16M42 2L44 18M6 6L14 18M48 8L54 4" stroke="#9a7a58" stroke-width="1.5"/><rect x="0" y="22" width="69" height="9" fill="#b08040"/><circle cx="18" cy="26" r="4" fill="#90a040"/><rect x="34" y="28" width="10" height="1.5" fill="#f0f0f0"/><rect x="60" y="28" width="3" height="2" fill="#f0f0f0"/></svg>
<div class="t" style="left:424px;top:436.50px;font-size:7px;line-height:7px;color:#f0f0f0;font-weight:400;font-family:'Liberation Sans', sans-serif;transform:scaleX(0.8601);transform-origin:0 0;">2025-11-04 23-11-...</div>
<svg style="left:414px;top:437px" width="7" height="7"><path d="M2.5 4.5L4.5 2.5" stroke="#f0f0f0"/><rect x="0.3" y="3.2" width="3.5" height="2.6" rx="1.3" transform="rotate(-45 2 4.5)" stroke="#f0f0f0" fill="none" stroke-width="0.9"/><rect x="3.2" y="0.3" width="3.5" height="2.6" rx="1.3" transform="rotate(-45 5 1.6)" stroke="#f0f0f0" fill="none" stroke-width="0.9"/></svg>
<div style="left:373px;top:447.5px;width:646.5px;height:43px;background:#3e9a5e;border:1.5px solid #8a3228;border-top-width:2px;border-bottom-width:2px;border-right:none;border-radius:2px 0 0 2px"></div>
<svg style="left:0;top:0" width="1024" height="550"><polygon points="379.0,457.4 380.5,457.1 382.0,457.2 383.5,458.4 384.9,456.9 386.4,455.5 387.9,457.6 389.4,457.5 390.9,458.4 392.4,458.0 393.9,457.2 395.3,457.1 396.8,457.4 398.3,458.4 399.8,458.1 401.3,456.8 402.8,457.9 404.3,457.5 405.7,458.1 407.2,457.3 408.7,457.0 410.2,457.8 411.7,456.7 413.2,457.9 414.7,458.4 416.2,457.9 417.6,457.1 419.1,457.9 420.6,455.8 422.1,455.3 423.6,457.2 425.1,458.4 426.6,457.8 428.0,456.9 429.5,458.1 431.0,458.1 432.5,456.9 434.0,457.8 435.5,457.6 437.0,458.2 438.4,457.1 439.9,458.3 441.4,458.3 442.9,457.4 444.4,457.9 445.9,457.5 447.4,457.9 448.8,458.3 450.3,457.3 451.8,456.6 453.3,456.8 454.8,457.8 456.3,457.4 457.8,457.7 459.2,458.3 460.7,458.3 462.2,457.1 463.7,457.2 465.2,457.4 466.7,458.2 468.2,458.2 469.6,457.9 471.1,456.8 472.6,456.8 474.1,457.6 475.6,457.6 477.1,457.8 478.6,457.8 480.1,456.9 481.5,457.6 483.0,452.0 484.5,450.5 486.0,451.4 487.5,453.5 489.0,453.7 490.5,454.4 491.9,454.6 493.4,453.5 494.9,454.6 496.4,453.8 497.9,455.2 499.4,454.6 500.9,454.2 502.3,453.8 503.8,454.4 505.3,453.6 506.8,454.4 508.3,453.3 509.8,453.1 511.3,454.1 512.7,454.8 514.2,453.1 515.7,453.7 517.2,453.6 518.7,453.5 520.2,453.7 521.7,453.8 523.1,453.8 524.6,455.1 526.1,454.2 527.6,454.7 529.1,451.3 530.6,454.2 532.1,452.6 533.5,454.5 535.0,452.3 536.5,454.2 538.0,453.9 539.5,454.7 541.0,455.2 542.5,454.6 544.0,454.9 545.4,451.9 546.9,451.4 548.4,454.0 549.9,453.9 551.4,453.4 552.9,453.4 554.4,451.9 555.8,453.9 557.3,453.1 558.8,453.9 560.3,450.7 561.8,455.0 563.3,451.3 564.8,453.8 566.2,454.4 567.7,454.7 569.2,453.1 570.7,453.1 572.2,453.9 573.7,453.0 575.2,454.3 576.6,453.0 578.1,454.6 579.6,454.9 581.1,454.2 582.6,453.5 584.1,455.2 585.6,454.6 587.0,453.5 588.5,454.6 590.0,453.0 591.5,453.9 593.0,453.8 594.5,451.1 596.0,453.5 597.4,454.0 598.9,454.5 600.4,454.2 601.9,453.6 603.4,455.1 604.9,454.2 606.4,453.2 607.9,455.2 609.3,454.3 610.8,453.6 612.3,454.1 613.8,454.4 615.3,453.3 616.8,454.5 618.3,455.1 619.7,453.7 621.2,454.6 622.7,450.7 624.2,454.1 625.7,454.1 627.2,454.9 628.7,450.9 630.1,454.7 631.6,453.5 633.1,455.1 634.6,453.0 636.1,451.2 637.6,453.3 639.1,453.8 640.5,451.1 642.0,454.6 643.5,454.9 645.0,454.3 646.5,451.3 648.0,455.0 649.5,452.5 650.9,453.9 652.4,450.8 653.9,454.3 655.4,453.9 656.9,453.1 658.4,455.1 659.9,454.9 661.3,454.1 662.8,454.0 664.3,454.6 665.8,454.6 667.3,451.6 668.8,454.7 670.3,453.6 671.8,453.6 673.2,455.0 674.7,452.5 676.2,453.9 677.7,453.3 679.2,454.5 680.7,455.1 682.2,455.1 683.6,453.1 685.1,452.2 686.6,453.1 688.1,450.9 689.6,453.8 691.1,454.7 692.6,453.8 694.0,451.9 695.5,453.4 697.0,453.4 698.5,453.3 700.0,453.9 701.5,453.6 703.0,452.5 704.4,452.3 705.9,453.2 707.4,451.0 708.9,454.2 710.4,453.8 711.9,451.7 713.4,454.9 714.8,454.4 716.3,453.3 717.8,454.6 719.3,454.8 720.8,454.7 722.3,455.1 723.8,454.4 725.2,453.7 726.7,454.2 728.2,454.9 729.7,454.6 731.2,453.6 732.7,452.3 734.2,452.2 735.7,454.3 737.1,454.4 738.6,454.2 740.1,453.6 741.6,454.8 743.1,453.7 744.6,453.8 746.1,450.6 747.5,455.1 749.0,451.8 750.5,454.0 752.0,454.1 753.5,452.5 755.0,453.2 756.5,450.6 757.9,452.2 759.4,451.8 760.9,454.6 762.4,452.0 763.9,455.1 765.4,454.8 766.9,454.3 768.3,455.0 769.8,455.0 771.3,453.2 772.8,453.3 774.3,455.2 775.8,454.1 777.3,454.4 778.7,453.6 780.2,454.5 781.7,453.4 783.2,454.9 784.7,455.0 786.2,453.4 787.7,452.4 789.1,452.2 790.6,454.3 792.1,452.2 793.6,451.2 795.1,454.8 796.6,451.9 798.1,454.3 799.6,453.5 801.0,453.2 802.5,453.5 804.0,454.2 805.5,453.8 807.0,453.6 808.5,454.6 810.0,451.9 811.4,455.1 812.9,454.6 814.4,452.1 815.9,453.5 817.4,452.6 818.9,454.9 820.4,453.3 821.8,453.9 823.3,454.3 824.8,452.0 826.3,453.9 827.8,451.1 829.3,454.0 830.8,453.6 832.2,453.1 833.7,454.9 835.2,453.2 836.7,454.2 838.2,453.5 839.7,454.0 841.2,451.4 842.6,453.4 844.1,455.1 845.6,455.1 847.1,454.1 848.6,454.3 850.1,454.6 851.6,454.0 853.0,453.5 854.5,454.4 856.0,453.0 857.5,453.3 859.0,451.8 860.5,453.4 862.0,455.1 863.5,455.0 864.9,453.2 866.4,453.4 867.9,453.7 869.4,453.8 870.9,451.9 872.4,454.1 873.9,454.8 875.3,452.0 876.8,454.5 878.3,454.2 879.8,454.3 881.3,453.4 882.8,453.7 884.3,454.0 885.7,454.4 887.2,453.7 888.7,452.1 890.2,455.0 891.7,453.9 893.2,453.6 894.7,453.2 896.1,451.1 897.6,453.5 899.1,453.1 900.6,453.7 902.1,453.6 903.6,454.7 905.1,453.2 906.5,453.1 908.0,451.8 909.5,454.3 911.0,453.8 912.5,453.2 914.0,451.8 915.5,453.7 916.9,453.6 918.4,453.2 919.9,454.5 921.4,453.8 922.9,454.8 924.4,453.5 925.9,455.1 927.4,453.4 928.8,453.6 930.3,454.3 931.8,453.2 933.3,454.6 934.8,453.1 936.3,452.6 937.8,454.0 939.2,454.8 940.7,453.9 942.2,453.7 943.7,455.1 945.2,453.4 946.7,454.5 948.2,453.8 949.6,454.7 951.1,453.4 952.6,455.0 954.1,452.4 955.6,454.9 957.1,455.0 958.6,453.6 960.0,453.4 961.5,453.2 963.0,453.8 964.5,452.5 966.0,455.1 967.5,454.4 969.0,453.7 970.4,455.0 971.9,454.0 973.4,454.9 974.9,454.4 976.4,454.1 977.9,450.6 979.4,453.5 980.8,452.0 982.3,454.1 983.8,453.6 985.3,454.4 986.8,454.1 988.3,453.5 989.8,454.5 991.3,453.3 992.7,455.1 994.2,454.7 995.7,455.0 997.2,455.0 998.7,453.0 1000.2,454.4 1001.7,455.0 1003.1,450.9 1004.6,453.5 1006.1,455.2 1007.6,454.2 1009.1,451.6 1010.6,454.7 1012.1,454.2 1013.5,455.0 1015.0,453.1 1016.5,451.6 1018.0,454.3 1018.0,469.3 1016.5,471.9 1015.0,470.5 1013.5,468.6 1012.1,469.4 1010.6,468.9 1009.1,471.9 1007.6,469.4 1006.1,468.5 1004.6,470.1 1003.1,472.5 1001.7,468.7 1000.2,469.3 998.7,470.5 997.2,468.7 995.7,468.6 994.2,469.0 992.7,468.6 991.3,470.2 989.8,469.1 988.3,470.1 986.8,469.5 985.3,469.3 983.8,470.0 982.3,469.5 980.8,471.5 979.4,470.0 977.9,472.8 976.4,469.5 974.9,469.2 973.4,468.7 971.9,469.6 970.4,468.6 969.0,469.9 967.5,469.2 966.0,468.6 964.5,471.1 963.0,469.8 961.5,470.4 960.0,470.1 958.6,470.0 957.1,468.7 955.6,468.8 954.1,471.2 952.6,468.7 951.1,470.2 949.6,468.9 948.2,469.8 946.7,469.1 945.2,470.2 943.7,468.6 942.2,469.9 940.7,469.7 939.2,468.8 937.8,469.6 936.3,470.9 934.8,470.5 933.3,469.0 931.8,470.4 930.3,469.3 928.8,470.0 927.4,470.2 925.9,468.6 924.4,470.1 922.9,468.8 921.4,469.8 919.9,469.1 918.4,470.3 916.9,470.0 915.5,469.9 914.0,471.6 912.5,470.4 911.0,469.8 909.5,469.3 908.0,471.7 906.5,470.5 905.1,470.3 903.6,468.9 902.1,470.0 900.6,469.9 899.1,470.5 897.6,470.0 896.1,472.3 894.7,470.4 893.2,470.0 891.7,469.7 890.2,468.6 888.7,471.4 887.2,469.9 885.7,469.2 884.3,469.6 882.8,469.9 881.3,470.2 879.8,469.3 878.3,469.5 876.8,469.1 875.3,471.5 873.9,468.8 872.4,469.5 870.9,471.6 869.4,469.8 867.9,469.9 866.4,470.1 864.9,470.3 863.5,468.7 862.0,468.5 860.5,470.2 859.0,471.7 857.5,470.2 856.0,470.5 854.5,469.2 853.0,470.0 851.6,469.6 850.1,469.0 848.6,469.3 847.1,469.5 845.6,468.5 844.1,468.6 842.6,470.2 841.2,472.1 839.7,469.6 838.2,470.1 836.7,469.4 835.2,470.4 833.7,468.7 832.2,470.4 830.8,469.9 829.3,469.6 827.8,472.4 826.3,469.7 824.8,471.5 823.3,469.4 821.8,469.7 820.4,470.3 818.9,468.7 817.4,470.9 815.9,470.1 814.4,471.4 812.9,469.0 811.4,468.6 810.0,471.6 808.5,469.0 807.0,470.0 805.5,469.8 804.0,469.4 802.5,470.0 801.0,470.3 799.6,470.0 798.1,469.3 796.6,471.6 795.1,468.9 793.6,472.3 792.1,471.3 790.6,469.4 789.1,471.3 787.7,471.1 786.2,470.2 784.7,468.6 783.2,468.7 781.7,470.2 780.2,469.1 778.7,470.0 777.3,469.2 775.8,469.5 774.3,468.5 772.8,470.3 771.3,470.4 769.8,468.7 768.3,468.6 766.9,469.3 765.4,468.8 763.9,468.5 762.4,471.5 760.9,469.0 759.4,471.7 757.9,471.3 756.5,472.8 755.0,470.3 753.5,471.0 752.0,469.5 750.5,469.6 749.0,471.7 747.5,468.6 746.1,472.9 744.6,469.8 743.1,469.9 741.6,468.8 740.1,470.0 738.6,469.4 737.1,469.2 735.7,469.3 734.2,471.3 732.7,471.3 731.2,470.0 729.7,469.1 728.2,468.7 726.7,469.4 725.2,469.9 723.8,469.2 722.3,468.5 720.8,469.0 719.3,468.8 717.8,469.0 716.3,470.3 714.8,469.2 713.4,468.8 711.9,471.8 710.4,469.8 708.9,469.4 707.4,472.4 705.9,470.3 704.4,471.3 703.0,471.0 701.5,470.0 700.0,469.7 698.5,470.2 697.0,470.1 695.5,470.2 694.0,471.6 692.6,469.7 691.1,469.0 689.6,469.8 688.1,472.6 686.6,470.5 685.1,471.3 683.6,470.4 682.2,468.6 680.7,468.5 679.2,469.1 677.7,470.3 676.2,469.7 674.7,471.0 673.2,468.6 671.8,470.0 670.3,470.0 668.8,468.9 667.3,471.9 665.8,469.0 664.3,469.0 662.8,469.6 661.3,469.5 659.9,468.8 658.4,468.6 656.9,470.4 655.4,469.7 653.9,469.4 652.4,472.7 650.9,469.7 649.5,471.0 648.0,468.7 646.5,472.1 645.0,469.3 643.5,468.8 642.0,469.1 640.5,472.3 639.1,469.8 637.6,470.2 636.1,472.3 634.6,470.5 633.1,468.5 631.6,470.1 630.1,468.9 628.7,472.5 627.2,468.8 625.7,469.5 624.2,469.5 622.7,472.7 621.2,469.1 619.7,469.9 618.3,468.6 616.8,469.1 615.3,470.2 613.8,469.3 612.3,469.5 610.8,469.9 609.3,469.4 607.9,468.5 606.4,470.3 604.9,469.4 603.4,468.5 601.9,470.0 600.4,469.4 598.9,469.1 597.4,469.6 596.0,470.0 594.5,472.4 593.0,469.8 591.5,469.7 590.0,470.5 588.5,469.0 587.0,470.1 585.6,469.0 584.1,468.5 582.6,470.1 581.1,469.4 579.6,468.7 578.1,469.1 576.6,470.5 575.2,469.3 573.7,470.5 572.2,469.7 570.7,470.5 569.2,470.5 567.7,468.9 566.2,469.2 564.8,469.8 563.3,472.1 561.8,468.7 560.3,472.7 558.8,469.7 557.3,470.5 555.8,469.7 554.4,471.6 552.9,470.2 551.4,470.2 549.9,469.7 548.4,469.6 546.9,472.1 545.4,471.6 544.0,468.7 542.5,469.0 541.0,468.5 539.5,469.0 538.0,469.7 536.5,469.4 535.0,471.2 533.5,469.1 532.1,470.9 530.6,469.4 529.1,472.2 527.6,468.9 526.1,469.4 524.6,468.5 523.1,469.8 521.7,469.8 520.2,469.9 518.7,470.1 517.2,470.0 515.7,469.9 514.2,470.4 512.7,468.8 511.3,469.5 509.8,470.5 508.3,470.3 506.8,469.2 505.3,470.0 503.8,469.2 502.3,469.8 500.9,469.4 499.4,469.0 497.9,468.5 496.4,469.8 494.9,469.1 493.4,470.1 491.9,469.0 490.5,469.2 489.0,469.8 487.5,470.1 486.0,472.1 484.5,472.9 483.0,471.5 481.5,466.2 480.1,466.9 478.6,466.0 477.1,466.0 475.6,466.1 474.1,466.2 472.6,466.9 471.1,466.9 469.6,465.9 468.2,465.6 466.7,465.6 465.2,466.4 463.7,466.5 462.2,466.7 460.7,465.5 459.2,465.5 457.8,466.1 456.3,466.3 454.8,466.0 453.3,466.9 451.8,467.1 450.3,466.5 448.8,465.5 447.4,465.9 445.9,466.2 444.4,465.9 442.9,466.3 441.4,465.6 439.9,465.5 438.4,466.6 437.0,465.6 435.5,466.2 434.0,465.9 432.5,466.8 431.0,465.7 429.5,465.7 428.0,466.9 426.6,466.0 425.1,465.4 423.6,466.6 422.1,468.3 420.6,467.9 419.1,465.9 417.6,466.7 416.2,465.9 414.7,465.4 413.2,465.9 411.7,467.1 410.2,466.0 408.7,466.8 407.2,466.5 405.7,465.7 404.3,466.2 402.8,465.9 401.3,466.9 399.8,465.7 398.3,465.4 396.8,466.4 395.3,466.6 393.9,466.6 392.4,465.8 390.9,465.4 389.4,466.2 387.9,466.1 386.4,468.2 384.9,466.9 383.5,465.5 382.0,466.5 380.5,466.6 379.0,466.4" fill="#e2f0e6"/></svg>
<div style="left:379px;top:461.8px;width:639px;height:0.8px;background:#b8ccc0;"></div>
<div style="left:374.6px;top:477px;width:643px;height:0.8px;background:#52a872;"></div>
<div class="t" style="left:375px;top:481.00px;font-size:7px;line-height:7px;color:#eef4f0;font-weight:400;font-family:'Liberation Sans', sans-serif;transform:scaleX(0.8863);transform-origin:0 0;">darren-curtis-pay-the-reaper.wav</div>
<svg style="left:532px;top:470px" width="6" height="7"><path d="M0.5 0.5h5v4L3 6.5L0.5 4.5Z" fill="#8a2ae0"/></svg>
<svg style="left:584px;top:470px" width="6" height="7"><path d="M0.5 0.5h5v4L3 6.5L0.5 4.5Z" fill="#8a2ae0"/></svg>
<svg style="left:636px;top:470px" width="6" height="7"><path d="M0.5 0.5h5v4L3 6.5L0.5 4.5Z" fill="#8a2ae0"/></svg>
<svg style="left:688.5px;top:470px" width="6" height="7"><path d="M0.5 0.5h5v4L3 6.5L0.5 4.5Z" fill="#8a2ae0"/></svg>
<svg style="left:740px;top:470px" width="6" height="7"><path d="M0.5 0.5h5v4L3 6.5L0.5 4.5Z" fill="#8a2ae0"/></svg>
<svg style="left:792px;top:470px" width="6" height="7"><path d="M0.5 0.5h5v4L3 6.5L0.5 4.5Z" fill="#8a2ae0"/></svg>
<svg style="left:844px;top:470px" width="6" height="7"><path d="M0.5 0.5h5v4L3 6.5L0.5 4.5Z" fill="#8a2ae0"/></svg>
<svg style="left:870.5px;top:470px" width="6" height="7"><path d="M0.5 0.5h5v4L3 6.5L0.5 4.5Z" fill="#8a2ae0"/></svg>
<svg style="left:896px;top:470px" width="6" height="7"><path d="M0.5 0.5h5v4L3 6.5L0.5 4.5Z" fill="#8a2ae0"/></svg>
<svg style="left:948px;top:470px" width="6" height="7"><path d="M0.5 0.5h5v4L3 6.5L0.5 4.5Z" fill="#8a2ae0"/></svg>
<svg style="left:1000px;top:470px" width="6" height="7"><path d="M0.5 0.5h5v4L3 6.5L0.5 4.5Z" fill="#8a2ae0"/></svg>
<div style="left:411px;top:491.5px;width:71px;height:13px;background:#3a9058;border-radius:2px"></div>
<svg style="left:415px;top:494.5px" width="7" height="7"><path d="M2.5 4.5L4.5 2.5" stroke="#f0f0f0"/><rect x="0.3" y="3.2" width="3.5" height="2.6" rx="1.3" transform="rotate(-45 2 4.5)" stroke="#f0f0f0" fill="none" stroke-width="0.9"/><rect x="3.2" y="0.3" width="3.5" height="2.6" rx="1.3" transform="rotate(-45 5 1.6)" stroke="#f0f0f0" fill="none" stroke-width="0.9"/></svg>
<div class="t" style="left:424.5px;top:494.50px;font-size:7px;line-height:7px;color:#eef4f0;font-weight:400;font-family:'Liberation Sans', sans-serif;transform:scaleX(0.8601);transform-origin:0 0;">2025-11-04 23-11-...</div>
<div style="left:483.5px;top:491.5px;width:109.5px;height:13px;background:#3a9058;border-radius:2px"></div>
<svg style="left:487.5px;top:494.5px" width="7" height="7"><path d="M2.5 4.5L4.5 2.5" stroke="#f0f0f0"/><rect x="0.3" y="3.2" width="3.5" height="2.6" rx="1.3" transform="rotate(-45 2 4.5)" stroke="#f0f0f0" fill="none" stroke-width="0.9"/><rect x="3.2" y="0.3" width="3.5" height="2.6" rx="1.3" transform="rotate(-45 5 1.6)" stroke="#f0f0f0" fill="none" stroke-width="0.9"/></svg>
<div class="t" style="left:497.0px;top:494.50px;font-size:7px;line-height:7px;color:#eef4f0;font-weight:400;font-family:'Liberation Sans', sans-serif;transform:scaleX(0.8678);transform-origin:0 0;">2025-11-04 23-11-32.mkv</div>
<div style="left:594.5px;top:491.5px;width:45.5px;height:13px;background:#3a9058;border-radius:2px"></div>
<svg style="left:598.5px;top:494.5px" width="7" height="7"><path d="M2.5 4.5L4.5 2.5" stroke="#f0f0f0"/><rect x="0.3" y="3.2" width="3.5" height="2.6" rx="1.3" transform="rotate(-45 2 4.5)" stroke="#f0f0f0" fill="none" stroke-width="0.9"/><rect x="3.2" y="0.3" width="3.5" height="2.6" rx="1.3" transform="rotate(-45 5 1.6)" stroke="#f0f0f0" fill="none" stroke-width="0.9"/></svg>
<div class="t" style="left:608.0px;top:494.50px;font-size:7px;line-height:7px;color:#eef4f0;font-weight:400;font-family:'Liberation Sans', sans-serif;transform:scaleX(0.7798);transform-origin:0 0;">2025-11-...</div>
<div style="left:641.5px;top:491.5px;width:46.5px;height:13px;background:#3a9058;border-radius:2px"></div>
<svg style="left:645.5px;top:494.5px" width="7" height="7"><path d="M2.5 4.5L4.5 2.5" stroke="#f0f0f0"/><rect x="0.3" y="3.2" width="3.5" height="2.6" rx="1.3" transform="rotate(-45 2 4.5)" stroke="#f0f0f0" fill="none" stroke-width="0.9"/><rect x="3.2" y="0.3" width="3.5" height="2.6" rx="1.3" transform="rotate(-45 5 1.6)" stroke="#f0f0f0" fill="none" stroke-width="0.9"/></svg>
<div class="t" style="left:655.0px;top:494.50px;font-size:7px;line-height:7px;color:#eef4f0;font-weight:400;font-family:'Liberation Sans', sans-serif;transform:scaleX(0.7798);transform-origin:0 0;">2025-11-...</div>
<div style="left:690px;top:491.5px;width:188px;height:13px;background:#3a9058;border-radius:2px"></div>
<svg style="left:694px;top:494.5px" width="7" height="7"><path d="M2.5 4.5L4.5 2.5" stroke="#f0f0f0"/><rect x="0.3" y="3.2" width="3.5" height="2.6" rx="1.3" transform="rotate(-45 2 4.5)" stroke="#f0f0f0" fill="none" stroke-width="0.9"/><rect x="3.2" y="0.3" width="3.5" height="2.6" rx="1.3" transform="rotate(-45 5 1.6)" stroke="#f0f0f0" fill="none" stroke-width="0.9"/></svg>
<div class="t" style="left:703.5px;top:494.50px;font-size:7px;line-height:7px;color:#eef4f0;font-weight:400;font-family:'Liberation Sans', sans-serif;transform:scaleX(0.8622);transform-origin:0 0;">2025-11-04 23-12-50.mkv</div>
<div style="left:879.5px;top:491.5px;width:104.5px;height:13px;background:#3a9058;border-radius:2px"></div>
<svg style="left:883.5px;top:494.5px" width="7" height="7"><path d="M2.5 4.5L4.5 2.5" stroke="#f0f0f0"/><rect x="0.3" y="3.2" width="3.5" height="2.6" rx="1.3" transform="rotate(-45 2 4.5)" stroke="#f0f0f0" fill="none" stroke-width="0.9"/><rect x="3.2" y="0.3" width="3.5" height="2.6" rx="1.3" transform="rotate(-45 5 1.6)" stroke="#f0f0f0" fill="none" stroke-width="0.9"/></svg>
<div class="t" style="left:893.0px;top:494.50px;font-size:7px;line-height:7px;color:#eef4f0;font-weight:400;font-family:'Liberation Sans', sans-serif;transform:scaleX(0.8622);transform-origin:0 0;">2025-11-04 23-13-46.mkv</div>
<div style="left:985.5px;top:491.5px;width:33.5px;height:13px;background:#3a9058;border-radius:2px"></div>
<svg style="left:989.5px;top:494.5px" width="7" height="7"><path d="M2.5 4.5L4.5 2.5" stroke="#f0f0f0"/><rect x="0.3" y="3.2" width="3.5" height="2.6" rx="1.3" transform="rotate(-45 2 4.5)" stroke="#f0f0f0" fill="none" stroke-width="0.9"/><rect x="3.2" y="0.3" width="3.5" height="2.6" rx="1.3" transform="rotate(-45 5 1.6)" stroke="#f0f0f0" fill="none" stroke-width="0.9"/></svg>
<div class="t" style="left:999.0px;top:494.50px;font-size:7px;line-height:7px;color:#eef4f0;font-weight:400;font-family:'Liberation Sans', sans-serif;transform:scaleX(0.8564);transform-origin:0 0;">202...</div>
<svg style="left:385px;top:308px" width="10" height="9"><path d="M0.5 0.5h9v4L5 8.5L0.5 4.5Z" fill="#e04030"/></svg>
<div style="left:389.5px;top:314px;width:1.3px;height:208px;background:#d8403a;"></div>
<div style="left:373px;top:520px;width:646px;height:4px;background:#1e1e22;"></div>
<div style="left:373px;top:520.5px;width:168px;height:3px;border-radius:1.5px;background:#5e5e64"></div>
<div style="left:0px;top:525.5px;width:1024px;height:24.5px;background:#161619;"></div>
<svg style="left:23px;top:534px" width="11" height="10"><circle cx="5.5" cy="2.3" r="2.2" fill="#f0f0f0"/><circle cx="2.3" cy="7.5" r="2.2" fill="#f0f0f0"/><circle cx="8.7" cy="7.5" r="2.2" fill="#f0f0f0"/></svg>
<div class="t" style="left:37.5px;top:534.75px;font-size:8.5px;line-height:8.5px;color:#e8e8ec;font-weight:700;font-family:'Liberation Sans', sans-serif;transform:scaleX(0.8289);transform-origin:0 0;">DaVinci Resolve 20</div>
<div style="left:416px;top:525.5px;width:64px;height:24.5px;background:#000000;"></div>
<div class="t" style="left:309.7px;top:540.55px;font-size:7.5px;line-height:7.5px;color:#8a8a8e;font-weight:400;font-family:'Liberation Sans', sans-serif;transform:scaleX(0.9933);transform-origin:0 0;">Media</div>
<div class="t" style="left:377.7px;top:540.55px;font-size:7.5px;line-height:7.5px;color:#8a8a8e;font-weight:400;font-family:'Liberation Sans', sans-serif;transform:scaleX(1.0024);transform-origin:0 0;">Cut</div>
<div class="t" style="left:441.6px;top:540.55px;font-size:7.5px;line-height:7.5px;color:#f0f0f4;font-weight:700;font-family:'Liberation Sans', sans-serif;transform:scaleX(0.9103);transform-origin:0 0;">Edit</div>
<div class="t" style="left:501.6px;top:540.55px;font-size:7.5px;line-height:7.5px;color:#8a8a8e;font-weight:400;font-family:'Liberation Sans', sans-serif;transform:scaleX(0.9371);transform-origin:0 0;">Fusion</div>
<div class="t" style="left:567px;top:540.55px;font-size:7.5px;line-height:7.5px;color:#8a8a8e;font-weight:400;font-family:'Liberation Sans', sans-serif;transform:scaleX(0.9868);transform-origin:0 0;">Color</div>
<div class="t" style="left:626.6px;top:540.55px;font-size:7.5px;line-height:7.5px;color:#8a8a8e;font-weight:400;font-family:'Liberation Sans', sans-serif;transform:scaleX(0.9780);transform-origin:0 0;">Fairlight</div>
<div class="t" style="left:692.6px;top:540.55px;font-size:7.5px;line-height:7.5px;color:#8a8a8e;font-weight:400;font-family:'Liberation Sans', sans-serif;transform:scaleX(0.9596);transform-origin:0 0;">Deliver</div>
<div style="left:316px;top:530px;width:9px;height:7px;border:1px solid #5a5a5e;border-radius:1px"></div>
<svg style="left:378px;top:530px" width="12" height="7"><path d="M2 0.5h9.5L10 6.5H0.5Z" stroke="#5a5a5e" fill="none"/></svg>
<svg style="left:443px;top:529px" width="10" height="10"><rect x="0" y="1" width="10" height="2.2" fill="#4aa0e0"/><rect x="0" y="4" width="10" height="2.2" fill="#4aa0e0"/><rect x="0" y="7" width="10" height="2.2" fill="#40b060"/><path d="M5 0v10" stroke="#e04040" stroke-width="1"/></svg>
<svg style="left:508px;top:529px" width="9" height="10"><path d="M1 9L7 2" stroke="#6a6a6e" stroke-width="1.5"/><circle cx="8" cy="1" r="0.8" fill="#6a6a6e"/></svg>
<svg style="left:571px;top:529px" width="10" height="10"><circle cx="5" cy="5" r="4" stroke="#6a6a6e" fill="none" stroke-dasharray="1.2 1.2"/></svg>
<svg style="left:635px;top:529px" width="9" height="10"><path d="M3 8V1.5L8 0.5V7" stroke="#8a8a8e" fill="none"/><circle cx="2" cy="8" r="1.6" fill="#8a8a8e"/><circle cx="7" cy="7" r="1.6" fill="#8a8a8e"/></svg>
<svg style="left:699px;top:529px" width="10" height="10"><path d="M1 9L3 5L8 1L6 6Z" stroke="#5a5a5e" fill="none"/></svg>
<svg style="left:976.5px;top:534.5px" width="8" height="8"><path d="M0.3 3.8L4 0.3L7.7 3.8V7.7H5V5.5H3V7.7H0.3Z" fill="#b4b4b8"/></svg>
<svg style="left:1001.5px;top:533.5px" width="10" height="10"><circle cx="5" cy="5" r="2.9" stroke="#b8b8bc" stroke-width="2" fill="none"/><rect x="4.1" y="0.3" width="1.8" height="2.4" fill="#b8b8bc" transform="rotate(0 5 5)"/><rect x="4.1" y="0.3" width="1.8" height="2.4" fill="#b8b8bc" transform="rotate(45 5 5)"/><rect x="4.1" y="0.3" width="1.8" height="2.4" fill="#b8b8bc" transform="rotate(90 5 5)"/><rect x="4.1" y="0.3" width="1.8" height="2.4" fill="#b8b8bc" transform="rotate(135 5 5)"/><rect x="4.1" y="0.3" width="1.8" height="2.4" fill="#b8b8bc" transform="rotate(180 5 5)"/><rect x="4.1" y="0.3" width="1.8" height="2.4" fill="#b8b8bc" transform="rotate(225 5 5)"/><rect x="4.1" y="0.3" width="1.8" height="2.4" fill="#b8b8bc" transform="rotate(270 5 5)"/><rect x="4.1" y="0.3" width="1.8" height="2.4" fill="#b8b8bc" transform="rotate(315 5 5)"/></svg>
<svg style="left:267px;top:63px;overflow:hidden" width="330" height="185" viewBox="0 0 330 185"><defs><linearGradient id="haze" x1="0" y1="0" x2="0" y2="1"><stop offset="0" stop-color="#90cce4" stop-opacity="0"/><stop offset="1" stop-color="#98c8d8" stop-opacity="0.9"/></linearGradient></defs><rect x="0" y="130" width="330" height="40" fill="url(#haze)"/><path d="M73 118L95 112L101 121L101 177L78 178L73 170Z" fill="#a6a4a6"/><path d="M72 121L80 118L79 150L72 153Z" fill="#7a5a3c"/><path d="M100 121L119 122L118 154L100 156Z" fill="#8a6848"/><path d="M106 132L114 131L113 144L107 145Z" fill="#b8b6b4"/><path d="M117 118L129 120L128 170L117 169Z" fill="#a8a6a8"/><path d="M101 156L118 154L118 170L101 177Z" fill="#9a989a"/><rect x="55" y="153" width="19" height="25" fill="#b89a70"/><rect x="55" y="155.0" width="19" height="1.2" fill="#e0c8a0"/><rect x="55" y="159.2" width="19" height="1.2" fill="#e0c8a0"/><rect x="55" y="163.4" width="19" height="1.2" fill="#e0c8a0"/><rect x="55" y="167.6" width="19" height="1.2" fill="#e0c8a0"/><rect x="55" y="171.8" width="19" height="1.2" fill="#e0c8a0"/><rect x="55" y="176.0" width="19" height="1.2" fill="#e0c8a0"/><path d="M136 175L135.2 143.61903642807854" stroke="#7e6a50" stroke-width="3.1" stroke-linecap="square"/><path d="M135.2 145.61903642807854L128 131.61903642807854" stroke="#7e6a50" stroke-width="2.5" stroke-linecap="square"/><path d="M135.2 145.61903642807854L144 132.61903642807854" stroke="#7e6a50" stroke-width="2.5" stroke-linecap="square"/><path d="M131 136.61903642807854L127 127.61903642807854" stroke="#7e6a50" stroke-width="2.2" stroke-linecap="square"/><path d="M150 175L149.2 144.47817908864397" stroke="#7e6a50" stroke-width="3.1" stroke-linecap="square"/><path d="M149.2 146.47817908864397L142 132.47817908864397" stroke="#7e6a50" stroke-width="2.5" stroke-linecap="square"/><path d="M149.2 146.47817908864397L158 133.47817908864397" stroke="#7e6a50" stroke-width="2.5" stroke-linecap="square"/><path d="M145 137.47817908864397L141 128.47817908864397" stroke="#7e6a50" stroke-width="2.2" stroke-linecap="square"/><path d="M171 175L170.2 147.39368467218983" stroke="#7e6a50" stroke-width="3.1" stroke-linecap="square"/><path d="M170.2 149.39368467218983L163 135.39368467218983" stroke="#7e6a50" stroke-width="2.5" stroke-linecap="square"/><path d="M170.2 149.39368467218983L179 136.39368467218983" stroke="#7e6a50" stroke-width="2.5" stroke-linecap="square"/><path d="M166 140.39368467218983L162 131.39368467218983" stroke="#7e6a50" stroke-width="2.2" stroke-linecap="square"/><path d="M186.6 175L185.79999999999998 143.72520056079819" stroke="#7e6a50" stroke-width="3.1" stroke-linecap="square"/><path d="M185.79999999999998 145.72520056079819L178.6 131.72520056079819" stroke="#7e6a50" stroke-width="2.5" stroke-linecap="square"/><path d="M185.79999999999998 145.72520056079819L194.6 132.72520056079819" stroke="#7e6a50" stroke-width="2.5" stroke-linecap="square"/><path d="M181.6 136.72520056079819L177.6 127.72520056079819" stroke="#7e6a50" stroke-width="2.2" stroke-linecap="square"/><path d="M199.7 175L198.89999999999998 144.06273018449818" stroke="#7e6a50" stroke-width="3.1" stroke-linecap="square"/><path d="M198.89999999999998 146.06273018449818L191.7 132.06273018449818" stroke="#7e6a50" stroke-width="2.5" stroke-linecap="square"/><path d="M198.89999999999998 146.06273018449818L207.7 133.06273018449818" stroke="#7e6a50" stroke-width="2.5" stroke-linecap="square"/><path d="M194.7 137.06273018449818L190.7 128.06273018449818" stroke="#7e6a50" stroke-width="2.2" stroke-linecap="square"/><path d="M206.7 175L205.89999999999998 144.69907863079916" stroke="#7e6a50" stroke-width="3.1" stroke-linecap="square"/><path d="M205.89999999999998 146.69907863079916L198.7 132.69907863079916" stroke="#7e6a50" stroke-width="2.5" stroke-linecap="square"/><path d="M205.89999999999998 146.69907863079916L214.7 133.69907863079916" stroke="#7e6a50" stroke-width="2.5" stroke-linecap="square"/><path d="M201.7 137.69907863079916L197.7 128.69907863079916" stroke="#7e6a50" stroke-width="2.2" stroke-linecap="square"/><path d="M217.4 175L216.6 141.477282750839" stroke="#7e6a50" stroke-width="3.1" stroke-linecap="square"/><path d="M216.6 143.477282750839L209.4 129.477282750839" stroke="#7e6a50" stroke-width="2.5" stroke-linecap="square"/><path d="M216.6 143.477282750839L225.4 130.477282750839" stroke="#7e6a50" stroke-width="2.5" stroke-linecap="square"/><path d="M212.4 134.477282750839L208.4 125.47728275083901" stroke="#7e6a50" stroke-width="2.2" stroke-linecap="square"/><path d="M225.7 175L224.89999999999998 144.09526911233445" stroke="#7e6a50" stroke-width="3.1" stroke-linecap="square"/><path d="M224.89999999999998 146.09526911233445L217.7 132.09526911233445" stroke="#7e6a50" stroke-width="2.5" stroke-linecap="square"/><path d="M224.89999999999998 146.09526911233445L233.7 133.09526911233445" stroke="#7e6a50" stroke-width="2.5" stroke-linecap="square"/><path d="M220.7 137.09526911233445L216.7 128.09526911233445" stroke="#7e6a50" stroke-width="2.2" stroke-linecap="square"/><path d="M238.7 175L237.89999999999998 145.03906176173442" stroke="#7e6a50" stroke-width="3.1" stroke-linecap="square"/><path d="M237.89999999999998 147.03906176173442L230.7 133.03906176173442" stroke="#7e6a50" stroke-width="2.5" stroke-linecap="square"/><path d="M237.89999999999998 147.03906176173442L246.7 134.03906176173442" stroke="#7e6a50" stroke-width="2.5" stroke-linecap="square"/><path d="M233.7 138.03906176173442L229.7 129.03906176173442" stroke="#7e6a50" stroke-width="2.2" stroke-linecap="square"/><path d="M258 175L257.2 146.3438149801596" stroke="#7e6a50" stroke-width="3.1" stroke-linecap="square"/><path d="M257.2 148.3438149801596L250 134.3438149801596" stroke="#7e6a50" stroke-width="2.5" stroke-linecap="square"/><path d="M257.2 148.3438149801596L266 135.3438149801596" stroke="#7e6a50" stroke-width="2.5" stroke-linecap="square"/><path d="M253 139.3438149801596L249 130.3438149801596" stroke="#7e6a50" stroke-width="2.2" stroke-linecap="square"/><path d="M300 175L299.2 140.75298764983376" stroke="#7e6a50" stroke-width="3.1" stroke-linecap="square"/><path d="M299.2 142.75298764983376L292 128.75298764983376" stroke="#7e6a50" stroke-width="2.5" stroke-linecap="square"/><path d="M299.2 142.75298764983376L308 129.75298764983376" stroke="#7e6a50" stroke-width="2.5" stroke-linecap="square"/><path d="M295 133.75298764983376L291 124.75298764983376" stroke="#7e6a50" stroke-width="2.2" stroke-linecap="square"/><path d="M322 175L321.2 142.4272101009962" stroke="#7e6a50" stroke-width="3.1" stroke-linecap="square"/><path d="M321.2 144.4272101009962L314 130.4272101009962" stroke="#7e6a50" stroke-width="2.5" stroke-linecap="square"/><path d="M321.2 144.4272101009962L330 131.4272101009962" stroke="#7e6a50" stroke-width="2.5" stroke-linecap="square"/><path d="M317 135.4272101009962L313 126.4272101009962" stroke="#7e6a50" stroke-width="2.2" stroke-linecap="square"/><path d="M5 175L6 135" stroke="#7e6a50" stroke-width="3.3000000000000003" stroke-linecap="square"/><path d="M6 137L-4 120" stroke="#7e6a50" stroke-width="2.6" stroke-linecap="square"/><path d="M6 137L15 121" stroke="#7e6a50" stroke-width="2.6" stroke-linecap="square"/><path d="M20 175L21 135" stroke="#7e6a50" stroke-width="3.3000000000000003" stroke-linecap="square"/><path d="M21 137L11 120" stroke="#7e6a50" stroke-width="2.6" stroke-linecap="square"/><path d="M21 137L30 121" stroke="#7e6a50" stroke-width="2.6" stroke-linecap="square"/><path d="M60 175L61 135" stroke="#7e6a50" stroke-width="3.3000000000000003" stroke-linecap="square"/><path d="M61 137L51 120" stroke="#7e6a50" stroke-width="2.6" stroke-linecap="square"/><path d="M61 137L70 121" stroke="#7e6a50" stroke-width="2.6" stroke-linecap="square"/><path d="M132 175L133 135" stroke="#7e6a50" stroke-width="3.3000000000000003" stroke-linecap="square"/><path d="M133 137L123 120" stroke="#7e6a50" stroke-width="2.6" stroke-linecap="square"/><path d="M133 137L142 121" stroke="#7e6a50" stroke-width="2.6" stroke-linecap="square"/><path d="M41.6 178L45 108.5" stroke="#7e6a50" stroke-width="4.5" stroke-linecap="square"/><path d="M45 108.5L25.3 85.5" stroke="#7e6a50" stroke-width="3.5" stroke-linecap="square"/><path d="M45 110.6L67.8 91" stroke="#7e6a50" stroke-width="3.5" stroke-linecap="square"/><path d="M37.3 128L14.4 96.5" stroke="#7e6a50" stroke-width="3.3000000000000003" stroke-linecap="square"/><path d="M48 134.7L76.6 121.6" stroke="#7e6a50" stroke-width="3.3000000000000003" stroke-linecap="square"/><path d="M39.5 119L9 117" stroke="#7e6a50" stroke-width="2.9000000000000004" stroke-linecap="square"/><path d="M55 98L62 88" stroke="#7e6a50" stroke-width="2.7" stroke-linecap="square"/><path d="M15.5 178L11 123.7" stroke="#7e6a50" stroke-width="3.9" stroke-linecap="square"/><path d="M11 123.7L0 110" stroke="#7e6a50" stroke-width="3.1" stroke-linecap="square"/><path d="M12 130L30 112" stroke="#7e6a50" stroke-width="2.9000000000000004" stroke-linecap="square"/><path d="M24 95L15 82" stroke="#7e6a50" stroke-width="2.7" stroke-linecap="square"/><path d="M100.6 182.7L106 97.6" stroke="#7e6a50" stroke-width="4.7" stroke-linecap="square"/><path d="M106 102L88.6 78" stroke="#7e6a50" stroke-width="3.7" stroke-linecap="square"/><path d="M107 102L129 84.5" stroke="#7e6a50" stroke-width="3.7" stroke-linecap="square"/><path d="M100.6 136.8L65.7 91" stroke="#7e6a50" stroke-width="3.5" stroke-linecap="square"/><path d="M102.7 126L142 99.7" stroke="#7e6a50" stroke-width="3.5" stroke-linecap="square"/><path d="M104 112L92 100" stroke="#7e6a50" stroke-width="2.9000000000000004" stroke-linecap="square"/><path d="M120 115L145 110" stroke="#7e6a50" stroke-width="2.7" stroke-linecap="square"/><path d="M70 96L60 100" stroke="#7e6a50" stroke-width="2.5" stroke-linecap="square"/><path d="M140 175L137.7 130.3" stroke="#7e6a50" stroke-width="3.7" stroke-linecap="square"/><path d="M137.7 132L128 112" stroke="#7e6a50" stroke-width="2.9000000000000004" stroke-linecap="square"/><path d="M138 134L152 116" stroke="#7e6a50" stroke-width="2.9000000000000004" stroke-linecap="square"/><path d="M247 177L243.4 135" stroke="#7e6a50" stroke-width="4.1" stroke-linecap="square"/><path d="M243.4 138L217.4 104.3" stroke="#7e6a50" stroke-width="3.3000000000000003" stroke-linecap="square"/><path d="M244 136L241 80.6" stroke="#7e6a50" stroke-width="3.3000000000000003" stroke-linecap="square"/><path d="M245 132L271.8 97.2" stroke="#7e6a50" stroke-width="3.3000000000000003" stroke-linecap="square"/><path d="M226 112L205 108" stroke="#7e6a50" stroke-width="2.7" stroke-linecap="square"/><path d="M283.6 180L274 135" stroke="#7e6a50" stroke-width="4.9" stroke-linecap="square"/><path d="M274 137L243.4 102" stroke="#7e6a50" stroke-width="3.7" stroke-linecap="square"/><path d="M276 132L307 73.5" stroke="#7e6a50" stroke-width="4.1" stroke-linecap="square"/><path d="M307 73.5L313 55" stroke="#7e6a50" stroke-width="3.3000000000000003" stroke-linecap="square"/><path d="M300 86L318 66" stroke="#7e6a50" stroke-width="3.1" stroke-linecap="square"/><path d="M280 128L328.5 97.2" stroke="#7e6a50" stroke-width="3.7" stroke-linecap="square"/><path d="M260 116L255 98" stroke="#7e6a50" stroke-width="2.7" stroke-linecap="square"/><path d="M295.4 180L290.7 144.5" stroke="#7e6a50" stroke-width="4.300000000000001" stroke-linecap="square"/><path d="M291 146L270 128" stroke="#7e6a50" stroke-width="3.1" stroke-linecap="square"/><path d="M292 144L320 120" stroke="#7e6a50" stroke-width="3.1" stroke-linecap="square"/><path d="M326 172L316.7 94.8" stroke="#7e6a50" stroke-width="4.1" stroke-linecap="square"/><path d="M317 100L330 90" stroke="#7e6a50" stroke-width="3.1" stroke-linecap="square"/><path d="M318 120L300 105" stroke="#7e6a50" stroke-width="2.9000000000000004" stroke-linecap="square"/><path d="M312 178L306 140" stroke="#7e6a50" stroke-width="3.7" stroke-linecap="square"/><path d="M306 142L330 125" stroke="#7e6a50" stroke-width="2.9000000000000004" stroke-linecap="square"/><path d="M300 180L296 120" stroke="#7e6a50" stroke-width="3.9" stroke-linecap="square"/><path d="M296 122L276 96" stroke="#7e6a50" stroke-width="3.1" stroke-linecap="square"/><path d="M297 120L318 92" stroke="#7e6a50" stroke-width="3.1" stroke-linecap="square"/><path d="M282 108L270 88" stroke="#7e6a50" stroke-width="2.7" stroke-linecap="square"/><path d="M322 180L328 110" stroke="#7e6a50" stroke-width="3.7" stroke-linecap="square"/><path d="M328 112L320 90" stroke="#7e6a50" stroke-width="2.9000000000000004" stroke-linecap="square"/><path d="M270 150L300 128" stroke="#7e6a50" stroke-width="3.1" stroke-linecap="square"/><path d="M305 160L330 140" stroke="#7e6a50" stroke-width="3.1" stroke-linecap="square"/><path d="M262 178L258 140" stroke="#7e6a50" stroke-width="3.5" stroke-linecap="square"/><path d="M258 142L240 122" stroke="#7e6a50" stroke-width="2.9000000000000004" stroke-linecap="square"/><path d="M259 140L280 118" stroke="#7e6a50" stroke-width="2.9000000000000004" stroke-linecap="square"/><path d="M288 160L310 100" stroke="#7e6a50" stroke-width="3.3000000000000003" stroke-linecap="square"/><path d="M310 100L325 80" stroke="#7e6a50" stroke-width="2.9000000000000004" stroke-linecap="square"/><path d="M318 150L330 132" stroke="#7e6a50" stroke-width="2.9000000000000004" stroke-linecap="square"/><path d="M276 170L262 150" stroke="#7e6a50" stroke-width="2.9000000000000004" stroke-linecap="square"/><path d="M230 178L232 145" stroke="#7e6a50" stroke-width="3.3000000000000003" stroke-linecap="square"/><path d="M232 147L222 130" stroke="#7e6a50" stroke-width="2.6" stroke-linecap="square"/><path d="M232 147L245 128" stroke="#7e6a50" stroke-width="2.6" stroke-linecap="square"/><path d="M136 175L135.2 143.61903642807854" stroke="#a89a80" stroke-width="2.0" stroke-linecap="square"/><path d="M135.2 145.61903642807854L128 131.61903642807854" stroke="#a89a80" stroke-width="1.4" stroke-linecap="square"/><path d="M135.2 145.61903642807854L144 132.61903642807854" stroke="#a89a80" stroke-width="1.4" stroke-linecap="square"/><path d="M131 136.61903642807854L127 127.61903642807854" stroke="#a89a80" stroke-width="1.1" stroke-linecap="square"/><path d="M150 175L149.2 144.47817908864397" stroke="#a89a80" stroke-width="2.0" stroke-linecap="square"/><path d="M149.2 146.47817908864397L142 132.47817908864397" stroke="#a89a80" stroke-width="1.4" stroke-linecap="square"/><path d="M149.2 146.47817908864397L158 133.47817908864397" stroke="#a89a80" stroke-width="1.4" stroke-linecap="square"/><path d="M145 137.47817908864397L141 128.47817908864397" stroke="#a89a80" stroke-width="1.1" stroke-linecap="square"/><path d="M171 175L170.2 147.39368467218983" stroke="#a89a80" stroke-width="2.0" stroke-linecap="square"/><path d="M170.2 149.39368467218983L163 135.39368467218983" stroke="#a89a80" stroke-width="1.4" stroke-linecap="square"/><path d="M170.2 149.39368467218983L179 136.39368467218983" stroke="#a89a80" stroke-width="1.4" stroke-linecap="square"/><path d="M166 140.39368467218983L162 131.39368467218983" stroke="#a89a80" stroke-width="1.1" stroke-linecap="square"/><path d="M186.6 175L185.79999999999998 143.72520056079819" stroke="#a89a80" stroke-width="2.0" stroke-linecap="square"/><path d="M185.79999999999998 145.72520056079819L178.6 131.72520056079819" stroke="#a89a80" stroke-width="1.4" stroke-linecap="square"/><path d="M185.79999999999998 145.72520056079819L194.6 132.72520056079819" stroke="#a89a80" stroke-width="1.4" stroke-linecap="square"/><path d="M181.6 136.72520056079819L177.6 127.72520056079819" stroke="#a89a80" stroke-width="1.1" stroke-linecap="square"/><path d="M199.7 175L198.89999999999998 144.06273018449818" stroke="#a89a80" stroke-width="2.0" stroke-linecap="square"/><path d="M198.89999999999998 146.06273018449818L191.7 132.06273018449818" stroke="#a89a80" stroke-width="1.4" stroke-linecap="square"/><path d="M198.89999999999998 146.06273018449818L207.7 133.06273018449818" stroke="#a89a80" stroke-width="1.4" stroke-linecap="square"/><path d="M194.7 137.06273018449818L190.7 128.06273018449818" stroke="#a89a80" stroke-width="1.1" stroke-linecap="square"/><path d="M206.7 175L205.89999999999998 144.69907863079916" stroke="#a89a80" stroke-width="2.0" stroke-linecap="square"/><path d="M205.89999999999998 146.69907863079916L198.7 132.69907863079916" stroke="#a89a80" stroke-width="1.4" stroke-linecap="square"/><path d="M205.89999999999998 146.69907863079916L214.7 133.69907863079916" stroke="#a89a80" stroke-width="1.4" stroke-linecap="square"/><path d="M201.7 137.69907863079916L197.7 128.69907863079916" stroke="#a89a80" stroke-width="1.1" stroke-linecap="square"/><path d="M217.4 175L216.6 141.477282750839" stroke="#a89a80" stroke-width="2.0" stroke-linecap="square"/><path d="M216.6 143.477282750839L209.4 129.477282750839" stroke="#a89a80" stroke-width="1.4" stroke-linecap="square"/><path d="M216.6 143.477282750839L225.4 130.477282750839" stroke="#a89a80" stroke-width="1.4" stroke-linecap="square"/><path d="M212.4 134.477282750839L208.4 125.47728275083901" stroke="#a89a80" stroke-width="1.1" stroke-linecap="square"/><path d="M225.7 175L224.89999999999998 144.09526911233445" stroke="#a89a80" stroke-width="2.0" stroke-linecap="square"/><path d="M224.89999999999998 146.09526911233445L217.7 132.09526911233445" stroke="#a89a80" stroke-width="1.4" stroke-linecap="square"/><path d="M224.89999999999998 146.09526911233445L233.7 133.09526911233445" stroke="#a89a80" stroke-width="1.4" stroke-linecap="square"/><path d="M220.7 137.09526911233445L216.7 128.09526911233445" stroke="#a89a80" stroke-width="1.1" stroke-linecap="square"/><path d="M238.7 175L237.89999999999998 145.03906176173442" stroke="#a89a80" stroke-width="2.0" stroke-linecap="square"/><path d="M237.89999999999998 147.03906176173442L230.7 133.03906176173442" stroke="#a89a80" stroke-width="1.4" stroke-linecap="square"/><path d="M237.89999999999998 147.03906176173442L246.7 134.03906176173442" stroke="#a89a80" stroke-width="1.4" stroke-linecap="square"/><path d="M233.7 138.03906176173442L229.7 129.03906176173442" stroke="#a89a80" stroke-width="1.1" stroke-linecap="square"/><path d="M258 175L257.2 146.3438149801596" stroke="#a89a80" stroke-width="2.0" stroke-linecap="square"/><path d="M257.2 148.3438149801596L250 134.3438149801596" stroke="#a89a80" stroke-width="1.4" stroke-linecap="square"/><path d="M257.2 148.3438149801596L266 135.3438149801596" stroke="#a89a80" stroke-width="1.4" stroke-linecap="square"/><path d="M253 139.3438149801596L249 130.3438149801596" stroke="#a89a80" stroke-width="1.1" stroke-linecap="square"/><path d="M300 175L299.2 140.75298764983376" stroke="#a89a80" stroke-width="2.0" stroke-linecap="square"/><path d="M299.2 142.75298764983376L292 128.75298764983376" stroke="#a89a80" stroke-width="1.4" stroke-linecap="square"/><path d="M299.2 142.75298764983376L308 129.75298764983376" stroke="#a89a80" stroke-width="1.4" stroke-linecap="square"/><path d="M295 133.75298764983376L291 124.75298764983376" stroke="#a89a80" stroke-width="1.1" stroke-linecap="square"/><path d="M322 175L321.2 142.4272101009962" stroke="#a89a80" stroke-width="2.0" stroke-linecap="square"/><path d="M321.2 144.4272101009962L314 130.4272101009962" stroke="#a89a80" stroke-width="1.4" stroke-linecap="square"/><path d="M321.2 144.4272101009962L330 131.4272101009962" stroke="#a89a80" stroke-width="1.4" stroke-linecap="square"/><path d="M317 135.4272101009962L313 126.4272101009962" stroke="#a89a80" stroke-width="1.1" stroke-linecap="square"/><path d="M5 175L6 135" stroke="#a89a80" stroke-width="2.2" stroke-linecap="square"/><path d="M6 137L-4 120" stroke="#a89a80" stroke-width="1.5" stroke-linecap="square"/><path d="M6 137L15 121" stroke="#a89a80" stroke-width="1.5" stroke-linecap="square"/><path d="M20 175L21 135" stroke="#a89a80" stroke-width="2.2" stroke-linecap="square"/><path d="M21 137L11 120" stroke="#a89a80" stroke-width="1.5" stroke-linecap="square"/><path d="M21 137L30 121" stroke="#a89a80" stroke-width="1.5" stroke-linecap="square"/><path d="M60 175L61 135" stroke="#a89a80" stroke-width="2.2" stroke-linecap="square"/><path d="M61 137L51 120" stroke="#a89a80" stroke-width="1.5" stroke-linecap="square"/><path d="M61 137L70 121" stroke="#a89a80" stroke-width="1.5" stroke-linecap="square"/><path d="M132 175L133 135" stroke="#a89a80" stroke-width="2.2" stroke-linecap="square"/><path d="M133 137L123 120" stroke="#a89a80" stroke-width="1.5" stroke-linecap="square"/><path d="M133 137L142 121" stroke="#a89a80" stroke-width="1.5" stroke-linecap="square"/><path d="M41.6 178L45 108.5" stroke="#a89072" stroke-width="3.4" stroke-linecap="square"/><path d="M45 108.5L25.3 85.5" stroke="#a89072" stroke-width="2.4" stroke-linecap="square"/><path d="M45 110.6L67.8 91" stroke="#a89072" stroke-width="2.4" stroke-linecap="square"/><path d="M37.3 128L14.4 96.5" stroke="#a89072" stroke-width="2.2" stroke-linecap="square"/><path d="M48 134.7L76.6 121.6" stroke="#a89072" stroke-width="2.2" stroke-linecap="square"/><path d="M39.5 119L9 117" stroke="#a89072" stroke-width="1.8" stroke-linecap="square"/><path d="M55 98L62 88" stroke="#a89072" stroke-width="1.6" stroke-linecap="square"/><path d="M15.5 178L11 123.7" stroke="#a89072" stroke-width="2.8" stroke-linecap="square"/><path d="M11 123.7L0 110" stroke="#a89072" stroke-width="2" stroke-linecap="square"/><path d="M12 130L30 112" stroke="#a89072" stroke-width="1.8" stroke-linecap="square"/><path d="M24 95L15 82" stroke="#a89072" stroke-width="1.6" stroke-linecap="square"/><path d="M100.6 182.7L106 97.6" stroke="#a89072" stroke-width="3.6" stroke-linecap="square"/><path d="M106 102L88.6 78" stroke="#a89072" stroke-width="2.6" stroke-linecap="square"/><path d="M107 102L129 84.5" stroke="#a89072" stroke-width="2.6" stroke-linecap="square"/><path d="M100.6 136.8L65.7 91" stroke="#a89072" stroke-width="2.4" stroke-linecap="square"/><path d="M102.7 126L142 99.7" stroke="#a89072" stroke-width="2.4" stroke-linecap="square"/><path d="M104 112L92 100" stroke="#a89072" stroke-width="1.8" stroke-linecap="square"/><path d="M120 115L145 110" stroke="#a89072" stroke-width="1.6" stroke-linecap="square"/><path d="M70 96L60 100" stroke="#a89072" stroke-width="1.4" stroke-linecap="square"/><path d="M140 175L137.7 130.3" stroke="#a89072" stroke-width="2.6" stroke-linecap="square"/><path d="M137.7 132L128 112" stroke="#a89072" stroke-width="1.8" stroke-linecap="square"/><path d="M138 134L152 116" stroke="#a89072" stroke-width="1.8" stroke-linecap="square"/><path d="M247 177L243.4 135" stroke="#a89072" stroke-width="3" stroke-linecap="square"/><path d="M243.4 138L217.4 104.3" stroke="#a89072" stroke-width="2.2" stroke-linecap="square"/><path d="M244 136L241 80.6" stroke="#a89072" stroke-width="2.2" stroke-linecap="square"/><path d="M245 132L271.8 97.2" stroke="#a89072" stroke-width="2.2" stroke-linecap="square"/><path d="M226 112L205 108" stroke="#a89072" stroke-width="1.6" stroke-linecap="square"/><path d="M283.6 180L274 135" stroke="#a89072" stroke-width="3.8" stroke-linecap="square"/><path d="M274 137L243.4 102" stroke="#a89072" stroke-width="2.6" stroke-linecap="square"/><path d="M276 132L307 73.5" stroke="#a89072" stroke-width="3" stroke-linecap="square"/><path d="M307 73.5L313 55" stroke="#a89072" stroke-width="2.2" stroke-linecap="square"/><path d="M300 86L318 66" stroke="#a89072" stroke-width="2" stroke-linecap="square"/><path d="M280 128L328.5 97.2" stroke="#a89072" stroke-width="2.6" stroke-linecap="square"/><path d="M260 116L255 98" stroke="#a89072" stroke-width="1.6" stroke-linecap="square"/><path d="M295.4 180L290.7 144.5" stroke="#a89072" stroke-width="3.2" stroke-linecap="square"/><path d="M291 146L270 128" stroke="#a89072" stroke-width="2" stroke-linecap="square"/><path d="M292 144L320 120" stroke="#a89072" stroke-width="2" stroke-linecap="square"/><path d="M326 172L316.7 94.8" stroke="#a89072" stroke-width="3" stroke-linecap="square"/><path d="M317 100L330 90" stroke="#a89072" stroke-width="2" stroke-linecap="square"/><path d="M318 120L300 105" stroke="#a89072" stroke-width="1.8" stroke-linecap="square"/><path d="M312 178L306 140" stroke="#a89072" stroke-width="2.6" stroke-linecap="square"/><path d="M306 142L330 125" stroke="#a89072" stroke-width="1.8" stroke-linecap="square"/><path d="M300 180L296 120" stroke="#a89072" stroke-width="2.8" stroke-linecap="square"/><path d="M296 122L276 96" stroke="#a89072" stroke-width="2" stroke-linecap="square"/><path d="M297 120L318 92" stroke="#a89072" stroke-width="2" stroke-linecap="square"/><path d="M282 108L270 88" stroke="#a89072" stroke-width="1.6" stroke-linecap="square"/><path d="M322 180L328 110" stroke="#a89072" stroke-width="2.6" stroke-linecap="square"/><path d="M328 112L320 90" stroke="#a89072" stroke-width="1.8" stroke-linecap="square"/><path d="M270 150L300 128" stroke="#a89072" stroke-width="2" stroke-linecap="square"/><path d="M305 160L330 140" stroke="#a89072" stroke-width="2" stroke-linecap="square"/><path d="M262 178L258 140" stroke="#a89072" stroke-width="2.4" stroke-linecap="square"/><path d="M258 142L240 122" stroke="#a89072" stroke-width="1.8" stroke-linecap="square"/><path d="M259 140L280 118" stroke="#a89072" stroke-width="1.8" stroke-linecap="square"/><path d="M288 160L310 100" stroke="#a89072" stroke-width="2.2" stroke-linecap="square"/><path d="M310 100L325 80" stroke="#a89072" stroke-width="1.8" stroke-linecap="square"/><path d="M318 150L330 132" stroke="#a89072" stroke-width="1.8" stroke-linecap="square"/><path d="M276 170L262 150" stroke="#a89072" stroke-width="1.8" stroke-linecap="square"/><path d="M230 178L232 145" stroke="#a89072" stroke-width="2.2" stroke-linecap="square"/><path d="M232 147L222 130" stroke="#a89072" stroke-width="1.5" stroke-linecap="square"/><path d="M232 147L245 128" stroke="#a89072" stroke-width="1.5" stroke-linecap="square"/><path d="M0 166Q40 163 80 167T160 165T240 167T330 164V185H0Z" fill="#9a9070" opacity="0.85"/><rect x="0" y="172" width="330" height="13" fill="#987868"/><ellipse cx="54.4" cy="179.1" rx="4.4" ry="3.2" fill="#a88478"/><ellipse cx="326.6" cy="175.0" rx="3.9" ry="2.6" fill="#88a048"/><ellipse cx="260.2" cy="166.3" rx="5.1" ry="1.8" fill="#88a048"/><ellipse cx="247.9" cy="183.5" rx="3.2" ry="3.5" fill="#a88478"/><ellipse cx="243.8" cy="182.6" rx="5.2" ry="3.4" fill="#88a048"/><ellipse cx="178.2" cy="179.2" rx="7.8" ry="2.2" fill="#a88478"/><ellipse cx="51.1" cy="181.5" rx="7.0" ry="1.5" fill="#8aa850"/><ellipse cx="53.2" cy="179.8" rx="5.4" ry="1.9" fill="#98786a"/><ellipse cx="12.3" cy="182.5" rx="3.4" ry="1.9" fill="#90ac58"/><ellipse cx="222.4" cy="181.3" rx="6.8" ry="3.0" fill="#a88478"/><ellipse cx="191.7" cy="179.9" rx="5.8" ry="2.6" fill="#8aa850"/><ellipse cx="128.0" cy="172.5" rx="7.4" ry="2.3" fill="#90ac58"/><ellipse cx="120.5" cy="174.6" rx="4.6" ry="2.5" fill="#98786a"/><ellipse cx="87.7" cy="181.8" rx="6.6" ry="3.5" fill="#90ac58"/><ellipse cx="163.7" cy="175.3" rx="6.0" ry="2.5" fill="#88a048"/><ellipse cx="188.6" cy="172.1" rx="3.6" ry="2.8" fill="#88a048"/><ellipse cx="206.7" cy="181.8" rx="4.7" ry="2.7" fill="#9a8060"/><ellipse cx="101.2" cy="168.0" rx="7.6" ry="1.8" fill="#8aa850"/><ellipse cx="141.5" cy="169.0" rx="6.4" ry="3.3" fill="#8aa850"/><ellipse cx="316.2" cy="173.7" rx="7.8" ry="2.7" fill="#90ac58"/><ellipse cx="291.4" cy="175.3" rx="6.3" ry="3.4" fill="#98786a"/><ellipse cx="81.1" cy="176.7" rx="7.0" ry="3.0" fill="#98786a"/><ellipse cx="159.4" cy="181.9" rx="7.3" ry="2.8" fill="#8aa850"/><ellipse cx="11.5" cy="170.7" rx="3.3" ry="2.2" fill="#98786a"/><ellipse cx="296.7" cy="184.7" rx="6.6" ry="1.6" fill="#a88478"/><ellipse cx="46.1" cy="178.4" rx="5.4" ry="3.4" fill="#a88478"/><ellipse cx="296.8" cy="172.9" rx="7.4" ry="2.7" fill="#90ac58"/><ellipse cx="140.6" cy="177.0" rx="4.5" ry="2.6" fill="#98786a"/><ellipse cx="91.1" cy="180.6" rx="4.9" ry="1.8" fill="#8aa850"/><ellipse cx="236.2" cy="171.0" rx="6.2" ry="3.2" fill="#9a8060"/><ellipse cx="192.8" cy="170.9" rx="6.8" ry="3.1" fill="#98786a"/><ellipse cx="45.7" cy="168.7" rx="3.5" ry="1.6" fill="#98786a"/><ellipse cx="147.5" cy="168.7" rx="6.3" ry="1.8" fill="#8aa850"/><ellipse cx="177.8" cy="172.2" rx="7.4" ry="2.7" fill="#98786a"/><ellipse cx="59.9" cy="182.3" rx="6.5" ry="2.6" fill="#90ac58"/><ellipse cx="15.2" cy="179.5" rx="6.9" ry="3.1" fill="#a88478"/><ellipse cx="2.6" cy="174.8" rx="5.0" ry="2.6" fill="#8aa850"/><ellipse cx="282.0" cy="170.4" rx="6.0" ry="3.0" fill="#a88478"/><ellipse cx="80.8" cy="169.0" rx="7.5" ry="2.1" fill="#a88478"/><ellipse cx="166.0" cy="176.4" rx="3.5" ry="2.7" fill="#88a048"/><ellipse cx="167.7" cy="180.0" rx="4.6" ry="2.9" fill="#88a048"/><ellipse cx="173.5" cy="176.7" rx="6.1" ry="2.2" fill="#8aa850"/><ellipse cx="66.4" cy="167.2" rx="8.0" ry="1.7" fill="#a88478"/><ellipse cx="25.1" cy="167.4" rx="5.5" ry="3.4" fill="#98786a"/><ellipse cx="224.4" cy="179.4" rx="5.6" ry="2.3" fill="#98786a"/><ellipse cx="132.5" cy="170.3" rx="6.3" ry="1.6" fill="#8aa850"/><ellipse cx="90.9" cy="177.2" rx="6.6" ry="2.4" fill="#98786a"/><ellipse cx="78.0" cy="173.3" rx="4.1" ry="3.3" fill="#98786a"/><ellipse cx="215.9" cy="166.7" rx="5.5" ry="2.9" fill="#90ac58"/><ellipse cx="293.9" cy="180.8" rx="6.2" ry="2.7" fill="#a88478"/><ellipse cx="241.2" cy="177.5" rx="4.3" ry="2.5" fill="#a88478"/><ellipse cx="164.6" cy="171.8" rx="7.1" ry="3.4" fill="#98786a"/><ellipse cx="326.4" cy="166.1" rx="4.0" ry="3.3" fill="#9a8060"/><ellipse cx="236.4" cy="167.7" rx="3.4" ry="2.1" fill="#90ac58"/><ellipse cx="311.4" cy="180.1" rx="7.9" ry="3.5" fill="#98786a"/><ellipse cx="54.9" cy="174.2" rx="4.7" ry="2.8" fill="#a88478"/><ellipse cx="224.9" cy="171.0" rx="4.6" ry="2.0" fill="#8aa850"/><ellipse cx="279.0" cy="168.9" rx="5.5" ry="2.0" fill="#a88478"/><ellipse cx="227.1" cy="179.6" rx="7.7" ry="2.4" fill="#90ac58"/><ellipse cx="144.2" cy="177.7" rx="6.3" ry="2.8" fill="#9a8060"/><ellipse cx="205.2" cy="167.9" rx="3.2" ry="3.1" fill="#90ac58"/><ellipse cx="308.5" cy="179.4" rx="3.4" ry="2.7" fill="#8aa850"/><ellipse cx="131.4" cy="174.4" rx="4.2" ry="1.5" fill="#98786a"/><ellipse cx="179.7" cy="167.8" rx="4.0" ry="2.2" fill="#9a8060"/><ellipse cx="1.0" cy="169.2" rx="7.0" ry="3.1" fill="#88a048"/><ellipse cx="174.7" cy="166.9" rx="5.1" ry="3.3" fill="#90ac58"/><ellipse cx="80.6" cy="176.9" rx="7.6" ry="3.3" fill="#88a048"/><ellipse cx="5.8" cy="177.1" rx="5.2" ry="3.2" fill="#8aa850"/><ellipse cx="326.4" cy="178.5" rx="3.3" ry="3.1" fill="#90ac58"/><ellipse cx="200.2" cy="177.8" rx="6.4" ry="2.9" fill="#98786a"/><ellipse cx="50.4" cy="168.9" rx="4.5" ry="2.8" fill="#9a8060"/><ellipse cx="293.7" cy="167.3" rx="3.9" ry="1.7" fill="#8aa850"/><ellipse cx="273.3" cy="172.8" rx="3.3" ry="1.6" fill="#9a8060"/><ellipse cx="163.4" cy="178.9" rx="5.0" ry="1.6" fill="#a88478"/><ellipse cx="76.8" cy="172.8" rx="5.0" ry="2.9" fill="#9a8060"/><ellipse cx="240.2" cy="176.0" rx="4.6" ry="1.9" fill="#8aa850"/><ellipse cx="165.9" cy="179.8" rx="5.7" ry="2.8" fill="#88a048"/><ellipse cx="57.5" cy="179.5" rx="5.4" ry="3.2" fill="#98786a"/><ellipse cx="145.7" cy="166.4" rx="6.4" ry="1.9" fill="#9a8060"/><ellipse cx="256.6" cy="183.2" rx="6.0" ry="1.7" fill="#88a048"/><ellipse cx="102.4" cy="170.0" rx="7.7" ry="3.1" fill="#98786a"/><ellipse cx="3.7" cy="172.7" rx="4.3" ry="1.6" fill="#88a048"/><ellipse cx="124.1" cy="180.2" rx="7.7" ry="2.6" fill="#90ac58"/><ellipse cx="291.0" cy="169.9" rx="5.8" ry="3.1" fill="#88a048"/><ellipse cx="244.2" cy="182.8" rx="7.6" ry="2.0" fill="#9a8060"/><ellipse cx="197.8" cy="172.7" rx="7.1" ry="2.2" fill="#a88478"/><ellipse cx="43.2" cy="166.5" rx="7.8" ry="3.0" fill="#98786a"/><ellipse cx="324.8" cy="180.1" rx="3.5" ry="3.4" fill="#a88478"/><ellipse cx="172.6" cy="183.0" rx="4.5" ry="1.8" fill="#88a048"/><ellipse cx="218.5" cy="177.7" rx="6.9" ry="3.0" fill="#98786a"/><rect x="1.5" y="153" width="5" height="6" fill="#e0a040"/><rect x="1.5" y="164" width="5" height="5.5" fill="#3a3a4a"/><rect x="2.5" y="165" width="3" height="3" fill="#d8d8e0"/><rect x="11" y="164" width="6.5" height="6" fill="#f0e8d0"/><rect x="1.5" y="171" width="5" height="5.5" fill="#3a3a4a"/><rect x="2.5" y="172" width="3" height="3" fill="#d8d8e0"/><rect x="11" y="171" width="6.5" height="6" fill="#f0e8d0"/><rect x="1.5" y="178" width="5" height="5.5" fill="#3a3a4a"/><rect x="2.5" y="179" width="3" height="3" fill="#d8d8e0"/><rect x="11" y="178" width="6.5" height="6" fill="#f0e8d0"/><rect x="11.5" y="164.5" width="5.5" height="5" fill="#d08a50"/><rect x="116" y="179" width="65" height="2.6" fill="#e0c450"/><rect x="116" y="181.6" width="65" height="2.2" fill="#68b8d8"/><rect x="224.5" y="177.6" width="6.2" height="7" fill="#f4ecd8"/><rect x="231.6" y="177.6" width="6.2" height="7" fill="#f4ecd8"/><rect x="238.7" y="177.6" width="6.2" height="7" fill="#f4ecd8"/><rect x="245.8" y="177.6" width="6.2" height="7" fill="#f4ecd8"/><rect x="252.9" y="177.6" width="6.2" height="7" fill="#f4ecd8"/><rect x="260.0" y="177.6" width="6.2" height="7" fill="#f4ecd8"/><rect x="267.1" y="177.6" width="6.2" height="7" fill="#f4ecd8"/><rect x="274.2" y="177.6" width="6.2" height="7" fill="#f4ecd8"/><rect x="281.3" y="177.6" width="6.2" height="7" fill="#f4ecd8"/><rect x="288.4" y="177.6" width="6.2" height="7" fill="#f4ecd8"/></svg>
<div class="t" style="left:278px;top:216.75px;font-size:6.5px;line-height:6.5px;color:#d02828;font-weight:700;font-family:'Liberation Sans', sans-serif;transform:scaleX(0.8032);transform-origin:0 0;font-style:italic;">Slightly hungry</div>
<div class="t" style="left:288.6px;top:227.30px;font-size:6px;line-height:6px;color:#e8e8e8;font-weight:400;font-family:'Liberation Sans', sans-serif;transform:scaleX(0.9688);transform-origin:0 0;">stone bridge</div>
<div class="t" style="left:288px;top:238.50px;font-size:6px;line-height:6px;color:#e8e8e8;font-weight:400;font-family:'Liberation Sans', sans-serif;transform:scaleX(0.9750);transform-origin:0 0;">more actions</div>
<div class="t" style="left:268px;top:64.25px;font-size:5.5px;line-height:5.5px;color:#d8e8f0;font-weight:400;font-family:'Liberation Sans', sans-serif;transform:scaleX(0.7341);transform-origin:0 0;font-style:italic;opacity:0.8;">30/0 / 30 Segment</div>
</body></html>
